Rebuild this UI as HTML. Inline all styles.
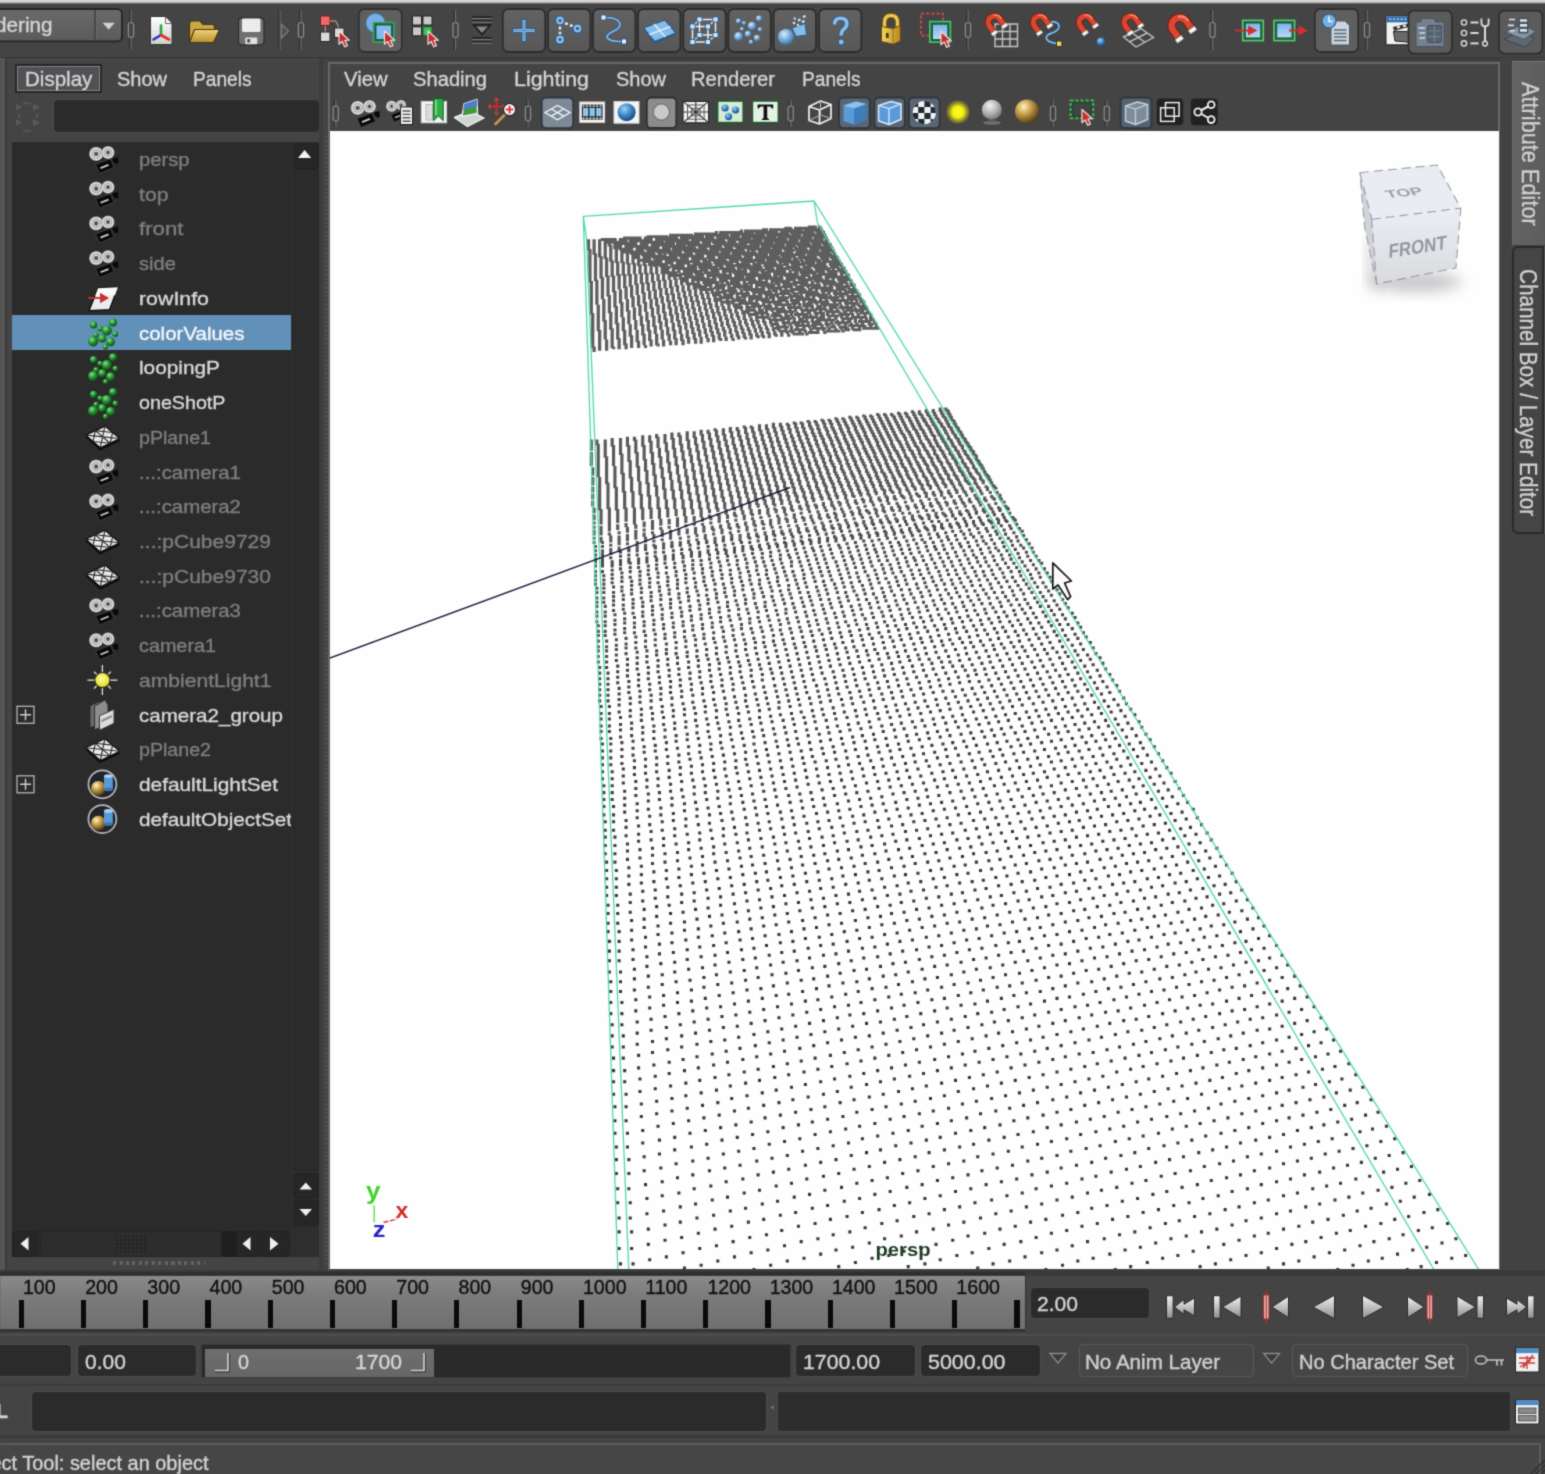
<!DOCTYPE html>
<html><head><meta charset="utf-8"><title>Maya</title><style>
html,body{margin:0;padding:0;}
html{background:#444;overflow:hidden;}
body{width:1545px;height:1474px;overflow:hidden;background:#444;position:relative;
font-family:"Liberation Sans",sans-serif;}
#root{position:absolute;left:-6px;top:-6px;width:1557px;height:1486px;background:#444;filter:url(#pgblur);overflow:hidden;}
#pg{position:absolute;left:6px;top:6px;width:1545px;height:1474px;}
#pg div,#pg svg,#pg span.t{position:absolute;box-sizing:border-box;}
span.t{white-space:pre;line-height:1;transform-origin:0 0;display:block;-webkit-text-stroke:.38px currentColor;}
svg{overflow:visible;}
</style></head><body><div id="root"><div id="pg">
<svg width="0" height="0" style="left:0;top:0"><defs><filter id="pgblur" x="0" y="0" width="100%" height="100%" color-interpolation-filters="sRGB"><feConvolveMatrix order="3" kernelMatrix="1 4 1 4 16 4 1 4 1" edgeMode="duplicate" preserveAlpha="true"/></filter></defs></svg>
<div style="left:-6px;top:-6px;width:1557px;height:9.6px;background:linear-gradient(#dadada,#dadada 62%,#c8c8c8 82%,#444 100%);"></div>
<div style="left:0px;top:57px;width:1545px;height:2.5px;background:#3a3a3a;"></div>
<div style="left:0px;top:58px;width:5px;height:1212px;background:#565656;"></div>
<div style="left:5px;top:58px;width:2px;height:1212px;background:#3a3a3a;"></div>
<div style="left:7px;top:59px;width:316px;height:1211px;background:#444;border-top:1px solid #4e4e4e;"></div>
<div style="left:14.5px;top:63.5px;width:87px;height:29px;background:#4f5154;border:2px solid #272727;box-shadow:inset 0 0 0 1px #868686;"></div>
<span class="t" style="left:24.6px;top:69.69px;font-size:19.5px;color:#d2d2d2;transform:scaleX(1.0541);">Display</span>
<span class="t" style="left:117px;top:69.69px;font-size:19.5px;color:#d2d2d2;transform:scaleX(1.0250);">Show</span>
<span class="t" style="left:192.5px;top:69.69px;font-size:19.5px;color:#d2d2d2;transform:scaleX(0.9811);">Panels</span>
<div style="left:53.5px;top:100px;width:265px;height:31.5px;background:#2b2b2b;border-radius:4px;box-shadow:0 0 0 1px #4c4c4c;"></div>
<div style="left:12px;top:141.5px;width:306.5px;height:1115px;background:#2b2b2b;"></div>
<div style="left:12px;top:315.3px;width:278.5px;height:35.2px;background:#6190b9;"></div>
<span class="t" style="left:139.4px;top:150.86px;font-size:18.6px;color:#7d7d7d;transform:scaleX(1.0853);">persp</span>
<span class="t" style="left:139.4px;top:185.60px;font-size:18.6px;color:#7d7d7d;transform:scaleX(1.1409);">top</span>
<span class="t" style="left:139.4px;top:220.34px;font-size:18.6px;color:#7d7d7d;transform:scaleX(1.1956);">front</span>
<span class="t" style="left:139.4px;top:255.08px;font-size:18.6px;color:#7d7d7d;transform:scaleX(1.0843);">side</span>
<span class="t" style="left:139.4px;top:289.82px;font-size:18.6px;color:#d6d6d6;transform:scaleX(1.1476);">rowInfo</span>
<span class="t" style="left:139.4px;top:324.56px;font-size:18.6px;color:#f4f6f8;transform:scaleX(1.1011);">colorValues</span>
<span class="t" style="left:139.4px;top:359.30px;font-size:18.6px;color:#d6d6d6;transform:scaleX(1.1188);">loopingP</span>
<span class="t" style="left:139.4px;top:394.04px;font-size:18.6px;color:#d6d6d6;transform:scaleX(1.0587);">oneShotP</span>
<span class="t" style="left:139.4px;top:428.78px;font-size:18.6px;color:#7d7d7d;transform:scaleX(1.0547);">pPlane1</span>
<span class="t" style="left:139.4px;top:463.52px;font-size:18.6px;color:#7d7d7d;transform:scaleX(1.0963);">...:camera1</span>
<span class="t" style="left:139.4px;top:498.26px;font-size:18.6px;color:#7d7d7d;transform:scaleX(1.0963);">...:camera2</span>
<span class="t" style="left:139.4px;top:533.00px;font-size:18.6px;color:#7d7d7d;transform:scaleX(1.1296);">...:pCube9729</span>
<span class="t" style="left:139.4px;top:567.74px;font-size:18.6px;color:#7d7d7d;transform:scaleX(1.1296);">...:pCube9730</span>
<span class="t" style="left:139.4px;top:602.48px;font-size:18.6px;color:#7d7d7d;transform:scaleX(1.0963);">...:camera3</span>
<span class="t" style="left:139.4px;top:637.22px;font-size:18.6px;color:#7d7d7d;transform:scaleX(1.0640);">camera1</span>
<span class="t" style="left:139.4px;top:671.96px;font-size:18.6px;color:#7d7d7d;transform:scaleX(1.1339);">ambientLight1</span>
<span class="t" style="left:139.4px;top:706.70px;font-size:18.6px;color:#d6d6d6;transform:scaleX(1.1053);">camera2_group</span>
<span class="t" style="left:139.4px;top:741.44px;font-size:18.6px;color:#7d7d7d;transform:scaleX(1.0547);">pPlane2</span>
<span class="t" style="left:139.4px;top:776.18px;font-size:18.6px;color:#d6d6d6;transform:scaleX(1.1201);">defaultLightSet</span>
<span class="t" style="left:139.4px;top:810.92px;font-size:18.6px;color:#d6d6d6;transform:scaleX(1.1125);">defaultObjectSet</span>
<div style="left:290.5px;top:141.5px;width:28px;height:1115px;background:#2e2e2e;"></div>
<div style="left:293px;top:143px;width:25.5px;height:25.5px;background:#262626;border:1px solid #222;border-radius:3px;"></div>
<div style="left:293px;top:169px;width:25.5px;height:1002px;background:#2b2b2b;border:1px solid #252525;border-radius:3px;"></div>
<div style="left:293px;top:1173px;width:25.5px;height:26px;background:#262626;border:1px solid #222;border-radius:3px;"></div>
<div style="left:293px;top:1200px;width:25.5px;height:26px;background:#262626;border:1px solid #222;border-radius:3px;"></div>
<svg style="left:293px;top:143px;" width="26" height="1090" viewBox="0 0 26 1090"><path d="M5 15 L11.6 7 L18.2 15Z" fill="#f4f4f4"/><path d="M6.5 1046.5 L12.8 1039.5 L19 1046.5Z" fill="#f0f0f0"/><path d="M6.5 1066 L12.8 1073 L19 1066Z" fill="#f0f0f0"/></svg>
<div style="left:12px;top:1231px;width:278.5px;height:25.5px;background:#2a2a2a;"></div>
<div style="left:12px;top:1231px;width:26px;height:25.5px;background:#262626;border:1px solid #222;border-radius:3px;"></div>
<div style="left:40px;top:1231px;width:182px;height:25.5px;background:#2d2d2d;border:1px solid #252525;border-radius:3px;"></div>
<div style="left:222px;top:1231px;width:14px;height:25.5px;background:#1f1f1f;"></div>
<div style="left:236px;top:1231px;width:26px;height:25.5px;background:#262626;border:1px solid #222;border-radius:3px;"></div>
<div style="left:263px;top:1231px;width:26px;height:25.5px;background:#262626;border:1px solid #222;border-radius:3px;"></div>
<svg style="left:12px;top:1231px;" width="280" height="26" viewBox="0 0 280 26"><path d="M16.5 6 L8.5 12.7 L16.5 19.5Z" fill="#f0f0f0"/><path d="M238.5 6 L230.5 12.7 L238.5 19.5Z" fill="#f0f0f0"/><path d="M258 6 L266.5 12.7 L258 19.5Z" fill="#f0f0f0"/><rect x="104" y="5" width="30" height="16" fill="url(#hgrip)"/><defs><pattern id="hgrip" width="4" height="4" patternUnits="userSpaceOnUse"><rect width="2" height="2" fill="#222"/></pattern></defs></svg>
<div style="left:113px;top:1260.5px;width:92px;height:4px;background:repeating-linear-gradient(90deg,#6a6a6a 0 3px,transparent 3px 6.5px);opacity:.8;"></div>
<div style="left:318.5px;top:59px;width:10px;height:1211px;background:#3d3d3d;"></div>
<div style="left:323px;top:59px;width:5.5px;height:1211px;background:#434343;"></div>
<div style="left:325px;top:136px;width:2px;height:1128px;background:repeating-linear-gradient(180deg,#585858 0 2px,transparent 2px 4.3px);opacity:.75;"></div>
<div style="left:328px;top:62px;width:1172px;height:1208px;background:#444;border:2px solid #686868;border-bottom:none;"></div>
<span class="t" style="left:343.5px;top:69.69px;font-size:19.5px;color:#d2d2d2;transform:scaleX(1.0378);">View</span>
<span class="t" style="left:412.5px;top:69.69px;font-size:19.5px;color:#d2d2d2;transform:scaleX(1.0340);">Shading</span>
<span class="t" style="left:514px;top:69.69px;font-size:19.5px;color:#d2d2d2;transform:scaleX(1.0979);">Lighting</span>
<span class="t" style="left:615.5px;top:69.69px;font-size:19.5px;color:#d2d2d2;transform:scaleX(1.0250);">Show</span>
<span class="t" style="left:691px;top:69.69px;font-size:19.5px;color:#d2d2d2;transform:scaleX(1.0332);">Renderer</span>
<span class="t" style="left:802px;top:69.69px;font-size:19.5px;color:#d2d2d2;transform:scaleX(0.9811);">Panels</span>
<div style="left:329.5px;top:131px;width:1169.2px;height:1137.5px;background:#fefefe;overflow:hidden;"></div>
<div style="left:1500px;top:58px;width:45px;height:1214px;background:#424242;"></div>
<div style="left:1511.5px;top:61px;width:40px;height:184px;background:linear-gradient(90deg,#636363,#5b5b5b);border-top:1px solid #777;border-left:1px solid #6a6a6a;"></div>
<div style="left:1543px;top:246px;width:3px;height:288px;background:#555;"></div>
<div style="left:1512px;top:245.5px;width:31.5px;height:288px;background:#454545;border:2px solid #2a2a2a;border-radius:6px 0 0 6px;"></div>
<span class="t" style="left:1541.2px;top:82.3px;font-size:23px;color:#d0d0d0;transform-origin:0 0;transform:rotate(90deg) scaleX(.945);">Attribute Editor</span>
<span class="t" style="left:1539.3px;top:268.5px;font-size:23px;color:#d0d0d0;transform-origin:0 0;transform:rotate(90deg) scaleX(.899);">Channel Box / Layer Editor</span>
<div style="left:0px;top:1270px;width:1545px;height:6px;background:#3a3a3a;"></div>
<div style="left:0px;top:1272px;width:1025px;height:3px;background:#2f2f2f;"></div>
<div style="left:0px;top:1275.5px;width:1024.5px;height:53px;background:linear-gradient(#8a8a8a,#7c7c7c 35%,#6f6f6f);"></div>
<div style="left:0px;top:1328.5px;width:1025px;height:3px;background:#353535;"></div>
<div style="left:1024.5px;top:1275.5px;width:1.5px;height:53px;background:#333;"></div>
<div style="left:18.7px;top:1300px;width:5.2px;height:28px;background:#0a0a0a;"></div>
<span class="t" style="left:22.9px;top:1278.01px;font-size:19.6px;color:#111;transform:scaleX(1.0000);">100</span>
<div style="left:80.93px;top:1300px;width:5.2px;height:28px;background:#0a0a0a;"></div>
<span class="t" style="left:85.13px;top:1278.01px;font-size:19.6px;color:#111;transform:scaleX(1.0000);">200</span>
<div style="left:143.16px;top:1300px;width:5.2px;height:28px;background:#0a0a0a;"></div>
<span class="t" style="left:147.36px;top:1278.01px;font-size:19.6px;color:#111;transform:scaleX(1.0000);">300</span>
<div style="left:205.39px;top:1300px;width:5.2px;height:28px;background:#0a0a0a;"></div>
<span class="t" style="left:209.59px;top:1278.01px;font-size:19.6px;color:#111;transform:scaleX(1.0000);">400</span>
<div style="left:267.62px;top:1300px;width:5.2px;height:28px;background:#0a0a0a;"></div>
<span class="t" style="left:271.82px;top:1278.01px;font-size:19.6px;color:#111;transform:scaleX(1.0000);">500</span>
<div style="left:329.85px;top:1300px;width:5.2px;height:28px;background:#0a0a0a;"></div>
<span class="t" style="left:334.05px;top:1278.01px;font-size:19.6px;color:#111;transform:scaleX(1.0000);">600</span>
<div style="left:392.08px;top:1300px;width:5.2px;height:28px;background:#0a0a0a;"></div>
<span class="t" style="left:396.28px;top:1278.01px;font-size:19.6px;color:#111;transform:scaleX(1.0000);">700</span>
<div style="left:454.31px;top:1300px;width:5.2px;height:28px;background:#0a0a0a;"></div>
<span class="t" style="left:458.51px;top:1278.01px;font-size:19.6px;color:#111;transform:scaleX(1.0000);">800</span>
<div style="left:516.54px;top:1300px;width:5.2px;height:28px;background:#0a0a0a;"></div>
<span class="t" style="left:520.74px;top:1278.01px;font-size:19.6px;color:#111;transform:scaleX(1.0000);">900</span>
<div style="left:578.77px;top:1300px;width:5.2px;height:28px;background:#0a0a0a;"></div>
<span class="t" style="left:582.97px;top:1278.01px;font-size:19.6px;color:#111;transform:scaleX(1.0000);">1000</span>
<div style="left:641px;top:1300px;width:5.2px;height:28px;background:#0a0a0a;"></div>
<span class="t" style="left:645.2px;top:1278.01px;font-size:19.6px;color:#111;transform:scaleX(1.0000);">1100</span>
<div style="left:703.23px;top:1300px;width:5.2px;height:28px;background:#0a0a0a;"></div>
<span class="t" style="left:707.43px;top:1278.01px;font-size:19.6px;color:#111;transform:scaleX(1.0000);">1200</span>
<div style="left:765.46px;top:1300px;width:5.2px;height:28px;background:#0a0a0a;"></div>
<span class="t" style="left:769.66px;top:1278.01px;font-size:19.6px;color:#111;transform:scaleX(1.0000);">1300</span>
<div style="left:827.69px;top:1300px;width:5.2px;height:28px;background:#0a0a0a;"></div>
<span class="t" style="left:831.89px;top:1278.01px;font-size:19.6px;color:#111;transform:scaleX(1.0000);">1400</span>
<div style="left:889.92px;top:1300px;width:5.2px;height:28px;background:#0a0a0a;"></div>
<span class="t" style="left:894.12px;top:1278.01px;font-size:19.6px;color:#111;transform:scaleX(1.0000);">1500</span>
<div style="left:952.15px;top:1300px;width:5.2px;height:28px;background:#0a0a0a;"></div>
<span class="t" style="left:956.35px;top:1278.01px;font-size:19.6px;color:#111;transform:scaleX(1.0000);">1600</span>
<div style="left:1014.38px;top:1300px;width:5.2px;height:28px;background:#0a0a0a;"></div>
<div style="left:1031px;top:1287.5px;width:118px;height:30.5px;background:#2b2b2b;border-radius:4px;box-shadow:0 0 0 1px #4a4a4a;"></div>
<span class="t" style="left:1037px;top:1295.49px;font-size:19.5px;color:#d2d2d2;transform:scaleX(1.0803);">2.00</span>
<div style="left:0px;top:1334.3px;width:1545px;height:1.6px;background:#4d4d4d;"></div>
<div style="left:-6px;top:1344.5px;width:77px;height:31.5px;background:#2b2b2b;border-radius:4px;box-shadow:0 0 0 1px #4d4d4d;"></div>
<div style="left:78px;top:1344.5px;width:118px;height:31.5px;background:#2b2b2b;border-radius:4px;box-shadow:0 0 0 1px #4d4d4d;"></div>
<span class="t" style="left:84.5px;top:1352.69px;font-size:19.5px;color:#d2d2d2;transform:scaleX(1.0750);">0.00</span>
<div style="left:201px;top:1343.5px;width:590px;height:34px;background:#2a2a2a;border:1px solid #3a3a3a;border-radius:2px;"></div>
<div style="left:204.5px;top:1348.5px;width:229.5px;height:28px;background:linear-gradient(#6e6e6e,#666);"></div>
<span class="t" style="left:238px;top:1352.69px;font-size:19.5px;color:#d4d4d4;transform:scaleX(1.0143);">0</span>
<span class="t" style="left:354.5px;top:1352.69px;font-size:19.5px;color:#d4d4d4;transform:scaleX(1.0834);">1700</span>
<svg style="left:204px;top:1348px;" width="232" height="30" viewBox="0 0 232 30"><path d="M11 22.5 H24 V5" fill="none" stroke="#d0d0d0" stroke-width="1.6"/><path d="M11 24 H25.5 V5" fill="none" stroke="#3a3a3a" stroke-width="1"/><path d="M207 22.5 H220 V5" fill="none" stroke="#d0d0d0" stroke-width="1.6"/><path d="M207 24 H221.5 V5" fill="none" stroke="#3a3a3a" stroke-width="1"/></svg>
<div style="left:796px;top:1344.5px;width:119px;height:31.5px;background:#2b2b2b;border-radius:4px;box-shadow:0 0 0 1px #4d4d4d;"></div>
<span class="t" style="left:803px;top:1352.69px;font-size:19.5px;color:#d2d2d2;transform:scaleX(1.0924);">1700.00</span>
<div style="left:921px;top:1344.5px;width:119px;height:31.5px;background:#2b2b2b;border-radius:4px;box-shadow:0 0 0 1px #4d4d4d;"></div>
<span class="t" style="left:927.5px;top:1352.69px;font-size:19.5px;color:#d2d2d2;transform:scaleX(1.0995);">5000.00</span>
<div style="left:1078.5px;top:1344px;width:175.5px;height:32.5px;background:#464646;border:1px solid #595959;border-radius:4px;"></div>
<span class="t" style="left:1085px;top:1352.69px;font-size:19.5px;color:#cfcfcf;transform:scaleX(1.0555);">No Anim Layer</span>
<div style="left:1292px;top:1344px;width:176px;height:32.5px;background:#464646;border:1px solid #595959;border-radius:4px;"></div>
<span class="t" style="left:1298.5px;top:1352.69px;font-size:19.5px;color:#cfcfcf;transform:scaleX(1.0289);">No Character Set</span>
<div style="left:0px;top:1383.5px;width:1545px;height:2px;background:#3c3c3c;"></div>
<span class="t" style="left:-4px;top:1402.49px;font-size:19.5px;color:#d2d2d2;font-weight:bold;transform:scaleX(1.0074);">L</span>
<div style="left:31.5px;top:1391.7px;width:734px;height:39.6px;background:#2b2b2b;border-radius:4px;box-shadow:0 0 0 1px #4d4d4d;"></div>
<div style="left:778px;top:1391.7px;width:732px;height:39.6px;background:#2d2d2d;border-radius:2px;box-shadow:0 0 0 1px #4a4a4a;"></div>
<svg style="left:768px;top:1404px;" width="8" height="8" viewBox="0 0 8 8"><path d="M5.5 1 L2.5 3.5 L5.5 5.5Z" fill="#777"/></svg>
<div style="left:0px;top:1435px;width:1545px;height:3px;background:#3a3a3a;"></div>
<div style="left:0px;top:1442.5px;width:1541px;height:32px;background:#464646;border-top:2px solid #5c5c5c;border-right:2px solid #5c5c5c;"></div>
<span class="t" style="left:-14.5px;top:1453.89px;font-size:19.5px;color:#d2d2d2;transform:scaleX(1.0229);">lect Tool: select an object</span>
<svg style="left:0px;top:0px;" width="1545" height="58" viewBox="0 0 1545 58"><defs>
<linearGradient id="gBtn" x1="0" y1="0" x2="0" y2="1"><stop offset="0" stop-color="#626262"/><stop offset="1" stop-color="#575757"/></linearGradient>
<linearGradient id="gDrop" x1="0" y1="0" x2="0" y2="1"><stop offset="0" stop-color="#6a6a6a"/><stop offset="1" stop-color="#5a5a5a"/></linearGradient>
<linearGradient id="gPage" x1="0" y1="0" x2="0" y2="1"><stop offset="0" stop-color="#ffffff"/><stop offset="1" stop-color="#d0d0d0"/></linearGradient>
<linearGradient id="gFold" x1="0" y1="0" x2="0" y2="1"><stop offset="0" stop-color="#efd476"/><stop offset="1" stop-color="#b98f32"/></linearGradient>
<linearGradient id="gLock" x1="0" y1="0" x2="1" y2="0"><stop offset="0" stop-color="#f5d560"/><stop offset="1" stop-color="#b8861c"/></linearGradient>
<linearGradient id="gBlueSq" x1="0" y1="0" x2="0" y2="1"><stop offset="0" stop-color="#7db4ea"/><stop offset="1" stop-color="#b7d8f6"/></linearGradient>
<linearGradient id="gPlay" x1="0" y1="0" x2="0" y2="1"><stop offset="0" stop-color="#f2f2f2"/><stop offset="1" stop-color="#8e8e8e"/></linearGradient>
<radialGradient id="gBlueSph" cx=".38" cy=".32" r=".75"><stop offset="0" stop-color="#d8ecfb"/><stop offset=".45" stop-color="#7fb3e0"/><stop offset="1" stop-color="#2f6399"/></radialGradient>
<radialGradient id="gBlueSph2" cx=".38" cy=".32" r=".75"><stop offset="0" stop-color="#9fd0f5"/><stop offset=".5" stop-color="#3c86c8"/><stop offset="1" stop-color="#123e70"/></radialGradient>
<radialGradient id="gGreenSph" cx=".38" cy=".32" r=".75"><stop offset="0" stop-color="#8ee390"/><stop offset=".42" stop-color="#2a9c38"/><stop offset="1" stop-color="#08400f"/></radialGradient>
<radialGradient id="gGraySph" cx=".4" cy=".3" r=".75"><stop offset="0" stop-color="#f2f2f2"/><stop offset=".6" stop-color="#a9a9a9"/><stop offset="1" stop-color="#6c6c6c"/></radialGradient>
<radialGradient id="gGoldSph" cx=".36" cy=".3" r=".78"><stop offset="0" stop-color="#fff3c8"/><stop offset=".35" stop-color="#d2aa55"/><stop offset=".8" stop-color="#6e531c"/><stop offset="1" stop-color="#3d2e10"/></radialGradient>
<radialGradient id="gGlow" cx=".5" cy=".5" r=".5"><stop offset="0" stop-color="#ffff30"/><stop offset=".45" stop-color="#f4ee10"/><stop offset="1" stop-color="#d8d000" stop-opacity="0"/></radialGradient>
<radialGradient id="gSun" cx=".45" cy=".4" r=".6"><stop offset="0" stop-color="#ffffa8"/><stop offset="1" stop-color="#e8d820"/></radialGradient>
<radialGradient id="gReel" cx=".5" cy=".5" r=".5"><stop offset="0" stop-color="#444"/><stop offset=".28" stop-color="#6a6a6a"/><stop offset=".36" stop-color="#e4e4e4"/><stop offset=".58" stop-color="#a4a4a4"/><stop offset=".78" stop-color="#ececec"/><stop offset="1" stop-color="#7c7c7c"/></radialGradient>
<g id="cur"><path d="M0 0 L0 13.2 L3.3 10.4 L5.6 15.8 L8.4 14.6 L6 9.4 L10.2 9.2Z" fill="#c42c2c" stroke="#f0dede" stroke-width="1.2" stroke-linejoin="round"/></g>
<g id="mag"><g transform="rotate(55)"><path d="M7 -9.3 L0 -9.3 A9.3 9.3 0 0 0 0 9.3 L7 9.3 L7 3.3 L0 3.3 A3.3 3.3 0 0 1 0 -3.3 L7 -3.3Z" fill="#d8472f" stroke="#7a1a10" stroke-width=".9"/><path d="M1 -7.6 A7.6 7.6 0 0 0 -6.5 -3" fill="none" stroke="#f08a70" stroke-width="1.6"/><path d="M7 -9.3 H10.4 V-3.3 H7Z M7 3.3 H10.4 V9.3 H7Z" fill="#f6f6f6" stroke="#8a8a8a" stroke-width=".5"/></g></g>
<g id="cam"><circle cx="8.2" cy="8.4" r="7.2" fill="url(#gReel)"/><circle cx="20" cy="7" r="6.6" fill="url(#gReel)"/>
<path d="M7.5 19 L22.5 13.4 L26 22 L11.5 28 Z" fill="#080808" stroke="#4a4a4a" stroke-width=".8" stroke-linejoin="round"/><path d="M24 13.2 L30 11.6 L30.2 18.2 L26 17.4Z" fill="#080808"/><path d="M12.5 22.6 L20.5 19.4" stroke="#d0d0d0" stroke-width="1.7"/></g>
<g id="part"><circle cx="5" cy="6" r="3.6" fill="url(#gGreenSph)"/><circle cx="24.5" cy="3.6" r="4" fill="url(#gGreenSph)"/><circle cx="11.5" cy="9.8" r="2.6" fill="url(#gGreenSph)"/>
<circle cx="18.2" cy="11.5" r="5" fill="url(#gGreenSph)"/><circle cx="26.8" cy="15" r="2.8" fill="url(#gGreenSph)"/><circle cx="7.5" cy="16" r="2.7" fill="url(#gGreenSph)"/>
<circle cx="4.6" cy="22.5" r="5" fill="url(#gGreenSph)"/><circle cx="13.6" cy="19.6" r="4" fill="url(#gGreenSph)"/><circle cx="22" cy="23" r="4.4" fill="url(#gGreenSph)"/><circle cx="17" cy="28" r="2.6" fill="url(#gGreenSph)"/></g>
<g id="mesh"><path d="M1 10.2 L18.5 1.4 L32 13.6 L14.2 22.6Z" fill="#e9e9e9" stroke="#111" stroke-width="1.2" stroke-linejoin="round"/>
<path d="M9.8 5.8 L23.2 18.2 M1 10.2 L32 13.6 M18.5 1.4 L14.2 22.6 M9.8 5.8 L25.5 7.6 M7.6 16.4 L23.2 18.2 M9.8 5.8 L7.6 16.4 M25.5 7.6 L23.2 18.2" stroke="#2a2a2a" stroke-width="1.05" fill="none"/>
<path d="M1.8 11.8 L14.2 24.2 L31.6 15.2" stroke="#0a0a0a" stroke-width="1.6" fill="none"/></g>
<g id="set"><circle cx="15" cy="15" r="14" fill="#20242c" stroke="#b9b9b9" stroke-width="1.7"/><circle cx="11" cy="19" r="7.4" fill="url(#gGoldSph)"/>
<path d="M16.6 6.6 h8.8 v13.4 h-8.8z" fill="#5b9ad6"/><ellipse cx="21" cy="6.8" rx="4.4" ry="1.9" fill="#a9d2f4"/><ellipse cx="21" cy="20" rx="4.4" ry="1.9" fill="#3d78b4"/></g>
</defs><rect x="-8" y="9" width="130" height="32.4" rx="5" fill="url(#gDrop)" stroke="#242424" stroke-width="1.8"/><path d="M95 10V40" stroke="#3a3a3a" stroke-width="1.4"/><path d="M96.3 10V40" stroke="#6c6c6c" stroke-width="1"/><path d="M102.6 22.8 H114.8 L108.7 29.8Z" fill="#d2d2d2"/><path d="M131 10V50" stroke="#707070" stroke-width="1.2"/><path d="M129.7 10V50" stroke="#303030" stroke-width="1.2"/><rect x="128.4" y="22.5" width="5.2" height="15" rx="2.4" fill="#444" stroke="#8b8b8b" stroke-width="1.2"/><path d="M150.5 16.5 H165.5 L172 23.5 V44.5 H150.5Z" fill="url(#gPage)" stroke="#333" stroke-width="1"/><path d="M165.5 16.5 V23.5 H172Z" fill="#f8f8f8" stroke="#444" stroke-width=".8"/><path d="M161 35 V25.5" stroke="#22aa33" stroke-width="2.6" stroke-linecap="round"/><path d="M161 35 L153.5 39.5" stroke="#2233cc" stroke-width="2.6" stroke-linecap="round"/><path d="M161 35 L169 39.5" stroke="#dd3322" stroke-width="2.6" stroke-linecap="round"/><path d="M189.5 42 V24 Q189.5 21 192.5 21 H200 L203 24.5 H212.5 Q214.5 24.5 214.5 27 V42Z" fill="#c9a646" stroke="#4a3810" stroke-width="1.2"/><path d="M189.5 42.5 L194.5 29.5 H219.5 L213.5 42.5Z" fill="url(#gFold)" stroke="#4a3810" stroke-width="1.2" stroke-linejoin="round"/><rect x="238.5" y="17.8" width="25.5" height="27" rx="3.5" fill="#6f6f6f" stroke="#2a2a2a" stroke-width="1.2"/><rect x="242" y="18.5" width="18.5" height="13.5" rx="1.5" fill="#ececec"/><rect x="245.3" y="37.5" width="12" height="6.8" rx="1" fill="#e2e2e2"/><rect x="247.2" y="39" width="3" height="3.6" fill="#555"/><path d="M280 10V50" stroke="#6c6c6c" stroke-width="1.2"/><path d="M278.8 10V50" stroke="#303030" stroke-width="1.2"/><path d="M281.5 24.5 L288.5 31 L281.5 38Z" fill="#4f4f4f" stroke="#7c7c7c" stroke-width="1.2"/><path d="M301 10V50" stroke="#707070" stroke-width="1.2"/><path d="M299.7 10V50" stroke="#303030" stroke-width="1.2"/><rect x="298.4" y="22.5" width="5.2" height="15" rx="2.4" fill="#444" stroke="#8b8b8b" stroke-width="1.2"/><rect x="320.5" y="16" width="9.5" height="9.5" fill="#e86a6a" stroke="#7a1c1c" stroke-width="1"/><path d="M325.3 26V32 M330 21 H336 L339 28" stroke="#caa" stroke-width="1" fill="none"/><rect x="320.5" y="32" width="9.5" height="9.5" fill="#d9d9d9" stroke="#2a2a2a" stroke-width="1"/><rect x="334.5" y="28" width="9.5" height="9.5" fill="#d9d9d9" stroke="#2a2a2a" stroke-width="1"/><use href="#cur" x="339" y="31"/><rect x="358.8" y="9" width="43" height="43" rx="5.5" fill="#5f5f5f" stroke="#303030" stroke-width="1.8"/><circle cx="375.5" cy="23" r="9.6" fill="#76b0e6" stroke="#3c78b0" stroke-width=".8"/><rect x="373.5" y="22.5" width="20.5" height="19.5" fill="#1f5e3c" stroke="#35a86a" stroke-width="1.6"/><rect x="376.5" y="25.5" width="14.5" height="13.5" fill="#82baf0"/><use href="#cur" x="384.5" y="31"/><rect x="412.5" y="16" width="9" height="9" fill="#c9c9c9" stroke="#222" stroke-width="1"/><rect x="423" y="16" width="9" height="9" fill="#c9c9c9" stroke="#222" stroke-width="1"/><rect x="412.5" y="26.8" width="9" height="9" fill="#c9c9c9" stroke="#222" stroke-width="1"/><rect x="423" y="26.8" width="9" height="9" fill="#3fc060" stroke="#1c5a2a" stroke-width="1"/><use href="#cur" x="428" y="31"/><path d="M455.5 10V50" stroke="#707070" stroke-width="1.2"/><path d="M454.2 10V50" stroke="#303030" stroke-width="1.2"/><rect x="452.9" y="22.5" width="5.2" height="15" rx="2.4" fill="#444" stroke="#8b8b8b" stroke-width="1.2"/><path d="M472 17 H492 M472 20.8 H492 M472 38 H492 M472 41.8 H492" stroke="#1e1e1e" stroke-width="1.3"/><path d="M472 18.5 H492 M472 22.3 H492 M472 39.5 H492 M472 43.3 H492" stroke="#7c7c7c" stroke-width="1.1"/><path d="M473.5 25 H490.5 L482 34.5Z" fill="#5a5a5a" stroke="#151515" stroke-width="1.3"/><path d="M477 27.2 H487 L482 32.6Z" fill="#8a8a8a"/><rect x="502.8" y="9" width="42.4" height="43" rx="5.5" fill="url(#gBtn)" stroke="#2d2d2d" stroke-width="1.8"/><rect x="548" y="9" width="42.4" height="43" rx="5.5" fill="url(#gBtn)" stroke="#2d2d2d" stroke-width="1.8"/><rect x="593" y="9" width="42.4" height="43" rx="5.5" fill="url(#gBtn)" stroke="#2d2d2d" stroke-width="1.8"/><rect x="638" y="9" width="42.4" height="43" rx="5.5" fill="url(#gBtn)" stroke="#2d2d2d" stroke-width="1.8"/><rect x="683.3" y="9" width="42.4" height="43" rx="5.5" fill="url(#gBtn)" stroke="#2d2d2d" stroke-width="1.8"/><rect x="728.4" y="9" width="42.4" height="43" rx="5.5" fill="url(#gBtn)" stroke="#2d2d2d" stroke-width="1.8"/><rect x="773.6" y="9" width="42.4" height="43" rx="5.5" fill="url(#gBtn)" stroke="#2d2d2d" stroke-width="1.8"/><rect x="819" y="9" width="42.4" height="43" rx="5.5" fill="url(#gBtn)" stroke="#2d2d2d" stroke-width="1.8"/><path d="M524 19 V42 M512.5 30.5 H535.5" stroke="#2c5c8c" stroke-width="5.2"/><path d="M524 20 V41 M513.5 30.5 H534.5" stroke="#8cbce6" stroke-width="3"/><path d="M524 21 V40 M514.5 30.5 H533.5" stroke="#4a84ba" stroke-width=".9"/><path d="M560 21 V39 M560 21 L577 28" stroke="#e8f2fa" stroke-width="2.4" stroke-dasharray="3 2.4"/><circle cx="560" cy="20.5" r="4.6" fill="#8cbce6" stroke="#2c5c8c" stroke-width="1.4"/><circle cx="560" cy="20.5" r="1.6" fill="#2c5c8c"/><circle cx="560" cy="39.5" r="4.6" fill="#8cbce6" stroke="#2c5c8c" stroke-width="1.4"/><circle cx="560" cy="39.5" r="1.6" fill="#2c5c8c"/><circle cx="577.5" cy="28.5" r="4.6" fill="#8cbce6" stroke="#2c5c8c" stroke-width="1.4"/><circle cx="577.5" cy="28.5" r="1.6" fill="#2c5c8c"/><path d="M604 17.5 C622 17 624 27 614 31 C602 36 606 42 623 41.5" fill="none" stroke="#2c5c8c" stroke-width="3.2"/><path d="M604 17.5 C622 17 624 27 614 31 C602 36 606 42 623 41.5" fill="none" stroke="#8cbce6" stroke-width="1.6"/><rect x="601" y="15" width="5" height="5" fill="#e8f4fc" stroke="#2c5c8c" stroke-width="1"/><rect x="621.5" y="39" width="5" height="5" fill="#e8f4fc" stroke="#2c5c8c" stroke-width="1"/><path d="M643.5 28 L665 20 L676 33 L654.5 41.5Z" fill="#86bce8" stroke="#2c5c8c" stroke-width="1.2" stroke-linejoin="round"/><path d="M654 24 L665.5 37.2 M649 34.8 L670.5 26.5" stroke="#d6ebfa" stroke-width="1.6"/><path d="M643.5 28 L654.5 41.5 L676 33 L676 35 L654.5 43.8 L643.5 30Z" fill="#2a5a8c"/><path d="M692.5 26.5 H708 V42 H692.5Z M699.5 19.5 H715.5 V35 H699.5Z M692.5 26.5 L699.5 19.5 M708 26.5 L715.5 19.5 M708 42 L715.5 35 M692.5 42 L699.5 35" fill="none" stroke="#e4f1fb" stroke-width="1.5"/><rect x="689.9" y="23.9" width="5.2" height="5.2" fill="#cfe6f8" stroke="#2c5c8c" stroke-width="1"/><rect x="705.4" y="23.9" width="5.2" height="5.2" fill="#cfe6f8" stroke="#2c5c8c" stroke-width="1"/><rect x="689.9" y="39.4" width="5.2" height="5.2" fill="#cfe6f8" stroke="#2c5c8c" stroke-width="1"/><rect x="705.4" y="39.4" width="5.2" height="5.2" fill="#cfe6f8" stroke="#2c5c8c" stroke-width="1"/><rect x="696.9" y="16.9" width="5.2" height="5.2" fill="#cfe6f8" stroke="#2c5c8c" stroke-width="1"/><rect x="712.9" y="16.9" width="5.2" height="5.2" fill="#cfe6f8" stroke="#2c5c8c" stroke-width="1"/><rect x="712.9" y="32.4" width="5.2" height="5.2" fill="#cfe6f8" stroke="#2c5c8c" stroke-width="1"/><rect x="696.9" y="32.4" width="5.2" height="5.2" fill="#cfe6f8" stroke="#2c5c8c" stroke-width="1"/><circle cx="738.5" cy="21" r="2.6" fill="url(#gBlueSph)"/><circle cx="744" cy="23" r="2" fill="url(#gBlueSph)"/><circle cx="759" cy="18.5" r="3" fill="url(#gBlueSph)"/><circle cx="752" cy="26" r="4.2" fill="url(#gBlueSph)"/><circle cx="760" cy="29.5" r="2.2" fill="url(#gBlueSph)"/><circle cx="742" cy="29" r="2" fill="url(#gBlueSph)"/><circle cx="738.5" cy="36.5" r="4.4" fill="url(#gBlueSph)"/><circle cx="748" cy="34" r="3.2" fill="url(#gBlueSph)"/><circle cx="757" cy="38" r="3.2" fill="url(#gBlueSph)"/><circle cx="751" cy="42" r="2.2" fill="url(#gBlueSph)"/><circle cx="786" cy="37" r="8" fill="url(#gBlueSph)"/><path d="M792 28 L805 23.5 L806.5 35 L796 36.5Z" fill="#86bce8" stroke="#2c5c8c" stroke-width="1"/><path d="M793 23.5 l2 -1 M798 20.5 l2.5 -1 M803 17 l2.5 -1 M797 25.5 l2 -.8 M802 22 l2.5 -1 M794 19 l1.6 -.8" stroke="#d8ecfa" stroke-width="2.4"/><path d="M834.5 24.5 Q834.5 18.2 840.6 18.2 Q846.8 18.2 846.8 23.6 Q846.8 27 843.6 29.4 Q841.2 31.2 841.2 35.6" fill="none" stroke="#2c5c8c" stroke-width="5.8"/><path d="M834.5 24.5 Q834.5 18.2 840.6 18.2 Q846.8 18.2 846.8 23.6 Q846.8 27 843.6 29.4 Q841.2 31.2 841.2 35.6" fill="none" stroke="#8cbce6" stroke-width="3.6"/><circle cx="841.2" cy="42" r="3" fill="#8cbce6" stroke="#2c5c8c" stroke-width="1.1"/><path d="M884.5 28 V22.5 Q884.5 15.5 891 15.5 Q897.5 15.5 897.5 22.5 V28" fill="none" stroke="#8a6410" stroke-width="5"/><path d="M884.5 28 V22.5 Q884.5 15.5 891 15.5 Q897.5 15.5 897.5 22.5 V28" fill="none" stroke="#f0cc55" stroke-width="2.8"/><path d="M881.5 26.5 L893 28.5 L900.5 25.5 V41 L893 44.2 L881.5 41.5Z" fill="url(#gLock)" stroke="#6a4a0c" stroke-width="1"/><path d="M893 28.5 V44" stroke="#8a6410" stroke-width=".8"/><rect x="886" y="33" width="2.6" height="5" fill="#4a3408"/><rect x="921" y="13.6" width="22" height="22" fill="none" stroke="#d84a4a" stroke-width="1.8" stroke-dasharray="3 2.2"/><rect x="929.8" y="21.6" width="20.6" height="20.6" fill="#1f5e3c" stroke="#4cc46c" stroke-width="1.6"/><rect x="933" y="24.8" width="14.2" height="14.2" fill="url(#gBlueSq)"/><use href="#cur" x="941" y="31.5"/><path d="M968 10V50" stroke="#707070" stroke-width="1.2"/><path d="M966.7 10V50" stroke="#303030" stroke-width="1.2"/><rect x="965.4" y="22.5" width="5.2" height="15" rx="2.4" fill="#444" stroke="#8b8b8b" stroke-width="1.2"/><path d="M995 24 H1017.5 V46.5 H995Z M995 31.5 H1017.5 M995 39 H1017.5 M1002.5 24 V46.5 M1010 24 V46.5" fill="none" stroke="#c4c4c4" stroke-width="1.4"/><use href="#mag" x="994.5" y="22.3"/><path d="M1048 22 C1062 20 1062 30 1052 33 C1042 36 1046 43 1058 43.5" fill="none" stroke="#2c5c8c" stroke-width="3"/><path d="M1048 22 C1062 20 1062 30 1052 33 C1042 36 1046 43 1058 43.5" fill="none" stroke="#8cc0ea" stroke-width="1.4"/><rect x="1056.5" y="41" width="5.4" height="5.4" fill="#e6e050" stroke="#333" stroke-width="1"/><use href="#mag" x="1039.6" y="22.3"/><use href="#mag" x="1085.4" y="22.3"/><circle cx="1101" cy="41.8" r="4.3" fill="url(#gBlueSph2)"/><path d="M1123.5 37 L1141 28.5 L1153.5 37.5 L1136 47Z M1132 32.8 L1144.8 42.2 M1129.5 41.8 L1147.2 33" fill="none" stroke="#c4c4c4" stroke-width="1.4"/><use href="#mag" x="1130.5" y="22.3"/><g transform="translate(1179.6,25.6) scale(1.27)"><use href="#mag"/></g><path d="M1212.5 10V50" stroke="#707070" stroke-width="1.2"/><path d="M1211.2 10V50" stroke="#303030" stroke-width="1.2"/><rect x="1209.9" y="22.5" width="5.2" height="15" rx="2.4" fill="#444" stroke="#8b8b8b" stroke-width="1.2"/><rect x="1242.7" y="20.4" width="20.6" height="20.2" fill="#1f5e3c" stroke="#58cc70" stroke-width="1.6"/><rect x="1245.9" y="23.6" width="14.2" height="13.8" fill="url(#gBlueSq)"/><rect x="1274" y="20.4" width="20.6" height="20.2" fill="#1f5e3c" stroke="#58cc70" stroke-width="1.6"/><rect x="1277.2" y="23.6" width="14.2" height="13.8" fill="url(#gBlueSq)"/><path d="M1235 30.5 H1250" stroke="#c83030" stroke-width="2"/><path d="M1248 25.5 L1257.5 30.5 L1248 35.5Z" fill="#d03030"/><path d="M1289 30.5 H1300" stroke="#c83030" stroke-width="2"/><path d="M1298.5 25.5 L1308 30.5 L1298.5 35.5Z" fill="#d03030"/><rect x="1314.8" y="9" width="43.4" height="43" rx="5.5" fill="#5f5f5f" stroke="#303030" stroke-width="1.8"/><path d="M1331 21 H1345 L1349.5 25.5 V45 H1331Z" fill="#c9d4e0" stroke="#4a5866" stroke-width="1"/><path d="M1334 30 H1346.5 M1334 33.5 H1346.5 M1334 37 H1346.5 M1334 40.5 H1346.5" stroke="#5c6874" stroke-width="1.5"/><circle cx="1329" cy="21" r="7" fill="#74aee4" stroke="#2c5c8c" stroke-width="1.2"/><path d="M1329 16.5 V21.5 H1332.5" fill="none" stroke="#f4f8fc" stroke-width="1.5"/><path d="M1367 10V50" stroke="#707070" stroke-width="1.2"/><path d="M1365.7 10V50" stroke="#303030" stroke-width="1.2"/><rect x="1364.4" y="22.5" width="5.2" height="15" rx="2.4" fill="#444" stroke="#8b8b8b" stroke-width="1.2"/><rect x="1386" y="15.8" width="26" height="29" fill="#f2f2f2" stroke="#222" stroke-width="1"/><rect x="1386.5" y="16.3" width="25" height="6" fill="#2e6aa8"/><path d="M1389 19.3 H1411" stroke="#8cc0ee" stroke-width="2" stroke-dasharray="2.4 1.4"/><path d="M1393 27 L1412 22.5 V26 L1394 31Z" fill="#333"/><path d="M1393.5 31.5 H1412 V42.5 L1395 41Z" fill="#6a6a6a" stroke="#222" stroke-width="1"/><path d="M1397 27.6 l3 -.8 M1403 26.2 l3 -.8 M1409 24.8 l3 -.8" stroke="#eee" stroke-width="2.2"/><rect x="1408.5" y="10.6" width="43.4" height="43" rx="5.5" fill="#5b5b5b" stroke="#2f2f2f" stroke-width="1.8"/><path d="M1416 22 H1420.5 L1422 18.5 H1434 L1435.5 22 H1444 V46.5 H1416Z" fill="#75818f" stroke="#4a5560" stroke-width="1"/><path d="M1418.5 28 H1425 M1419.5 33 H1425 M1419.5 38 H1425" stroke="#b9c6d4" stroke-width="1.8"/><rect x="1427.5" y="25.5" width="14" height="17" rx="1.5" fill="#55626f" stroke="#46525e" stroke-width="1"/><path d="M1434.5 26 V42 M1428 31 H1441 M1428 36.6 H1441" stroke="#75818f" stroke-width="1.2"/><circle cx="1464" cy="22.5" r="2.6" fill="none" stroke="#dcdcdc" stroke-width="1.4"/><path d="M1470.5 22.5 H1478.5" stroke="#dcdcdc" stroke-width="2"/><circle cx="1464" cy="33" r="2.6" fill="none" stroke="#dcdcdc" stroke-width="1.4"/><path d="M1470.5 33 H1478.5" stroke="#dcdcdc" stroke-width="2"/><circle cx="1464" cy="43.4" r="2.6" fill="none" stroke="#dcdcdc" stroke-width="1.4"/><path d="M1470.5 43.4 H1478.5" stroke="#dcdcdc" stroke-width="2"/><path d="M1485 27 V41" stroke="#dcdcdc" stroke-width="2"/><circle cx="1485" cy="43.6" r="2.4" fill="none" stroke="#dcdcdc" stroke-width="1.4"/><path d="M1481.4 18.4 V22.4 Q1481.4 26.2 1485 26.2 Q1488.6 26.2 1488.6 22.4 V18.4" fill="none" stroke="#dcdcdc" stroke-width="1.8"/><rect x="1499" y="10.6" width="43.4" height="43" rx="5.5" fill="#5b5b5b" stroke="#2f2f2f" stroke-width="1.8"/><path d="M1503.5 39 L1522 31 L1534.5 38.5 L1525 47 Z" fill="#5c6874" stroke="#3c4650" stroke-width="1"/><path d="M1505 32 L1523 24.5 L1535.5 31.5 L1524 39.5Z" fill="#8494a4" stroke="#46525e" stroke-width="1"/><rect x="1518.5" y="17.5" width="10" height="16" rx="1.2" fill="#46525e"/><path d="M1520 20.5 H1527 M1520 25.4 H1527 M1520 30.4 H1527" stroke="#d8e2ec" stroke-width="2.6"/><path d="M1509 19.5 H1515 M1508 25.4 H1514 M1509.5 30.8 H1514.5" stroke="#d8e2ec" stroke-width="1.6"/></svg>
<span class="t" style="left:-5.5px;top:15.81px;font-size:19.6px;color:#d4d4d4;transform:scaleX(1.0553);">dering</span>
<svg style="left:0px;top:0px;" width="1545" height="135" viewBox="0 0 1545 135"><path d="M335.8 100V127" stroke="#707070" stroke-width="1.2"/><path d="M334.5 100V127" stroke="#303030" stroke-width="1.2"/><rect x="333.2" y="106" width="5.2" height="15" rx="2.4" fill="#444" stroke="#8b8b8b" stroke-width="1.2"/><use href="#cam" x="349.5" y="99.5" transform="translate(0 0)"/><g transform="translate(385,99.5) scale(.8)"><use href="#cam"/></g><rect x="400.5" y="107" width="12" height="17.5" fill="#f0f0f0" stroke="#222" stroke-width="1"/><path d="M402.5 111 H410.5 M402.5 114.4 H410.5 M402.5 117.8 H410.5 M402.5 121.2 H410.5" stroke="#555" stroke-width="1.4"/><rect x="421.3" y="101.4" width="25.3" height="21.4" fill="#f4f4f4" stroke="#cfcfcf" stroke-width="1"/><rect x="426" y="104.5" width="6.5" height="15.5" fill="#dcdcdc" stroke="#b4b4b4" stroke-width="1"/><path d="M433.6 98.6 H443.2 V120.6 L438.4 116 L433.6 120.6Z" fill="#2fae48" stroke="#115a22" stroke-width="1"/><path d="M436 100 V115" stroke="#7fe08f" stroke-width="1.6"/><path d="M454.5 117.5 L470.5 111 L484 118 L467.5 126.5Z" fill="#cfd6cf" stroke="#f4f4f4" stroke-width="1.4" stroke-linejoin="round"/><path d="M462 116.5 L464 104 L477 99.5 L477.5 113.5Z" fill="#3f9a3a" stroke="#e8eef4" stroke-width="1.4" stroke-linejoin="round"/><path d="M464 104 L477 99.5 L477.2 106 L463.2 110Z" fill="#4a7fd0"/><path d="M496.5 99.5 V113.5 M489.5 106.5 H503.5" stroke="#c92c2c" stroke-width="2.6" stroke-dasharray="2.4 .9"/><path d="M496.5 97.6 l-2.8 3 h5.6z M496.5 115.4 l-2.8 -3 h5.6z M487.6 106.5 l3 -2.8 v5.6z M505.4 106.5 l-3 -2.8 v5.6z" fill="#d83a3a"/><path d="M505 114.5 L495.5 124" stroke="#c49a4a" stroke-width="2.6" stroke-linecap="round"/><circle cx="509.6" cy="109.6" r="6.2" fill="#f6f6f6" stroke="#2a2a2a" stroke-width="1.4"/><path d="M509.6 105.8 V113.4 M505.8 109.6 H513.4" stroke="#d83a3a" stroke-width="2"/><path d="M528 100V127" stroke="#707070" stroke-width="1.2"/><path d="M526.7 100V127" stroke="#303030" stroke-width="1.2"/><rect x="525.4" y="106" width="5.2" height="15" rx="2.4" fill="#444" stroke="#8b8b8b" stroke-width="1.2"/><rect x="541.7" y="97.5" width="31.5" height="30.6" rx="4.5" fill="#7d8996" stroke="#2d3640" stroke-width="1.8"/><path d="M545 112.5 L557.5 105.5 L570 112.5 L557.5 119.8Z M551.2 109 L563.8 116.2 M563.8 109 L551.2 116.2" fill="none" stroke="#f2f6fa" stroke-width="1.4"/><rect x="579.8" y="102" width="24.8" height="20.4" fill="#f4f4f4" stroke="#d8d8d8" stroke-width="1"/><rect x="581.8" y="104.6" width="20.8" height="15" fill="#2e2e2e"/><rect x="583" y="108" width="5.2" height="8.2" fill="#8cc6f0"/><rect x="589.6" y="108" width="5.2" height="8.2" fill="#8cc6f0"/><rect x="596.2" y="108" width="5.2" height="8.2" fill="#8cc6f0"/><path d="M582.6 106.2 H602 M582.6 118.2 H602" stroke="#e8e8e8" stroke-width="1.4" stroke-dasharray="1.8 1.6"/><rect x="614" y="101.6" width="25" height="21.6" fill="#f4f4f4" stroke="#d8d8d8" stroke-width="1"/><circle cx="626.6" cy="112.2" r="9" fill="url(#gBlueSph2)"/><rect x="646.8" y="97.5" width="29.5" height="30.4" rx="4.5" fill="#8c8c8c" stroke="#2e2e2e" stroke-width="1.8"/><circle cx="661.4" cy="112" r="8.2" fill="#c9c9c9" stroke="#767676" stroke-width="1.4"/><rect x="683" y="101.4" width="25.6" height="21.4" fill="#f2f2f2" stroke="#2a2a2a" stroke-width="1.2"/><path d="M683 101.4 L708.6 122.8 M708.6 101.4 L683 122.8 M695.8 101.4 V122.8 M683 112 H708.6" stroke="#3a3a3a" stroke-width="1.2"/><rect x="687.5" y="105" width="16.6" height="14.2" fill="none" stroke="#555" stroke-width="1"/><rect x="691.5" y="108.4" width="8.6" height="7.4" fill="none" stroke="#555" stroke-width="1"/><rect x="717.6" y="101" width="25.6" height="21.6" fill="#d4ecd4" stroke="#1f5a2c" stroke-width="1.6"/><circle cx="725" cy="108" r="3.6" fill="url(#gBlueSph2)"/><circle cx="735.5" cy="110" r="3.6" fill="url(#gBlueSph2)"/><circle cx="728.5" cy="116.6" r="3.6" fill="url(#gBlueSph2)"/><rect x="752.4" y="101" width="26" height="21.6" fill="#e4f2e4" stroke="#1f5a2c" stroke-width="1.6"/><path d="M757.6 104.6 H773.2 V108.4 H771.8 Q771.4 106.4 769.4 106.4 H767.2 V117.6 Q767.2 118.8 769 118.9 V120 H761.8 V118.9 Q763.6 118.8 763.6 117.6 V106.4 H761.4 Q759.4 106.4 759 108.4 H757.6Z" fill="#111"/><path d="M790.7 100V127" stroke="#707070" stroke-width="1.2"/><path d="M789.4 100V127" stroke="#303030" stroke-width="1.2"/><rect x="788.1" y="106" width="5.2" height="15" rx="2.4" fill="#444" stroke="#8b8b8b" stroke-width="1.2"/><path d="M809 106.5 L820.5 101 L831 104.5 V118.5 L819.5 124 L809 120.5Z M809 106.5 L819.5 110 L831 104.5 M819.5 110 V124" fill="none" stroke="#f2f2f2" stroke-width="1.7" stroke-linejoin="round"/><path d="M820.5 101 V115 L809 120.5 M820.5 115 L831 118.5" fill="none" stroke="#bdbdbd" stroke-width="1"/><rect x="839" y="97.5" width="31" height="30.6" rx="4.5" fill="#5a6673" stroke="#2d3640" stroke-width="1.8"/><path d="M843.5 105.5 L856 101.5 L866.5 104 V119.5 L854 124.5 L843.5 121Z" fill="#5a9ad8"/><path d="M843.5 105.5 L856 101.5 L866.5 104 L854 108.6Z" fill="#8cc0ee"/><path d="M854 108.6 L866.5 104 V119.5 L854 124.5Z" fill="#3f7cbc"/><rect x="874.4" y="97.5" width="30.4" height="30.6" rx="4.5" fill="#5a6673" stroke="#2d3640" stroke-width="1.8"/><path d="M878.6 105.5 L891 101.5 L901 104 V119.5 L889 124.5 L878.6 121Z" fill="#5a9ad8" stroke="#dcecfa" stroke-width="1.5" stroke-linejoin="round"/><path d="M878.6 105.5 L889 108.6 L901 104 M889 108.6 V124.5" fill="none" stroke="#dcecfa" stroke-width="1.3"/><rect x="909" y="97.5" width="30.6" height="30.6" rx="4.5" fill="#5a6673" stroke="#2d3640" stroke-width="1.8"/><clipPath id="ck"><circle cx="924.3" cy="112.6" r="11.6"/></clipPath><circle cx="924.3" cy="112.6" r="11.6" fill="#f2f2f2"/><g clip-path="url(#ck)" fill="#1e2a36"><rect x="912" y="101" width="6.2" height="6"/><rect x="924.4" y="101" width="6.2" height="6"/><rect x="918.2" y="107" width="6.2" height="6"/><rect x="930.6" y="107" width="6.2" height="6"/><rect x="912" y="113" width="6.2" height="6"/><rect x="924.4" y="113" width="6.2" height="6"/><rect x="918.2" y="119" width="6.2" height="6"/><rect x="930.6" y="119" width="6.2" height="6"/></g><circle cx="958" cy="112" r="12.5" fill="url(#gGlow)"/><ellipse cx="992" cy="122.8" rx="9" ry="2.2" fill="#6c6c6c"/><circle cx="991.8" cy="109.8" r="10" fill="url(#gGraySph)"/><circle cx="1027" cy="111.6" r="12" fill="url(#gGoldSph)"/><path d="M1053 100V127" stroke="#707070" stroke-width="1.2"/><path d="M1051.7 100V127" stroke="#303030" stroke-width="1.2"/><rect x="1050.4" y="106" width="5.2" height="15" rx="2.4" fill="#444" stroke="#8b8b8b" stroke-width="1.2"/><rect x="1070.6" y="100.6" width="22.6" height="17.6" fill="#264a30" stroke="#4cb45c" stroke-width="2" stroke-dasharray="3 2"/><rect x="1073.6" y="103.6" width="16.6" height="11.6" fill="#444"/><use href="#cur" x="1082" y="109.5"/><path d="M1106.8 100V127" stroke="#707070" stroke-width="1.2"/><path d="M1105.5 100V127" stroke="#303030" stroke-width="1.2"/><rect x="1104.2" y="106" width="5.2" height="15" rx="2.4" fill="#444" stroke="#8b8b8b" stroke-width="1.2"/><rect x="1120.5" y="97.5" width="31" height="30.6" rx="4.5" fill="#56626e" stroke="#2d3640" stroke-width="1.8"/><path d="M1125.5 106 L1137.5 102 L1147.5 104.5 V119.5 L1135.5 124.5 L1125.5 121Z" fill="#7d8b9a" stroke="#c4d0dc" stroke-width="1.5" stroke-linejoin="round"/><path d="M1125.5 106 L1135.5 109 L1147.5 104.5 M1135.5 109 V124.5" fill="none" stroke="#c4d0dc" stroke-width="1.3"/><rect x="1156.8" y="98.6" width="26.4" height="26.6" rx="4" fill="#212121"/><rect x="1165.5" y="102.6" width="13.6" height="13.6" fill="none" stroke="#ececec" stroke-width="1.5"/><rect x="1160.6" y="107.8" width="13.6" height="13.6" fill="none" stroke="#ececec" stroke-width="1.5"/><rect x="1190.8" y="98.6" width="27" height="26.6" rx="4" fill="#212121"/><path d="M1198 112 L1211 105 M1198 112 L1211 119.5" stroke="#f2f2f2" stroke-width="2"/><circle cx="1198" cy="112" r="3.6" fill="#212121" stroke="#f2f2f2" stroke-width="1.8"/><circle cx="1211.2" cy="104.8" r="3.4" fill="#212121" stroke="#f2f2f2" stroke-width="1.8"/><circle cx="1211.2" cy="119.6" r="3.4" fill="#212121" stroke="#f2f2f2" stroke-width="1.8"/></svg>
<svg style="left:0px;top:0px;" width="330" height="850" viewBox="0 0 330 850"><g fill="#5a5a5a"><path d="M16 104 l6 3.2 l-6 3.2z M16 119 l6 3.2 l-6 3.2z M33 104 l7 3.4 l-7 3.4z M33 119 l7 3.4 l-7 3.4z"/><rect x="23" y="102.6" width="8" height="1.6"/><rect x="23" y="130" width="8" height="1.6"/><rect x="18.4" y="113.4" width="1.6" height="5"/><rect x="36.5" y="113.4" width="1.6" height="5"/></g><use href="#cam" x="88" y="145.5"/><use href="#cam" x="88" y="180.2"/><use href="#cam" x="88" y="215.0"/><use href="#cam" x="88" y="249.7"/><g transform="translate(88,287.2)"><path d="M10 1 L30 0 L21.5 22.5 L1 23.5Z" fill="#ececec" stroke="#111" stroke-width="1.4" stroke-linejoin="round"/><path d="M10 1 L30 0 L27 8 L7 9Z" fill="#fafafa"/><path d="M0 10.8 H14" stroke="#c83030" stroke-width="1.8"/><path d="M12 5.6 L21 10.8 L12 16Z" fill="#cc3030"/></g><use href="#part" x="88.5" y="318.9"/><use href="#part" x="88.5" y="353.6"/><use href="#part" x="88.5" y="388.4"/><g transform="translate(84.6,424.7) scale(1.1,1.02)"><use href="#mesh"/></g><use href="#cam" x="88" y="458.2"/><use href="#cam" x="88" y="492.9"/><g transform="translate(84.6,528.9) scale(1.1,1.02)"><use href="#mesh"/></g><g transform="translate(84.6,563.7) scale(1.1,1.02)"><use href="#mesh"/></g><use href="#cam" x="88" y="597.1"/><use href="#cam" x="88" y="631.9"/><path d="M110.4 680.1 L117.4 680.1 M108.1 685.8 L110.9 688.6 M102.4 688.1 L102.4 695.1 M96.7 685.8 L93.9 688.6 M94.4 680.1 L87.4 680.1 M96.7 674.4 L93.9 671.6 M102.4 672.1 L102.4 665.1 M108.1 674.4 L110.9 671.6" stroke="#e8e8c8" stroke-width="1.3"/><circle cx="102.4" cy="680.1" r="7" fill="url(#gSun)"/><g transform="translate(89,698.8)"><path d="M1 7 L12 2 V25 L1 29Z" fill="#6a6a6a" stroke="#2a2a2a" stroke-width="1"/><path d="M5.5 7.5 L16 1 L19 6 V26 L5.5 31Z" fill="#8c8c8c" stroke="#2a2a2a" stroke-width="1"/><path d="M10.5 17 L25 10.5 V24.5 L10.5 31.5Z" fill="#dcdcdc" stroke="#3a3a3a" stroke-width="1"/><path d="M12.5 21 L23 16.2 V18.4 L12.5 23.4Z" fill="#8a8a8a"/></g><g transform="translate(84.6,737.4) scale(1.1,1.02)"><use href="#mesh"/></g><use href="#set" x="87.4" y="769.3"/><use href="#set" x="87.4" y="804.1"/><rect x="17" y="706.3" width="17" height="17" fill="none" stroke="#b4b4b4" stroke-width="1.3"/><path d="M20 714.8 H31 M25.5 709.3 V720.3" stroke="#d0d0d0" stroke-width="1.4"/><rect x="17" y="775.8" width="17" height="17" fill="none" stroke="#b4b4b4" stroke-width="1.3"/><path d="M20 784.3 H31 M25.5 778.8 V789.8" stroke="#d0d0d0" stroke-width="1.4"/></svg>
<svg style="left:0px;top:0px;pointer-events:none;" width="1545" height="1474" viewBox="0 0 1545 1474"><rect x="1166.5" y="1295.75" width="6.6" height="22.5" fill="url(#gPlay)" stroke="#2a2a2a" stroke-width="1"/><path d="M1174.5 1307 L1184 1299.5 V1304.2 L1194.5 1298 V1316 L1184 1309.8 V1314.5Z" fill="url(#gPlay)" stroke="#2a2a2a" stroke-width="1"/><rect x="1213.5" y="1295.75" width="6.6" height="22.5" fill="url(#gPlay)" stroke="#2a2a2a" stroke-width="1"/><path d="M1241 1296 L1222.5 1307 L1241 1318Z" fill="url(#gPlay)" stroke="#2a2a2a" stroke-width="1"/><rect x="1263.6" y="1295" width="5.4" height="24" fill="#e0b4b4" stroke="#a82c2c" stroke-width="1"/><path d="M1266.3 1290.5 V1323.5" stroke="#b83434" stroke-width="1.1"/><path d="M1288.5 1296.25 L1272 1307 L1288.5 1317.75Z" fill="url(#gPlay)" stroke="#2a2a2a" stroke-width="1"/><path d="M1334.5 1295.25 L1313 1307 L1334.5 1318.75Z" fill="url(#gPlay)" stroke="#2a2a2a" stroke-width="1"/><path d="M1362.5 1295.25 L1384 1307 L1362.5 1318.75Z" fill="url(#gPlay)" stroke="#2a2a2a" stroke-width="1"/><path d="M1407.5 1296.25 L1424 1307 L1407.5 1317.75Z" fill="url(#gPlay)" stroke="#2a2a2a" stroke-width="1"/><rect x="1427" y="1295" width="5.4" height="24" fill="#e0b4b4" stroke="#a82c2c" stroke-width="1"/><path d="M1429.7 1290.5 V1323.5" stroke="#b83434" stroke-width="1.1"/><path d="M1457 1296 L1475.5 1307 L1457 1318Z" fill="url(#gPlay)" stroke="#2a2a2a" stroke-width="1"/><rect x="1477" y="1295.75" width="6.6" height="22.5" fill="url(#gPlay)" stroke="#2a2a2a" stroke-width="1"/><path d="M1526.5 1307 L1517 1299.5 V1304.2 L1506.5 1298 V1316 L1517 1309.8 V1314.5Z" fill="url(#gPlay)" stroke="#2a2a2a" stroke-width="1"/><rect x="1527.5" y="1295.75" width="6.6" height="22.5" fill="url(#gPlay)" stroke="#2a2a2a" stroke-width="1"/><path d="M1050 1353.5 H1066 L1058 1363Z" fill="#3a3a3a" stroke="#8a8a8a" stroke-width="1.3"/><path d="M1263.6 1353.5 H1279.6 L1271.6 1363Z" fill="#3a3a3a" stroke="#8a8a8a" stroke-width="1.3"/><ellipse cx="1481" cy="1360" rx="5.6" ry="4" fill="none" stroke="#c4c4c4" stroke-width="1.5"/><path d="M1486.5 1360 H1504 M1497 1360 V1365.5 M1501.5 1360 V1365.5" stroke="#c4c4c4" stroke-width="1.7" fill="none"/><rect x="1515.5" y="1348" width="23.5" height="24" fill="#f0f0f0" stroke="#222" stroke-width="1"/><rect x="1516" y="1348.5" width="22.5" height="4.6" fill="#4a8ccc"/><path d="M1519 1358 H1535 M1519 1363 H1535 M1523 1368 L1533 1355 M1527 1356 V1369 M1520 1367 L1531 1360" stroke="#cc3a3a" stroke-width="1.4"/><rect x="1515.5" y="1400" width="23.5" height="24" fill="#f0f0f0" stroke="#222" stroke-width="1"/><rect x="1516" y="1400.5" width="22.5" height="4.6" fill="#4a8ccc"/><rect x="1518.5" y="1408" width="17.5" height="5.4" fill="#8a8a8a" stroke="#444" stroke-width=".8"/><rect x="1518.5" y="1415.6" width="17.5" height="5.4" fill="#8a8a8a" stroke="#444" stroke-width=".8"/><path d="M1531 1474 L1545 1460 M1536 1474 L1545 1465 M1541 1474 L1545 1470" stroke="#2e2e2e" stroke-width="1.4"/></svg>
<div style="left:330px;top:131px;width:1168.7px;height:1137.5px;overflow:hidden;"><svg style="left:-330px;top:-131px;font-family:'Liberation Sans',sans-serif;" width="1545" height="1474" viewBox="0 0 1545 1474"><defs><filter id="shadow" x="-50%" y="-50%" width="200%" height="200%"><feGaussianBlur stdDeviation="7"/></filter><linearGradient id="cubeF" x1="0" y1="0" x2="0" y2="1"><stop offset="0" stop-color="#eceef3"/><stop offset="1" stop-color="#d9dade"/></linearGradient></defs><g transform="translate(330,131) scale(1.39)"><path d="M343.82 69h6.36m0.64 0h2.36M326.82 70h5.36m1.64 0h10.36m0.64 0h2.36m0.64 0h2.36m1.64 0h2.36M310.82 71h4.36m0.64 0h13.36m1.64 0h2.36m0.64 0h2.36m1.64 0h2.36m0.64 0h13.36M294.82 72h2.36m0.64 0h13.36m1.64 0h2.36m0.64 0h2.36m1.64 0h2.36m1.64 0h16.36m1.64 0h2.36m1.64 0h2.36m0.64 0h2.36m1.64 0h2.36M276.82 73h2.36m0.64 0h17.36m1.64 0h2.36m0.64 0h2.36m1.64 0h16.36m1.64 0h2.36m1.64 0h2.36m0.64 0h2.36m1.64 0h2.36m1.64 0h9.36m1.64 0h6.36M261.82 74h17.36m1.64 0h2.36m0.64 0h2.36m1.64 0h2.36m1.64 0h13.36m0.64 0h3.36m0.64 0h2.36m1.64 0h2.36m0.64 0h2.36m1.64 0h9.36m1.64 0h7.36m0.64 0h2.36m0.64 0h2.36m1.64 0h2.36m0.64 0h6.36M243.82 75h17.36m1.64 0h2.36m0.64 0h2.36m1.64 0h2.36m1.64 0h13.36m0.64 0h6.36m1.64 0h2.36m0.64 0h2.36m1.64 0h10.36m0.64 0h10.36m0.64 0h2.36m1.64 0h2.36m0.64 0h2.36m1.64 0h2.36m1.64 0h13.36m1.64 0h2.36M227.82 76h15.36m1.64 0h2.36m0.64 0h2.36m1.64 0h2.36m0.64 0h2.36m1.64 0h10.36m0.64 0h6.36m1.64 0h2.36m0.64 0h2.36m1.64 0h2.36m1.64 0h6.36m0.64 0h9.36m1.64 0h2.36m1.64 0h2.36m1.64 0h2.36m0.64 0h2.36m1.64 0h17.36m0.64 0h2.36m1.64 0h2.36m1.64 0h2.36m1.64 0h5.36M210.82 77h13.36m1.64 0h2.36m1.64 0h2.36m1.64 0h2.36m0.64 0h2.36m1.64 0h9.36m1.64 0h10.36m0.64 0h2.36m1.64 0h2.36m1.64 0h5.36m1.64 0h13.36m1.64 0h2.36m1.64 0h2.36m0.64 0h2.36m1.64 0h17.36m1.64 0h2.36m0.64 0h2.36m1.64 0h2.36m0.64 0h2.36m0.64 0h11.36m0.64 0h6.36m1.64 0h2.36M194.82 78h11.36m1.64 0h5.36m1.64 0h2.36m1.64 0h2.36m0.64 0h2.36m1.64 0h6.36m1.64 0h9.36m1.64 0h2.36m1.64 0h2.36m0.64 0h2.36m1.64 0h2.36m1.64 0h13.36m1.64 0h2.36m0.64 0h2.36m1.64 0h2.36m1.64 0h17.36m1.64 0h2.36m0.64 0h2.36m1.64 0h2.36m0.64 0h2.36m1.64 0h10.36m0.64 0h6.36m1.64 0h2.36m0.64 0h2.36m1.64 0h2.36m1.64 0h6.36m0.64 0h2.36M184.82 79h2.36m1.64 0h2.36m1.64 0h2.36m1.64 0h2.36m0.64 0h2.36m1.64 0h2.36m1.64 0h6.36m0.64 0h11.36m0.64 0h2.36m0.64 0h2.36m1.64 0h2.36m1.64 0h2.36m0.64 0h17.36m1.64 0h2.36m1.64 0h2.36m0.64 0h2.36m1.64 0h13.36m1.64 0h2.36m1.64 0h2.36m1.64 0h2.36m0.64 0h2.36m1.64 0h10.36m0.64 0h10.36m0.64 0h2.36m1.64 0h2.36m1.64 0h2.36m1.64 0h2.36m0.64 0h11.36m0.64 0h2.36m0.64 0h2.36m1.64 0h2.36M184.82 80h2.36m1.64 0h2.36m1.64 0h2.36m1.64 0h13.36m1.64 0h2.36m0.64 0h2.36m1.64 0h2.36m1.64 0h17.36m1.64 0h2.36m0.64 0h2.36m1.64 0h2.36m1.64 0h2.36m1.64 0h9.36m1.64 0h6.36m0.64 0h2.36m1.64 0h2.36m1.64 0h2.36m0.64 0h6.36m1.64 0h10.36m0.64 0h2.36m1.64 0h2.36m1.64 0h2.36m0.64 0h2.36m1.64 0h17.36m1.64 0h2.36m0.64 0h2.36m1.64 0h13.36M184.82 81h2.36m1.64 0h2.36m1.64 0h2.36m1.64 0h2.36m0.64 0h2.36m1.64 0h2.36m1.64 0h13.36m1.64 0h2.36m1.64 0h2.36m1.64 0h2.36m0.64 0h2.36m1.64 0h10.36m0.64 0h10.36m1.64 0h2.36m0.64 0h2.36m1.64 0h6.36m1.64 0h13.36m1.64 0h2.36m0.64 0h2.36m1.64 0h2.36m1.64 0h17.36m1.64 0h2.36m0.64 0h2.36m1.64 0h2.36m1.64 0h13.36m1.64 0h2.36m1.64 0h2.36m0.64 0h2.36m1.64 0h2.36M184.82 82h2.36m1.64 0h2.36m1.64 0h2.36m1.64 0h2.36m0.64 0h2.36m1.64 0h6.36m1.64 0h2.36m1.64 0h2.36m0.64 0h2.36m1.64 0h6.36m1.64 0h9.36m1.64 0h2.36m1.64 0h2.36m1.64 0h2.36m0.64 0h2.36m1.64 0h13.36m1.64 0h2.36m1.64 0h2.36m1.64 0h2.36m0.64 0h2.36m0.64 0h14.36m1.64 0h2.36m1.64 0h2.36m1.64 0h2.36m0.64 0h2.36m2.64 0h9.36m0.64 0h7.36m0.64 0h2.36m1.64 0h2.36m1.64 0h2.36m0.64 0h6.36m1.64 0h6.36M184.82 83h2.36m1.64 0h2.36m1.64 0h2.36m1.64 0h2.36m1.64 0h2.36m0.64 0h2.36m1.64 0h2.36m1.64 0h13.36m1.64 0h2.36m1.64 0h2.36m1.64 0h2.36m1.64 0h17.36m0.64 0h2.36m1.64 0h2.36m1.64 0h2.36m1.64 0h13.36m1.64 0h2.36m1.64 0h2.36m0.64 0h2.36m1.64 0h2.36m1.64 0h10.36m0.64 0h10.36m1.64 0h2.36m0.64 0h2.36m1.64 0h2.36m1.64 0h2.36m1.64 0h13.36m1.64 0h2.36m0.64 0h2.36m1.64 0h2.36M184.82 84h2.36m1.64 0h2.36m1.64 0h2.36m1.64 0h2.36m1.64 0h2.36m0.64 0h6.36m1.64 0h2.36m1.64 0h2.36m1.64 0h2.36m1.64 0h13.36m1.64 0h2.36m1.64 0h2.36m0.64 0h2.36m1.64 0h2.36m1.64 0h9.36m1.64 0h6.36m1.64 0h2.36m1.64 0h2.36m0.64 0h2.36m1.64 0h6.36m1.64 0h9.36m1.64 0h2.36m1.64 0h2.36m1.64 0h2.36m0.64 0h2.36m1.64 0h15.36m0.64 0h2.36m0.64 0h2.36m1.64 0h2.36m1.64 0h2.36m1.64 0h13.36M184.82 85h2.36m1.64 0h2.36m1.64 0h2.36m1.64 0h2.36m1.64 0h2.36m1.64 0h2.36m0.64 0h10.36m1.64 0h6.36m0.64 0h2.36m1.64 0h2.36m1.64 0h2.36m1.64 0h6.36m0.64 0h10.36m1.64 0h2.36m1.64 0h2.36m0.64 0h2.36m1.64 0h2.36m1.64 0h13.36m1.64 0h2.36m1.64 0h2.36m1.64 0h2.36m1.64 0h17.36m1.64 0h2.36m1.64 0h2.36m0.64 0h2.36m1.64 0h2.36m1.64 0h9.36m1.64 0h6.36m1.64 0h2.36m1.64 0h2.36m0.64 0h2.36M185.82 86h2.36m0.64 0h2.36m1.64 0h2.36m1.64 0h2.36m1.64 0h2.36m1.64 0h2.36m1.64 0h2.36m0.64 0h2.36m1.64 0h2.36m1.64 0h6.36m1.64 0h13.36m1.64 0h2.36m1.64 0h2.36m0.64 0h2.36m1.64 0h18.36m1.64 0h2.36m0.64 0h2.36m1.64 0h2.36m1.64 0h13.36m1.64 0h2.36m1.64 0h2.36m1.64 0h2.36m0.64 0h2.36m1.64 0h10.36m1.64 0h7.36m0.64 0h2.36m0.64 0h2.36m1.64 0h2.36m1.64 0h2.36m1.64 0h2.36m0.64 0h10.36M185.82 87h2.36m0.64 0h2.36m1.64 0h2.36m1.64 0h2.36m1.64 0h2.36m1.64 0h2.36m1.64 0h13.36m1.64 0h2.36m1.64 0h2.36m1.64 0h2.36m0.64 0h2.36m1.64 0h14.36m1.64 0h2.36m1.64 0h2.36m0.64 0h2.36m1.64 0h2.36m1.64 0h10.36m0.64 0h6.36m1.64 0h2.36m1.64 0h2.36m1.64 0h2.36m0.64 0h2.36m0.64 0h3.36m1.64 0h10.36m1.64 0h2.36m0.64 0h2.36m1.64 0h2.36m1.64 0h2.36m1.64 0h17.36m1.64 0h2.36m1.64 0h2.36m0.64 0h2.36M185.82 88h2.36m0.64 0h2.36m1.64 0h2.36m1.64 0h2.36m1.64 0h2.36m1.64 0h2.36m1.64 0h2.36m1.64 0h2.36m0.64 0h2.36m1.64 0h14.36m1.64 0h3.36m0.64 0h2.36m0.64 0h2.36m1.64 0h2.36m1.64 0h2.36m1.64 0h6.36m1.64 0h9.36m1.64 0h2.36m1.64 0h2.36m1.64 0h2.36m1.64 0h2.36m0.64 0h14.36m1.64 0h2.36m1.64 0h2.36m0.64 0h2.36m1.64 0h17.36m2.64 0h2.36m0.64 0h2.36m1.64 0h2.36m1.64 0h2.36m1.64 0h9.36m1.64 0h2.36M185.82 89h2.36m1.64 0h2.36m0.64 0h2.36m1.64 0h2.36m1.64 0h2.36m1.64 0h2.36m1.64 0h2.36m1.64 0h2.36m1.64 0h5.36m1.64 0h2.36m1.64 0h2.36m1.64 0h2.36m1.64 0h2.36m1.64 0h2.36m1.64 0h13.36m1.64 0h2.36m1.64 0h2.36m1.64 0h2.36m1.64 0h17.36m1.64 0h2.36m1.64 0h2.36m0.64 0h2.36m1.64 0h14.36m0.64 0h2.36m2.64 0h2.36m0.64 0h2.36m1.64 0h2.36m1.64 0h10.36m0.64 0h10.36m1.64 0h2.36m1.64 0h2.36m0.64 0h2.36M185.82 90h2.36m1.64 0h2.36m0.64 0h2.36m1.64 0h2.36m1.64 0h2.36m1.64 0h2.36m1.64 0h2.36m1.64 0h2.36m1.64 0h2.36m1.64 0h2.36m1.64 0h17.36m1.64 0h2.36m1.64 0h2.36m0.64 0h2.36m1.64 0h14.36m1.64 0h2.36m1.64 0h2.36m1.64 0h2.36m0.64 0h2.36m3.64 0h8.36m1.64 0h6.36m1.64 0h2.36m0.64 0h2.36m1.64 0h2.36m1.64 0h6.36m1.64 0h9.36m2.64 0h2.36m0.64 0h2.36m1.64 0h2.36m1.64 0h2.36m1.64 0h13.36M185.82 91h2.36m1.64 0h2.36m1.64 0h2.36m0.64 0h2.36m1.64 0h2.36m1.64 0h2.36m1.64 0h2.36m1.64 0h2.36m1.64 0h6.36m1.64 0h2.36m1.64 0h2.36m0.64 0h2.36m1.64 0h2.36m1.64 0h10.36m1.64 0h6.36m1.64 0h2.36m0.64 0h2.36m1.64 0h2.36m1.64 0h6.36m1.64 0h9.36m2.64 0h2.36m0.64 0h2.36m1.64 0h2.36m1.64 0h2.36m1.64 0h13.36m2.64 0h2.36m0.64 0h2.36m1.64 0h2.36m1.64 0h2.36m1.64 0h13.36m2.64 0h2.36m0.64 0h2.36m1.64 0h2.36m1.64 0h2.36M185.82 92h2.36m1.64 0h2.36m1.64 0h2.36m1.64 0h2.36m0.64 0h2.36m1.64 0h2.36m1.64 0h2.36m1.64 0h2.36m1.64 0h2.36m1.64 0h2.36m1.64 0h6.36m1.64 0h9.36m1.64 0h2.36m1.64 0h2.36m1.64 0h2.36m1.64 0h2.36m1.64 0h11.36m3.64 0h2.36m1.64 0h2.36m1.64 0h2.36m1.64 0h17.36m1.64 0h2.36m1.64 0h2.36m1.64 0h2.36m1.64 0h14.36m0.64 0h4.36m0.64 0h2.36m0.64 0h2.36m1.64 0h2.36m1.64 0h2.36m1.64 0h6.36m1.64 0h5.36M185.82 93h2.36m1.64 0h2.36m1.64 0h2.36m1.64 0h2.36m0.64 0h2.36m1.64 0h2.36m1.64 0h2.36m1.64 0h2.36m1.64 0h2.36m1.64 0h6.36m1.64 0h2.36m1.64 0h2.36m1.64 0h2.36m1.64 0h17.36m1.64 0h2.36m1.64 0h2.36m1.64 0h2.36m1.64 0h13.36m1.64 0h2.36m1.64 0h2.36m1.64 0h2.36m1.64 0h2.36m1.64 0h10.36m0.64 0h6.36m1.64 0h2.36m1.64 0h2.36m1.64 0h2.36m1.64 0h2.36m1.64 0h2.36m1.64 0h11.36m0.64 0h2.36m0.64 0h2.36m1.64 0h2.36m1.64 0h2.36M185.82 94h2.36m1.64 0h2.36m1.64 0h2.36m1.64 0h2.36m1.64 0h2.36m0.64 0h2.36m1.64 0h2.36m1.64 0h2.36m1.64 0h2.36m1.64 0h2.36m1.64 0h14.36m1.64 0h2.36m1.64 0h2.36m1.64 0h2.36m0.64 0h2.36m3.64 0h8.36m1.64 0h6.36m1.64 0h2.36m1.64 0h2.36m1.64 0h2.36m1.64 0h6.36m1.64 0h9.36m1.64 0h2.36m1.64 0h2.36m1.64 0h2.36m1.64 0h2.36m1.64 0h15.36m0.64 0h2.36m0.64 0h2.36m1.64 0h2.36m1.64 0h2.36m3.64 0h11.36M185.82 95h2.36m1.64 0h2.36m1.64 0h2.36m1.64 0h2.36m1.64 0h2.36m1.64 0h2.36m1.64 0h2.36m0.64 0h2.36m1.64 0h2.36m1.64 0h2.36m5.64 0h2.36m1.64 0h2.36m1.64 0h2.36m3.64 0h4.36m1.64 0h10.36m1.64 0h2.36m1.64 0h2.36m0.64 0h2.36m1.64 0h2.36m1.64 0h14.36m1.64 0h2.36m1.64 0h2.36m1.64 0h2.36m1.64 0h2.36m1.64 0h13.36m1.64 0h2.36m1.64 0h2.36m1.64 0h2.36m1.64 0h2.36m3.64 0h8.36m0.64 0h6.36m2.64 0h2.36m0.64 0h2.36m1.64 0h2.36M185.82 96h2.36m1.64 0h2.36m1.64 0h2.36m1.64 0h2.36m1.64 0h2.36m1.64 0h2.36m5.64 0h2.36m1.64 0h2.36m0.64 0h2.36m1.64 0h2.36m1.64 0h14.36m1.64 0h2.36m1.64 0h2.36m1.64 0h2.36m1.64 0h2.36m1.64 0h14.36m1.64 0h2.36m1.64 0h2.36m0.64 0h2.36m1.64 0h2.36m1.64 0h10.36m1.64 0h6.36m1.64 0h2.36m1.64 0h2.36m1.64 0h2.36m3.64 0h4.36m1.64 0h9.36m1.64 0h2.36m1.64 0h2.36m1.64 0h2.36m1.64 0h2.36m1.64 0h10.36M185.82 97h2.36m1.64 0h2.36m5.64 0h2.36m1.64 0h2.36m1.64 0h2.36m1.64 0h2.36m1.64 0h2.36m1.64 0h2.36m1.64 0h2.36m1.64 0h2.36m1.64 0h2.36m0.64 0h2.36m1.64 0h2.36m1.64 0h2.36m1.64 0h10.36m1.64 0h6.36m1.64 0h2.36m1.64 0h2.36m1.64 0h2.36m1.64 0h6.36m1.64 0h8.36m3.64 0h2.36m1.64 0h2.36m0.64 0h2.36m5.64 0h14.36m1.64 0h2.36m1.64 0h2.36m1.64 0h2.36m1.64 0h2.36m1.64 0h13.36m2.64 0h2.36m0.64 0h2.36m1.64 0h2.36M185.82 98h2.36m1.64 0h2.36m1.64 0h2.36m1.64 0h2.36m1.64 0h2.36m1.64 0h2.36m1.64 0h2.36m1.64 0h2.36m1.64 0h2.36m1.64 0h2.36m1.64 0h2.36m1.64 0h2.36m1.64 0h2.36m1.64 0h7.36m0.64 0h2.36m1.64 0h2.36m0.64 0h2.36m1.64 0h2.36m2.64 0h2.36m0.64 0h12.36m3.64 0h2.36m1.64 0h2.36m1.64 0h2.36m1.64 0h18.36m1.64 0h2.36m1.64 0h2.36m1.64 0h2.36m0.64 0h2.36m2.64 0h9.36m1.64 0h6.36m1.64 0h2.36m1.64 0h2.36m1.64 0h2.36m1.64 0h6.36m1.64 0h2.36M185.82 99h2.36m1.64 0h2.36m1.64 0h2.36m1.64 0h2.36m1.64 0h2.36m1.64 0h2.36m1.64 0h2.36m1.64 0h2.36m1.64 0h2.36m1.64 0h2.36m1.64 0h2.36m1.64 0h2.36m1.64 0h2.36m1.64 0h2.36m1.64 0h2.36m3.64 0h14.36m3.64 0h2.36m1.64 0h2.36m0.64 0h2.36m1.64 0h2.36m0.64 0h11.36m1.64 0h2.36m1.64 0h2.36m1.64 0h2.36m1.64 0h2.36m1.64 0h2.36m1.64 0h6.36m1.64 0h10.36m1.64 0h2.36m1.64 0h2.36m1.64 0h2.36m5.64 0h11.36m4.64 0h2.36m1.64 0h2.36M185.82 100h2.36m1.64 0h2.36m1.64 0h2.36m1.64 0h2.36m1.64 0h2.36m1.64 0h2.36m1.64 0h2.36m5.64 0h2.36m1.64 0h2.36m1.64 0h2.36m5.64 0h2.36m1.64 0h6.36m1.64 0h2.36m1.64 0h2.36m1.64 0h2.36m1.64 0h2.36m1.64 0h2.36m1.64 0h6.36m1.64 0h6.36m1.64 0h2.36m1.64 0h2.36m1.64 0h2.36m1.64 0h2.36m1.64 0h2.36m1.64 0h11.36m4.64 0h2.36m0.64 0h2.36m1.64 0h2.36m4.64 0h15.36m1.64 0h2.36m1.64 0h2.36m1.64 0h2.36m1.64 0h2.36m1.64 0h6.36M185.82 101h2.36m1.64 0h2.36m1.64 0h2.36m5.64 0h2.36m1.64 0h2.36m1.64 0h2.36m1.64 0h2.36m1.64 0h2.36m1.64 0h2.36m1.64 0h2.36m1.64 0h2.36m1.64 0h2.36m1.64 0h2.36m1.64 0h2.36m1.64 0h2.36m1.64 0h2.36m1.64 0h14.36m1.64 0h2.36m1.64 0h2.36m1.64 0h2.36m3.64 0h14.36m3.64 0h2.36m1.64 0h2.36m1.64 0h2.36m1.64 0h14.36m1.64 0h2.36m1.64 0h2.36m1.64 0h2.36m1.64 0h2.36m1.64 0h2.36m1.64 0h6.36m1.64 0h7.36m0.64 0h2.36m1.64 0h2.36M185.82 102h2.36m1.64 0h2.36m1.64 0h2.36m1.64 0h2.36m1.64 0h2.36m1.64 0h2.36m1.64 0h2.36m1.64 0h2.36m1.64 0h2.36m1.64 0h2.36m1.64 0h2.36m1.64 0h2.36m1.64 0h2.36m1.64 0h12.36m3.64 0h2.36m1.64 0h2.36m1.64 0h2.36m4.64 0h11.36m1.64 0h2.36m2.64 0h2.36m0.64 0h2.36m1.64 0h2.36m1.64 0h2.36m2.64 0h5.36m1.64 0h6.36m2.64 0h2.36m0.64 0h2.36m1.64 0h2.36m1.64 0h2.36m2.64 0h2.36m0.64 0h12.36m3.64 0h2.36m1.64 0h2.36m1.64 0h2.36m3.64 0h4.36M185.82 103h2.36m1.64 0h2.36m1.64 0h2.36m1.64 0h2.36m5.64 0h2.36m1.64 0h2.36m1.64 0h2.36m6.64 0h2.36m1.64 0h2.36m1.64 0h2.36m5.64 0h2.36m1.64 0h2.36m1.64 0h2.36m1.64 0h10.36m1.64 0h6.36m1.64 0h2.36m1.64 0h2.36m1.64 0h2.36m1.64 0h2.36m1.64 0h2.36m1.64 0h14.36m1.64 0h2.36m1.64 0h2.36m1.64 0h2.36m3.64 0h14.36m3.64 0h2.36m1.64 0h2.36m1.64 0h2.36m1.64 0h14.36m1.64 0h2.36m1.64 0h2.36M189.82 104h2.36m1.64 0h2.36m1.64 0h2.36m1.64 0h2.36m2.64 0h2.36m1.64 0h2.36m1.64 0h2.36m1.64 0h2.36m1.64 0h2.36m1.64 0h2.36m1.64 0h2.36m1.64 0h2.36m1.64 0h2.36m1.64 0h10.36m1.64 0h2.36m1.64 0h2.36m1.64 0h2.36m1.64 0h2.36m3.64 0h14.36m3.64 0h2.36m1.64 0h2.36m1.64 0h2.36m3.64 0h12.36m1.64 0h2.36m1.64 0h2.36m1.64 0h2.36m1.64 0h2.36m1.64 0h2.36m2.64 0h5.36m1.64 0h6.36m2.64 0h2.36m0.64 0h2.36m1.64 0h2.36m1.64 0h2.36m2.64 0h2.36M185.82 105h2.36m1.64 0h2.36m1.64 0h2.36m2.64 0h2.36m1.64 0h2.36m1.64 0h2.36m1.64 0h2.36m1.64 0h2.36m1.64 0h2.36m1.64 0h2.36m1.64 0h2.36m1.64 0h2.36m1.64 0h2.36m5.64 0h2.36m1.64 0h2.36m1.64 0h2.36m3.64 0h12.36m1.64 0h2.36m1.64 0h2.36m1.64 0h2.36m1.64 0h2.36m1.64 0h2.36m2.64 0h6.36m0.64 0h6.36m2.64 0h2.36m1.64 0h2.36m1.64 0h2.36m1.64 0h2.36m1.64 0h2.36m1.64 0h12.36m3.64 0h2.36m1.64 0h2.36m1.64 0h2.36m3.64 0h14.36M185.82 106h2.36m6.64 0h2.36m1.64 0h2.36m1.64 0h2.36m5.64 0h2.36m1.64 0h2.36m1.64 0h2.36m5.64 0h2.36m1.64 0h2.36m1.64 0h2.36m1.64 0h2.36m1.64 0h2.36m1.64 0h2.36m1.64 0h6.36m2.64 0h2.36m1.64 0h2.36m1.64 0h2.36m0.64 0h2.36m2.64 0h2.36m1.64 0h12.36m3.64 0h2.36m1.64 0h2.36m1.64 0h2.36m3.64 0h14.36m3.64 0h2.36m1.64 0h2.36m1.64 0h2.36m1.64 0h2.36m2.64 0h9.36m1.64 0h2.36m2.64 0h2.36m1.64 0h2.36m0.64 0h2.36m1.64 0h2.36M185.82 107h2.36m1.64 0h2.36m2.64 0h2.36m1.64 0h2.36m1.64 0h2.36m1.64 0h2.36m1.64 0h2.36m1.64 0h2.36m1.64 0h2.36m1.64 0h2.36m1.64 0h2.36m1.64 0h2.36m1.64 0h2.36m1.64 0h2.36m6.64 0h2.36m1.64 0h2.36m1.64 0h2.36m3.64 0h14.36m3.64 0h2.36m1.64 0h2.36m1.64 0h2.36m1.64 0h14.36m1.64 0h2.36m2.64 0h2.36m1.64 0h2.36m0.64 0h2.36m1.64 0h2.36m2.64 0h6.36m1.64 0h10.36m1.64 0h2.36m1.64 0h2.36m1.64 0h2.36m5.64 0h10.36M185.82 108h2.36m2.64 0h2.36m5.64 0h2.36m1.64 0h2.36m1.64 0h2.36m5.64 0h2.36m1.64 0h2.36m1.64 0h2.36m5.64 0h2.36m2.64 0h2.36m1.64 0h2.36m1.64 0h2.36m1.64 0h2.36m1.64 0h6.36m1.64 0h2.36m1.64 0h2.36m1.64 0h2.36m1.64 0h2.36m1.64 0h2.36m1.64 0h6.36m1.64 0h6.36m2.64 0h2.36m1.64 0h2.36m1.64 0h2.36m1.64 0h2.36m5.64 0h12.36m3.64 0h2.36m1.64 0h2.36m1.64 0h2.36m4.64 0h15.36m2.64 0h2.36m1.64 0h2.36m1.64 0h2.36M186.82 109h2.36m1.64 0h2.36m1.64 0h2.36m1.64 0h2.36m1.64 0h2.36m1.64 0h2.36m1.64 0h2.36m1.64 0h2.36m1.64 0h2.36m1.64 0h2.36m1.64 0h2.36m2.64 0h2.36m1.64 0h2.36m1.64 0h2.36m1.64 0h2.36m5.64 0h2.36m1.64 0h2.36m1.64 0h2.36m5.64 0h12.36m4.64 0h2.36m1.64 0h2.36m1.64 0h2.36m5.64 0h14.36m1.64 0h2.36m1.64 0h2.36m1.64 0h2.36m1.64 0h2.36m2.64 0h10.36m1.64 0h2.36m1.64 0h2.36m1.64 0h2.36m1.64 0h2.36m1.64 0h2.36m3.64 0h4.36m1.64 0h2.36M186.82 110h2.36m1.64 0h2.36m1.64 0h2.36m5.64 0h2.36m1.64 0h2.36m1.64 0h2.36m5.64 0h2.36m2.64 0h2.36m1.64 0h2.36m5.64 0h2.36m1.64 0h2.36m1.64 0h2.36m1.64 0h2.36m1.64 0h2.36m1.64 0h10.36m2.64 0h2.36m1.64 0h2.36m1.64 0h2.36m1.64 0h2.36m1.64 0h10.36m1.64 0h4.36m4.64 0h2.36m1.64 0h2.36m1.64 0h2.36m3.64 0h4.36m1.64 0h8.36m3.64 0h2.36m1.64 0h2.36m1.64 0h2.36m6.64 0h13.36m2.64 0h2.36m1.64 0h2.36M186.82 111h2.36m1.64 0h2.36m1.64 0h2.36m1.64 0h2.36m1.64 0h2.36m1.64 0h2.36m1.64 0h2.36m1.64 0h2.36m2.64 0h2.36m1.64 0h2.36m1.64 0h2.36m1.64 0h2.36m1.64 0h2.36m1.64 0h2.36m1.64 0h2.36m1.64 0h2.36m6.64 0h2.36m1.64 0h2.36m1.64 0h2.36m3.64 0h4.36m1.64 0h8.36m4.64 0h2.36m1.64 0h2.36m1.64 0h2.36m1.64 0h2.36m1.64 0h14.36m1.64 0h2.36m1.64 0h2.36m1.64 0h2.36m1.64 0h2.36m2.64 0h14.36m5.64 0h2.36m1.64 0h2.36m1.64 0h2.36m4.64 0h4.36M190.82 112h2.36m1.64 0h2.36m1.64 0h2.36m5.64 0h2.36m1.64 0h2.36m2.64 0h2.36m5.64 0h2.36m1.64 0h2.36m1.64 0h2.36m5.64 0h2.36m1.64 0h2.36m2.64 0h2.36m1.64 0h2.36m1.64 0h2.36m1.64 0h10.36m1.64 0h2.36m1.64 0h2.36m2.64 0h2.36m1.64 0h2.36m3.64 0h12.36m5.64 0h2.36m1.64 0h2.36m1.64 0h2.36m4.64 0h8.36m1.64 0h4.36m3.64 0h2.36m1.64 0h2.36m1.64 0h2.36m1.64 0h2.36m2.64 0h2.36m1.64 0h10.36m1.64 0h2.36M186.82 113h2.36m1.64 0h2.36m1.64 0h2.36m1.64 0h2.36m1.64 0h2.36m1.64 0h2.36m2.64 0h2.36m1.64 0h2.36m1.64 0h2.36m1.64 0h2.36m1.64 0h2.36m1.64 0h2.36m1.64 0h2.36m6.64 0h2.36m1.64 0h2.36m1.64 0h2.36m5.64 0h2.36m1.64 0h2.36m1.64 0h2.36m4.64 0h8.36m1.64 0h6.36m1.64 0h2.36m1.64 0h2.36m1.64 0h2.36m1.64 0h2.36m2.64 0h2.36m1.64 0h10.36m1.64 0h2.36m1.64 0h2.36m1.64 0h2.36m1.64 0h2.36m4.64 0h14.36m3.64 0h2.36m1.64 0h2.36m1.64 0h2.36M186.82 114h2.36m5.64 0h2.36m1.64 0h2.36m1.64 0h2.36m6.64 0h2.36m1.64 0h2.36m1.64 0h2.36m5.64 0h2.36m1.64 0h2.36m2.64 0h2.36m1.64 0h2.36m1.64 0h2.36m1.64 0h2.36m1.64 0h2.36m1.64 0h2.36m2.64 0h2.36m1.64 0h10.36m5.64 0h2.36m1.64 0h2.36m1.64 0h2.36m4.64 0h14.36m3.64 0h2.36m1.64 0h2.36m1.64 0h2.36m6.64 0h10.36m1.64 0h2.36m2.64 0h2.36m1.64 0h2.36m0.64 0h2.36m1.64 0h2.36m2.64 0h6.36m1.64 0h6.36M186.82 115h2.36m1.64 0h2.36m1.64 0h2.36m1.64 0h2.36m1.64 0h2.36m2.64 0h2.36m5.64 0h2.36m1.64 0h2.36m1.64 0h2.36m6.64 0h2.36m1.64 0h2.36m1.64 0h2.36m5.64 0h2.36m1.64 0h2.36m2.64 0h2.36m5.64 0h2.36m1.64 0h2.36m1.64 0h2.36m1.64 0h2.36m2.64 0h10.36m1.64 0h2.36m1.64 0h2.36m1.64 0h2.36m1.64 0h2.36m1.64 0h2.36m4.64 0h4.36m1.64 0h8.36m4.64 0h2.36m1.64 0h2.36m1.64 0h2.36m5.64 0h12.36m4.64 0h2.36m1.64 0h2.36m1.64 0h2.36M186.82 116h2.36m1.64 0h2.36m5.64 0h2.36m2.64 0h2.36m1.64 0h2.36m1.64 0h2.36m1.64 0h2.36m1.64 0h2.36m1.64 0h2.36m2.64 0h2.36m1.64 0h2.36m1.64 0h2.36m1.64 0h2.36m1.64 0h2.36m6.64 0h2.36m1.64 0h2.36m1.64 0h2.36m5.64 0h2.36m1.64 0h2.36m0.64 0h6.36m3.64 0h2.36m1.64 0h2.36m1.64 0h2.36m6.64 0h14.36m1.64 0h2.36m1.64 0h2.36m1.64 0h2.36m1.64 0h2.36m2.64 0h14.36m6.64 0h2.36m1.64 0h2.36m1.64 0h2.36m3.64 0h8.36M186.82 117h2.36m1.64 0h2.36m1.64 0h2.36m6.64 0h2.36m1.64 0h2.36m1.64 0h2.36m5.64 0h2.36m2.64 0h2.36m1.64 0h2.36m5.64 0h2.36m1.64 0h2.36m1.64 0h2.36m2.64 0h2.36m1.64 0h2.36m1.64 0h2.36m1.64 0h2.36m1.64 0h2.36m2.64 0h2.36m1.64 0h2.36m1.64 0h2.36m1.64 0h2.36m3.64 0h2.36m0.64 0h10.36m5.64 0h2.36m1.64 0h2.36m1.64 0h2.36m4.64 0h8.36m1.64 0h4.36m4.64 0h2.36m1.64 0h2.36m1.64 0h2.36m1.64 0h2.36m1.64 0h2.36m1.64 0h10.36m2.64 0h2.36m1.64 0h2.36M186.82 118h2.36m1.64 0h2.36m1.64 0h2.36m1.64 0h2.36m2.64 0h2.36m1.64 0h2.36m1.64 0h2.36m1.64 0h2.36m6.64 0h2.36m1.64 0h2.36m1.64 0h2.36m6.64 0h2.36m1.64 0h2.36m1.64 0h2.36m5.64 0h2.36m1.64 0h2.36m2.64 0h2.36m5.64 0h6.36m1.64 0h6.36m2.64 0h2.36m1.64 0h2.36m1.64 0h2.36m1.64 0h2.36m2.64 0h2.36m1.64 0h10.36m6.64 0h2.36m1.64 0h2.36m1.64 0h2.36m3.64 0h14.36m4.64 0h2.36m1.64 0h2.36m1.64 0h2.36m6.64 0h2.36M190.82 119h2.36m1.64 0h2.36m2.64 0h2.36m5.64 0h2.36m1.64 0h2.36m1.64 0h2.36m2.64 0h2.36m1.64 0h2.36m1.64 0h2.36m1.64 0h2.36m1.64 0h2.36m6.64 0h2.36m1.64 0h2.36m1.64 0h2.36m6.64 0h2.36m1.64 0h2.36m1.64 0h2.36m6.64 0h2.36m1.64 0h2.36m1.64 0h2.36m5.64 0h4.36m0.64 0h8.36m3.64 0h2.36m1.64 0h2.36m1.64 0h2.36m1.64 0h2.36m2.64 0h10.36m1.64 0h2.36m2.64 0h2.36m1.64 0h2.36m1.64 0h2.36m1.64 0h2.36m4.64 0h4.36m1.64 0h8.36M186.82 120h2.36m5.64 0h2.36m2.64 0h2.36m1.64 0h2.36m5.64 0h2.36m2.64 0h2.36m1.64 0h2.36m5.64 0h2.36m1.64 0h2.36m2.64 0h2.36m1.64 0h2.36m1.64 0h2.36m1.64 0h2.36m2.64 0h2.36m1.64 0h2.36m1.64 0h2.36m1.64 0h2.36m1.64 0h2.36m2.64 0h2.36m3.64 0h8.36m1.64 0h4.36m4.64 0h2.36m1.64 0h2.36m1.64 0h2.36m4.64 0h4.36m1.64 0h8.36m4.64 0h2.36m1.64 0h2.36m1.64 0h2.36m6.64 0h14.36m1.64 0h2.36m1.64 0h2.36m1.64 0h2.36m1.64 0h2.36M186.82 121h2.36m1.64 0h2.36m6.64 0h2.36m1.64 0h2.36m1.64 0h2.36m6.64 0h2.36m1.64 0h2.36m1.64 0h2.36m6.64 0h2.36m1.64 0h2.36m1.64 0h2.36m6.64 0h2.36m1.64 0h2.36m1.64 0h2.36m6.64 0h2.36m1.64 0h2.36m1.64 0h6.36m2.64 0h2.36m1.64 0h2.36m1.64 0h2.36m1.64 0h2.36m3.64 0h2.36m0.64 0h10.36m5.64 0h2.36m2.64 0h2.36m1.64 0h2.36m3.64 0h12.36m6.64 0h2.36m1.64 0h2.36m1.64 0h2.36m6.64 0h6.36m1.64 0h2.36M186.82 122h2.36m1.64 0h2.36m2.64 0h2.36m1.64 0h2.36m1.64 0h2.36m1.64 0h2.36m2.64 0h2.36m5.64 0h2.36m1.64 0h2.36m2.64 0h2.36m5.64 0h2.36m1.64 0h2.36m1.64 0h2.36m6.64 0h2.36m1.64 0h2.36m1.64 0h2.36m6.64 0h2.36m1.64 0h2.36m1.64 0h2.36m6.64 0h10.36m1.64 0h2.36m2.64 0h2.36m1.64 0h2.36m1.64 0h2.36m1.64 0h2.36m2.64 0h6.36m1.64 0h6.36m6.64 0h2.36m1.64 0h2.36m1.64 0h2.36m6.64 0h12.36m4.64 0h2.36m1.64 0h2.36M186.82 123h2.36m1.64 0h2.36m2.64 0h2.36m5.64 0h2.36m1.64 0h2.36m2.64 0h2.36m1.64 0h2.36m1.64 0h2.36m1.64 0h2.36m2.64 0h2.36m1.64 0h2.36m1.64 0h2.36m2.64 0h2.36m1.64 0h2.36m1.64 0h2.36m6.64 0h2.36m1.64 0h2.36m1.64 0h2.36m6.64 0h2.36m1.64 0h8.36m4.64 0h2.36m1.64 0h2.36m1.64 0h2.36m6.64 0h12.36m4.64 0h2.36m1.64 0h2.36m1.64 0h2.36m1.64 0h2.36m2.64 0h14.36m6.64 0h2.36m1.64 0h2.36m1.64 0h2.36m4.64 0h4.36M190.82 124h2.36m2.64 0h2.36m1.64 0h2.36m6.64 0h2.36m1.64 0h2.36m1.64 0h2.36m6.64 0h2.36m1.64 0h2.36m1.64 0h2.36m6.64 0h2.36m1.64 0h2.36m1.64 0h2.36m1.64 0h2.36m2.64 0h2.36m1.64 0h2.36m1.64 0h2.36m1.64 0h2.36m6.64 0h2.36m1.64 0h2.36m1.64 0h2.36m4.64 0h12.36m6.64 0h2.36m1.64 0h2.36m1.64 0h2.36m6.64 0h6.36m1.64 0h2.36m0.64 0h2.36m3.64 0h2.36m1.64 0h2.36m1.64 0h2.36m2.64 0h2.36m1.64 0h2.36m1.64 0h10.36M186.82 125h2.36m6.64 0h2.36m1.64 0h2.36m1.64 0h2.36m6.64 0h2.36m1.64 0h2.36m1.64 0h2.36m6.64 0h2.36m1.64 0h2.36m2.64 0h2.36m5.64 0h2.36m1.64 0h2.36m2.64 0h2.36m5.64 0h2.36m2.64 0h2.36m1.64 0h2.36m1.64 0h2.36m1.64 0h2.36m2.64 0h2.36m1.64 0h6.36m6.64 0h2.36m1.64 0h2.36m1.64 0h2.36m6.64 0h12.36m4.64 0h2.36m1.64 0h2.36m1.64 0h2.36m6.64 0h12.36m4.64 0h2.36m1.64 0h2.36m1.64 0h2.36m1.64 0h2.36M186.82 126h2.36m2.64 0h2.36m5.64 0h2.36m1.64 0h2.36m2.64 0h2.36m5.64 0h2.36m2.64 0h2.36m1.64 0h2.36m6.64 0h2.36m1.64 0h2.36m1.64 0h2.36m6.64 0h2.36m1.64 0h2.36m1.64 0h2.36m6.64 0h2.36m1.64 0h2.36m1.64 0h2.36m6.64 0h2.36m1.64 0h2.36m1.64 0h2.36m2.64 0h2.36m1.64 0h8.36m0.64 0h6.36m6.64 0h2.36m1.64 0h2.36m1.64 0h2.36m4.64 0h8.36m1.64 0h4.36m4.64 0h2.36m1.64 0h2.36m1.64 0h2.36m6.64 0h2.36m1.64 0h6.36M186.82 127h2.36m2.64 0h2.36m1.64 0h2.36m1.64 0h2.36m2.64 0h2.36m1.64 0h2.36m1.64 0h2.36m6.64 0h2.36m1.64 0h2.36m1.64 0h2.36m6.64 0h2.36m1.64 0h2.36m2.64 0h2.36m5.64 0h2.36m1.64 0h2.36m2.64 0h2.36m5.64 0h2.36m2.64 0h2.36m1.64 0h2.36m6.64 0h6.36m1.64 0h4.36m4.64 0h2.36m1.64 0h2.36m1.64 0h2.36m1.64 0h2.36m6.64 0h10.36m6.64 0h2.36m1.64 0h2.36m2.64 0h2.36m3.64 0h4.36m0.64 0h10.36m4.64 0h2.36m1.64 0h2.36M186.82 128h2.36m2.64 0h2.36m1.64 0h2.36m6.64 0h2.36m1.64 0h2.36m1.64 0h2.36m2.64 0h2.36m1.64 0h2.36m1.64 0h2.36m2.64 0h2.36m1.64 0h2.36m6.64 0h2.36m1.64 0h2.36m1.64 0h2.36m6.64 0h2.36m1.64 0h2.36m1.64 0h2.36m6.64 0h2.36m1.64 0h2.36m1.64 0h2.36m6.64 0h2.36m1.64 0h2.36m2.64 0h2.36m6.64 0h14.36m2.64 0h2.36m1.64 0h2.36m1.64 0h2.36m1.64 0h2.36m4.64 0h8.36m1.64 0h2.36m6.64 0h2.36m1.64 0h2.36m2.64 0h2.36m3.64 0h4.36M191.82 129h2.36m1.64 0h2.36m1.64 0h2.36m6.64 0h2.36m1.64 0h2.36m2.64 0h2.36m5.64 0h2.36m2.64 0h2.36m1.64 0h2.36m1.64 0h2.36m6.64 0h2.36m1.64 0h2.36m2.64 0h2.36m5.64 0h2.36m2.64 0h2.36m1.64 0h2.36m6.64 0h2.36m1.64 0h2.36m1.64 0h2.36m6.64 0h6.36m1.64 0h4.36m4.64 0h2.36m1.64 0h2.36m2.64 0h2.36m5.64 0h2.36m2.64 0h10.36m6.64 0h2.36m1.64 0h2.36m1.64 0h2.36m4.64 0h12.36M186.82 130h2.36m6.64 0h2.36m1.64 0h2.36m2.64 0h2.36m6.64 0h2.36m1.64 0h2.36m1.64 0h2.36m6.64 0h2.36m1.64 0h2.36m1.64 0h2.36m2.64 0h2.36m6.64 0h2.36m1.64 0h2.36m1.64 0h2.36m6.64 0h2.36m1.64 0h2.36m1.64 0h2.36m6.64 0h2.36m1.64 0h2.36m2.64 0h4.36m4.64 0h2.36m1.64 0h2.36m1.64 0h2.36m6.64 0h12.36m4.64 0h2.36m1.64 0h2.36m2.64 0h2.36m1.64 0h2.36m2.64 0h10.36m1.64 0h2.36m6.64 0h2.36m1.64 0h2.36m1.64 0h2.36M186.82 131h2.36m2.64 0h2.36m6.64 0h2.36m1.64 0h2.36m1.64 0h2.36m6.64 0h2.36m1.64 0h2.36m2.64 0h2.36m5.64 0h2.36m2.64 0h2.36m1.64 0h2.36m1.64 0h2.36m2.64 0h2.36m1.64 0h2.36m1.64 0h2.36m2.64 0h2.36m6.64 0h2.36m1.64 0h2.36m1.64 0h2.36m6.64 0h2.36m1.64 0h2.36m1.64 0h2.36m4.64 0h8.36m2.64 0h4.36m4.64 0h2.36m1.64 0h2.36m1.64 0h2.36m6.64 0h2.36m1.64 0h8.36m4.64 0h2.36m2.64 0h2.36m1.64 0h2.36m1.64 0h2.36m4.64 0h8.36M187.82 132h2.36m1.64 0h2.36m1.64 0h2.36m6.64 0h2.36m1.64 0h2.36m2.64 0h2.36m5.64 0h2.36m2.64 0h2.36m1.64 0h2.36m6.64 0h2.36m1.64 0h2.36m2.64 0h2.36m5.64 0h2.36m2.64 0h2.36m1.64 0h2.36m1.64 0h2.36m6.64 0h2.36m1.64 0h2.36m2.64 0h2.36m6.64 0h2.36m1.64 0h6.36m6.64 0h2.36m1.64 0h2.36m1.64 0h2.36m6.64 0h2.36m0.64 0h10.36m4.64 0h2.36m1.64 0h2.36m1.64 0h2.36m6.64 0h8.36m0.64 0h2.36m1.64 0h2.36m6.64 0h2.36M191.82 133h2.36m1.64 0h2.36m2.64 0h2.36m5.64 0h2.36m2.64 0h2.36m1.64 0h2.36m6.64 0h2.36m1.64 0h2.36m2.64 0h2.36m6.64 0h2.36m1.64 0h2.36m1.64 0h2.36m6.64 0h2.36m1.64 0h2.36m2.64 0h2.36m1.64 0h2.36m6.64 0h2.36m1.64 0h2.36m1.64 0h2.36m6.64 0h2.36m2.64 0h2.36m1.64 0h2.36m4.64 0h8.36m1.64 0h4.36m4.64 0h2.36m1.64 0h2.36m2.64 0h2.36m6.64 0h2.36m1.64 0h8.36m4.64 0h2.36m1.64 0h2.36m1.64 0h2.36m2.64 0h2.36M187.82 134h2.36m5.64 0h2.36m2.64 0h2.36m1.64 0h2.36m6.64 0h2.36m1.64 0h2.36m2.64 0h2.36m6.64 0h2.36m1.64 0h2.36m1.64 0h2.36m6.64 0h2.36m1.64 0h2.36m2.64 0h2.36m6.64 0h2.36m1.64 0h2.36m1.64 0h2.36m2.64 0h2.36m5.64 0h2.36m2.64 0h2.36m1.64 0h2.36m6.64 0h10.36m7.64 0h2.36m1.64 0h2.36m1.64 0h2.36m6.64 0h10.36m0.64 0h2.36m3.64 0h2.36m2.64 0h2.36m1.64 0h2.36m6.64 0h10.36m1.64 0h2.36M187.82 135h2.36m1.64 0h2.36m6.64 0h2.36m1.64 0h2.36m2.64 0h2.36m5.64 0h2.36m2.64 0h2.36m1.64 0h2.36m6.64 0h2.36m1.64 0h2.36m2.64 0h2.36m6.64 0h2.36m1.64 0h2.36m1.64 0h2.36m6.64 0h2.36m2.64 0h2.36m1.64 0h2.36m1.64 0h2.36m6.64 0h2.36m1.64 0h2.36m2.64 0h2.36m6.64 0h2.36m1.64 0h2.36m1.64 0h2.36m4.64 0h6.36m0.64 0h2.36m1.64 0h4.36m4.64 0h2.36m1.64 0h2.36m1.64 0h2.36m6.64 0h2.36m2.64 0h8.36m8.64 0h2.36m1.64 0h2.36M187.82 136h2.36m1.64 0h2.36m1.64 0h2.36m6.64 0h2.36m2.64 0h2.36m1.64 0h2.36m6.64 0h2.36m1.64 0h2.36m2.64 0h2.36m6.64 0h2.36m1.64 0h2.36m1.64 0h2.36m6.64 0h2.36m2.64 0h2.36m1.64 0h2.36m10.64 0h2.36m2.64 0h2.36m1.64 0h2.36m6.64 0h2.36m1.64 0h2.36m1.64 0h2.36m7.64 0h10.36m6.64 0h2.36m1.64 0h2.36m2.64 0h2.36m6.64 0h12.36m4.64 0h2.36m1.64 0h2.36m2.64 0h2.36m1.64 0h2.36m4.64 0h4.36M191.82 137h2.36m2.64 0h2.36m1.64 0h2.36m6.64 0h2.36m1.64 0h2.36m2.64 0h2.36m6.64 0h2.36m1.64 0h2.36m1.64 0h2.36m6.64 0h2.36m2.64 0h2.36m1.64 0h2.36m6.64 0h2.36m1.64 0h2.36m2.64 0h2.36m1.64 0h2.36m6.64 0h2.36m1.64 0h2.36m2.64 0h2.36m6.64 0h2.36m1.64 0h2.36m1.64 0h2.36m6.64 0h2.36m2.64 0h2.36m1.64 0h2.36m6.64 0h6.36m1.64 0h2.36m0.64 0h2.36m4.64 0h2.36m1.64 0h2.36m1.64 0h2.36m6.64 0h2.36m1.64 0h2.36m0.64 0h8.36M187.82 138h2.36m6.64 0h2.36m1.64 0h2.36m1.64 0h2.36m6.64 0h2.36m2.64 0h2.36m1.64 0h2.36m6.64 0h2.36m2.64 0h2.36m1.64 0h2.36m6.64 0h2.36m1.64 0h2.36m2.64 0h2.36m10.64 0h2.36m1.64 0h2.36m2.64 0h2.36m6.64 0h2.36m1.64 0h2.36m1.64 0h2.36m6.64 0h2.36m2.64 0h2.36m1.64 0h2.36m6.64 0h6.36m0.64 0h6.36m4.64 0h2.36m1.64 0h2.36m1.64 0h2.36m6.64 0h2.36m0.64 0h10.36m8.64 0h2.36m2.64 0h2.36m1.64 0h2.36M187.82 139h2.36m1.64 0h2.36m6.64 0h2.36m2.64 0h2.36m1.64 0h2.36m6.64 0h2.36m1.64 0h2.36m2.64 0h2.36m6.64 0h2.36m1.64 0h2.36m2.64 0h2.36m6.64 0h2.36m1.64 0h2.36m1.64 0h2.36m2.64 0h2.36m6.64 0h2.36m1.64 0h2.36m1.64 0h2.36m6.64 0h2.36m2.64 0h2.36m1.64 0h2.36m6.64 0h2.36m2.64 0h6.36m6.64 0h2.36m1.64 0h2.36m2.64 0h2.36m6.64 0h6.36m1.64 0h4.36m4.64 0h2.36m2.64 0h2.36m1.64 0h2.36m1.64 0h2.36m6.64 0h4.36m0.64 0h2.36M187.82 140h2.36m1.64 0h2.36m2.64 0h2.36m6.64 0h2.36m1.64 0h2.36m2.64 0h2.36m6.64 0h2.36m1.64 0h2.36m1.64 0h2.36m6.64 0h2.36m2.64 0h2.36m1.64 0h2.36m11.64 0h2.36m1.64 0h2.36m1.64 0h2.36m6.64 0h2.36m2.64 0h2.36m1.64 0h2.36m6.64 0h2.36m2.64 0h2.36m1.64 0h2.36m6.64 0h2.36m1.64 0h2.36m2.64 0h2.36m6.64 0h10.36m0.64 0h2.36m4.64 0h2.36m1.64 0h2.36m1.64 0h2.36m9.64 0h12.36m6.64 0h2.36M191.82 141h2.36m2.64 0h2.36m1.64 0h2.36m6.64 0h2.36m2.64 0h2.36m1.64 0h2.36m6.64 0h2.36m2.64 0h2.36m1.64 0h2.36m11.64 0h2.36m1.64 0h2.36m1.64 0h2.36m6.64 0h2.36m2.64 0h2.36m1.64 0h2.36m6.64 0h2.36m2.64 0h2.36m1.64 0h2.36m6.64 0h2.36m1.64 0h2.36m2.64 0h2.36m6.64 0h8.36m0.64 0h2.36m6.64 0h2.36m1.64 0h2.36m1.64 0h2.36m9.64 0h4.36m1.64 0h6.36m7.64 0h2.36m1.64 0h2.36m1.64 0h2.36M187.82 142h2.36m6.64 0h2.36m1.64 0h2.36m2.64 0h2.36m6.64 0h2.36m1.64 0h2.36m2.64 0h2.36m10.64 0h2.36m2.64 0h2.36m1.64 0h2.36m6.64 0h2.36m2.64 0h2.36m1.64 0h2.36m6.64 0h2.36m1.64 0h2.36m2.64 0h2.36m6.64 0h2.36m1.64 0h2.36m2.64 0h2.36m6.64 0h2.36m1.64 0h2.36m2.64 0h4.36m4.64 0h2.36m1.64 0h2.36m1.64 0h2.36m9.64 0h10.36m0.64 0h2.36m6.64 0h2.36m1.64 0h2.36m1.64 0h2.36m5.64 0h12.36M187.82 143h2.36m1.64 0h2.36m7.64 0h2.36m1.64 0h2.36m1.64 0h2.36m11.64 0h2.36m1.64 0h2.36m2.64 0h2.36m6.64 0h2.36m1.64 0h2.36m2.64 0h2.36m6.64 0h2.36m1.64 0h2.36m2.64 0h2.36m6.64 0h2.36m1.64 0h2.36m2.64 0h2.36m6.64 0h2.36m1.64 0h2.36m2.64 0h2.36m6.64 0h2.36m1.64 0h2.36m1.64 0h2.36m9.64 0h8.36m2.64 0h2.36m6.64 0h2.36m1.64 0h2.36m2.64 0h2.36m4.64 0h4.36m1.64 0h6.36M187.82 144h2.36m2.64 0h2.36m1.64 0h2.36m11.64 0h2.36m1.64 0h2.36m2.64 0h2.36m6.64 0h2.36m1.64 0h2.36m2.64 0h2.36m6.64 0h2.36m1.64 0h2.36m2.64 0h2.36m6.64 0h2.36m1.64 0h2.36m1.64 0h2.36m7.64 0h2.36m1.64 0h2.36m1.64 0h2.36m7.64 0h2.36m1.64 0h2.36m1.64 0h2.36m11.64 0h6.36m0.64 0h4.36m6.64 0h2.36m1.64 0h2.36m2.64 0h2.36m4.64 0h10.36m0.64 0h2.36M196.82 145h2.36m2.64 0h2.36m1.64 0h2.36m6.64 0h2.36m2.64 0h2.36m1.64 0h2.36m6.64 0h2.36m2.64 0h2.36m1.64 0h2.36m6.64 0h2.36m2.64 0h2.36m1.64 0h2.36m6.64 0h2.36m2.64 0h2.36m1.64 0h2.36m6.64 0h2.36m2.64 0h2.36m1.64 0h2.36m11.64 0h2.36m1.64 0h2.36m2.64 0h2.36m6.64 0h2.36m1.64 0h2.36m2.64 0h2.36m4.64 0h8.36m2.64 0h2.36M187.82 146h2.36m2.64 0h2.36m6.64 0h2.36m1.64 0h2.36m2.64 0h2.36m6.64 0h2.36m1.64 0h2.36m2.64 0h2.36m6.64 0h2.36m1.64 0h2.36m2.64 0h2.36m6.64 0h2.36m2.64 0h2.36m1.64 0h2.36m11.64 0h2.36m1.64 0h2.36m11.64 0h2.36m1.64 0h2.36m2.64 0h2.36m6.64 0h2.36m1.64 0h2.36m2.64 0h2.36m6.64 0h8.36m0.64 0h2.36M187.82 147h2.36m2.64 0h2.36m1.64 0h2.36m6.64 0h2.36m2.64 0h2.36m1.64 0h2.36m7.64 0h2.36m1.64 0h2.36m2.64 0h2.36m6.64 0h2.36m1.64 0h2.36m2.64 0h2.36m10.64 0h2.36m2.64 0h2.36m1.64 0h2.36m6.64 0h2.36m2.64 0h2.36m1.64 0h2.36m7.64 0h2.36m1.64 0h2.36m1.64 0h2.36m7.64 0h2.36m1.64 0h2.36m2.64 0h2.36M192.82 148h2.36m1.64 0h2.36m2.64 0h2.36m6.64 0h2.36m2.64 0h2.36m1.64 0h2.36m11.64 0h2.36m1.64 0h2.36m11.64 0h2.36m1.64 0h2.36m2.64 0h2.36m6.64 0h2.36m2.64 0h2.36m1.64 0h2.36m6.64 0h2.36m2.64 0h2.36m1.64 0h2.36m7.64 0h2.36m1.64 0h2.36m1.64 0h2.36M187.82 149h2.36m6.64 0h2.36m2.64 0h2.36m1.64 0h2.36m11.64 0h2.36m2.64 0h2.36m1.64 0h2.36m6.64 0h2.36m2.64 0h2.36m1.64 0h2.36m7.64 0h2.36m1.64 0h2.36m2.64 0h2.36m6.64 0h2.36m1.64 0h2.36m2.64 0h2.36m6.64 0h2.36m2.64 0h2.36m1.64 0h2.36M187.82 150h2.36m2.64 0h2.36m11.64 0h2.36m1.64 0h2.36m2.64 0h2.36m6.64 0h2.36m1.64 0h2.36m2.64 0h2.36m6.64 0h2.36m2.64 0h2.36m1.64 0h2.36m7.64 0h2.36m1.64 0h2.36m2.64 0h2.36m6.64 0h2.36m1.64 0h2.36m2.64 0h2.36M192.82 151h2.36m2.64 0h2.36m1.64 0h2.36m6.64 0h2.36m2.64 0h2.36m1.64 0h2.36m7.64 0h2.36m1.64 0h2.36m2.64 0h2.36m6.64 0h2.36m2.64 0h2.36m1.64 0h2.36m11.64 0h2.36m1.64 0h2.36M187.82 152h2.36m7.64 0h2.36m1.64 0h2.36m2.64 0h2.36m6.64 0h2.36m2.64 0h2.36m1.64 0h2.36m11.64 0h2.36m2.64 0h2.36m10.64 0h2.36m2.64 0h2.36m1.64 0h2.36M187.82 153h2.36m2.64 0h2.36m11.64 0h2.36m1.64 0h2.36m11.64 0h2.36m2.64 0h2.36m1.64 0h2.36m7.64 0h2.36m1.64 0h2.36m2.64 0h2.36M192.82 154h2.36m2.64 0h2.36m1.64 0h2.36m7.64 0h2.36m1.64 0h2.36m2.64 0h2.36m6.64 0h2.36m2.64 0h2.36m1.64 0h2.36M187.82 155h2.36m7.64 0h2.36m1.64 0h2.36m2.64 0h2.36m6.64 0h2.36m2.64 0h2.36m2.64 0h2.36M188.82 156h2.36m1.64 0h2.36m7.64 0h2.36m1.64 0h2.36m2.64 0h2.36M192.82 157h2.36m2.64 0h2.36M188.82 158h2.36" fill="none" stroke="#5e5e5e" stroke-width="2.1"/><path d="M437.87 200h2.26m1.74 0h2.26M427.87 201h2.26m2.74 0h2.26m2.74 0h2.26m2.74 0h2.26M417.87 202h2.26m2.74 0h2.26m2.74 0h2.26m2.74 0h2.26m3.74 0h2.26m2.74 0h2.26M407.87 203h2.26m2.74 0h2.26m3.74 0h2.26m1.74 0h2.26m3.74 0h2.26m2.74 0h2.26m2.74 0h2.26m2.74 0h2.26M392.87 204h2.26m2.74 0h2.26m2.74 0h2.26m3.74 0h2.26m2.74 0h2.26m2.74 0h2.26m2.74 0h2.26m2.74 0h2.26m2.74 0h2.26m3.74 0h2.26m2.74 0h2.26M382.87 205h2.26m2.74 0h2.26m3.74 0h2.26m2.74 0h2.26m2.74 0h2.26m2.74 0h2.26m2.74 0h2.26m3.74 0h2.26m2.74 0h2.26m2.74 0h2.26m2.74 0h2.26m2.74 0h2.26m2.74 0h2.26M372.87 206h2.26m2.74 0h2.26m3.74 0h2.26m2.74 0h2.26m2.74 0h2.26m2.74 0h2.26m3.74 0h2.26m2.74 0h2.26m2.74 0h2.26m2.74 0h2.26m2.74 0h2.26m3.74 0h2.26m1.74 0h2.26m3.74 0h2.26m2.74 0h2.26M362.87 207h2.26m2.74 0h2.26m3.74 0h2.26m2.74 0h2.26m2.74 0h2.26m2.74 0h2.26m3.74 0h2.26m2.74 0h2.26m2.74 0h2.26m2.74 0h2.26m3.74 0h2.26m2.74 0h2.26m2.74 0h2.26m2.74 0h2.26m2.74 0h2.26m3.74 0h2.26m1.74 0h2.26M352.87 208h2.26m2.74 0h2.26m3.74 0h2.26m2.74 0h2.26m2.74 0h2.26m2.74 0h2.26m3.74 0h2.26m2.74 0h2.26m2.74 0h2.26m2.74 0h2.26m3.74 0h2.26m2.74 0h2.26m2.74 0h2.26m2.74 0h2.26m2.74 0h3.26m2.74 0h2.26m2.74 0h2.26m2.74 0h2.26m2.74 0h2.26M342.87 209h2.26m2.74 0h2.26m3.74 0h2.26m2.74 0h2.26m2.74 0h2.26m2.74 0h2.26m3.74 0h2.26m2.74 0h2.26m2.74 0h2.26m2.74 0h2.26m3.74 0h2.26m2.74 0h2.26m2.74 0h2.26m2.74 0h2.26m3.74 0h2.26m2.74 0h2.26m2.74 0h2.26m2.74 0h2.26m2.74 0h2.26m3.74 0h2.26m2.74 0h2.26M332.87 210h2.26m2.74 0h2.26m3.74 0h2.26m2.74 0h2.26m2.74 0h2.26m2.74 0h2.26m3.74 0h2.26m2.74 0h2.26m2.74 0h2.26m2.74 0h2.26m3.74 0h2.26m2.74 0h2.26m2.74 0h2.26m2.74 0h2.26m3.74 0h2.26m2.74 0h2.26m2.74 0h2.26m2.74 0h2.26m3.74 0h2.26m2.74 0h2.26m2.74 0h2.26m2.74 0h2.26m2.74 0h2.26M317.87 211h2.26m2.74 0h2.26m2.74 0h2.26m3.74 0h2.26m2.74 0h2.26m2.74 0h2.26m2.74 0h2.26m3.74 0h2.26m2.74 0h2.26m2.74 0h2.26m2.74 0h2.26m3.74 0h2.26m2.74 0h2.26m2.74 0h2.26m2.74 0h2.26m3.74 0h2.26m2.74 0h2.26m2.74 0h2.26m2.74 0h2.26m3.74 0h2.26m2.74 0h2.26m2.74 0h2.26m2.74 0h2.26m3.74 0h2.26m2.74 0h2.26m2.74 0h2.26M307.87 212h2.26m2.74 0h2.26m2.74 0h2.26m2.74 0h2.26m3.74 0h2.26m2.74 0h2.26m2.74 0h2.26m2.74 0h2.26m3.74 0h2.26m2.74 0h2.26m2.74 0h2.26m3.74 0h2.26m2.74 0h2.26m2.74 0h2.26m2.74 0h2.26m3.74 0h2.26m2.74 0h2.26m2.74 0h2.26m2.74 0h2.26m3.74 0h2.26m2.74 0h2.26m2.74 0h2.26m2.74 0h2.26m3.74 0h2.26m2.74 0h2.26m2.74 0h2.26m2.74 0h2.26m2.74 0h2.26M296.87 213h2.26m2.74 0h2.26m3.74 0h2.26m2.74 0h2.26m2.74 0h2.26m3.74 0h2.26m2.74 0h2.26m2.74 0h2.26m2.74 0h2.26m3.74 0h2.26m2.74 0h2.26m2.74 0h2.26m2.74 0h2.26m3.74 0h2.26m2.74 0h2.26m3.74 0h2.26m2.74 0h2.26m2.74 0h2.26m2.74 0h2.26m3.74 0h2.26m2.74 0h2.26m2.74 0h2.26m2.74 0h2.26m3.74 0h2.26m2.74 0h2.26m3.74 0h2.26m2.74 0h2.26m2.74 0h2.26m2.74 0h2.26m2.74 0h2.26M286.87 214h2.26m2.74 0h2.26m3.74 0h2.26m2.74 0h2.26m2.74 0h2.26m2.74 0h2.26m3.74 0h2.26m2.74 0h2.26m2.74 0h2.26m3.74 0h2.26m2.74 0h2.26m2.74 0h2.26m2.74 0h2.26m3.74 0h2.26m2.74 0h2.26m2.74 0h2.26m3.74 0h2.26m2.74 0h2.26m2.74 0h2.26m3.74 0h2.26m2.74 0h2.26m2.74 0h2.26m2.74 0h2.26m3.74 0h2.26m2.74 0h2.26m2.74 0h2.26m2.74 0h2.26m3.74 0h2.26m2.74 0h2.26m3.74 0h2.26m2.74 0h2.26m2.74 0h2.26M275.87 215h2.26m3.74 0h2.26m2.74 0h2.26m2.74 0h2.26m3.74 0h2.26m2.74 0h2.26m2.74 0h2.26m3.74 0h2.26m2.74 0h2.26m2.74 0h2.26m3.74 0h2.26m2.74 0h2.26m2.74 0h2.26m3.74 0h2.26m2.74 0h2.26m2.74 0h2.26m2.74 0h2.26m3.74 0h2.26m2.74 0h2.26m2.74 0h2.26m3.74 0h2.26m2.74 0h2.26m2.74 0h2.26m3.74 0h2.26m2.74 0h2.26m2.74 0h2.26m2.74 0h2.26m3.74 0h2.26m2.74 0h2.26m3.74 0h2.26m2.74 0h2.26m2.74 0h2.26m2.74 0h2.26m2.74 0h2.26M265.87 216h2.26m2.74 0h2.26m3.74 0h2.26m2.74 0h2.26m2.74 0h2.26m3.74 0h2.26m2.74 0h2.26m2.74 0h2.26m3.74 0h2.26m2.74 0h2.26m2.74 0h2.26m3.74 0h2.26m2.74 0h2.26m2.74 0h2.26m2.74 0h2.26m3.74 0h2.26m2.74 0h2.26m3.74 0h2.26m2.74 0h2.26m2.74 0h2.26m2.74 0h2.26m3.74 0h2.26m2.74 0h2.26m3.74 0h2.26m2.74 0h2.26m2.74 0h2.26m2.74 0h2.26m3.74 0h2.26m2.74 0h2.26m3.74 0h2.26m2.74 0h2.26m2.74 0h2.26m2.74 0h2.26m3.74 0h2.26m2.74 0h2.26m2.74 0h2.26M255.87 217h2.26m2.74 0h2.26m2.74 0h2.26m2.74 0h2.26m3.74 0h2.26m2.74 0h2.26m3.74 0h2.26m2.74 0h2.26m2.74 0h2.26m3.74 0h2.26m2.74 0h2.26m2.74 0h2.26m3.74 0h2.26m2.74 0h2.26m2.74 0h2.26m3.74 0h2.26m2.74 0h2.26m2.74 0h2.26m2.74 0h2.26m3.74 0h2.26m2.74 0h2.26m3.74 0h2.26m2.74 0h2.26m2.74 0h2.26m3.74 0h2.26m2.74 0h2.26m2.74 0h2.26m3.74 0h2.26m2.74 0h2.26m2.74 0h2.26m3.74 0h2.26m2.74 0h2.26m2.74 0h2.26m3.74 0h2.26m2.74 0h2.26m2.74 0h2.26m2.74 0h2.26m3.74 0h2.26M244.87 218h2.26m2.74 0h2.26m3.74 0h2.26m2.74 0h2.26m2.74 0h2.26m3.74 0h2.26m2.74 0h2.26m2.74 0h2.26m3.74 0h2.26m2.74 0h2.26m3.74 0h2.26m2.74 0h2.26m2.74 0h2.26m3.74 0h2.26m2.74 0h2.26m2.74 0h2.26m8.74 0h2.26m2.74 0h2.26m3.74 0h2.26m2.74 0h2.26m2.74 0h2.26m3.74 0h2.26m2.74 0h2.26m2.74 0h2.26m3.74 0h2.26m2.74 0h2.26m3.74 0h2.26m2.74 0h2.26m2.74 0h2.26m2.74 0h2.26m3.74 0h2.26m2.74 0h2.26m3.74 0h2.26m2.74 0h2.26m2.74 0h2.26m2.74 0h2.26m3.74 0h2.26m2.74 0h2.26m2.74 0h2.26M233.87 219h2.26m3.74 0h2.26m2.74 0h2.26m2.74 0h2.26m3.74 0h2.26m2.74 0h2.26m3.74 0h2.26m2.74 0h2.26m2.74 0h2.26m3.74 0h2.26m2.74 0h2.26m2.74 0h2.26m3.74 0h2.26m2.74 0h2.26m3.74 0h2.26m2.74 0h2.26m2.74 0h2.26m3.74 0h2.26m2.74 0h2.26m2.74 0h2.26m3.74 0h2.26m2.74 0h2.26m2.74 0h2.26m3.74 0h2.26m2.74 0h2.26m3.74 0h2.26m2.74 0h2.26m2.74 0h2.26m2.74 0h2.26m3.74 0h2.26m2.74 0h2.26m3.74 0h2.26m2.74 0h2.26m3.74 0h2.26m2.74 0h2.26m2.74 0h2.26m2.74 0h2.26m3.74 0h2.26m2.74 0h2.26m8.74 0h2.26m2.74 0h2.26M223.87 220h2.26m2.74 0h2.26m2.74 0h2.26m3.74 0h2.26m2.74 0h2.26m3.74 0h2.26m2.74 0h2.26m2.74 0h2.26m3.74 0h2.26m2.74 0h2.26m3.74 0h2.26m2.74 0h2.26m2.74 0h2.26m3.74 0h2.26m2.74 0h2.26m2.74 0h2.26m3.74 0h2.26m2.74 0h2.26m8.74 0h2.26m2.74 0h2.26m3.74 0h2.26m2.74 0h2.26m3.74 0h2.26m2.74 0h2.26m2.74 0h2.26m2.74 0h2.26m3.74 0h2.26m2.74 0h2.26m3.74 0h2.26m2.74 0h2.26m3.74 0h2.26m2.74 0h2.26m2.74 0h2.26m2.74 0h2.26m3.74 0h2.26m2.74 0h2.26m3.74 0h2.26m2.74 0h2.26m3.74 0h2.26m2.74 0h2.26m2.74 0h2.26m2.74 0h2.26m2.74 0h2.26M212.87 221h2.26m2.74 0h2.26m3.74 0h2.26m2.74 0h2.26m3.74 0h2.26m2.74 0h2.26m2.74 0h2.26m3.74 0h2.26m2.74 0h2.26m3.74 0h2.26m2.74 0h2.26m2.74 0h2.26m3.74 0h2.26m2.74 0h2.26m3.74 0h2.26m2.74 0h2.26m2.74 0h2.26m3.74 0h2.26m8.74 0h2.26m2.74 0h2.26m2.74 0h2.26m3.74 0h2.26m2.74 0h2.26m2.74 0h2.26m3.74 0h2.26m2.74 0h2.26m3.74 0h2.26m2.74 0h2.26m2.74 0h2.26m3.74 0h2.26m2.74 0h2.26m2.74 0h2.26m3.74 0h2.26m2.74 0h2.26m3.74 0h2.26m2.74 0h2.26m3.74 0h2.26m2.74 0h2.26m2.74 0h2.26m2.74 0h2.26m8.74 0h2.26m2.74 0h2.26m3.74 0h2.26m2.74 0h2.26M201.87 222h2.26m3.74 0h2.26m2.74 0h2.26m2.74 0h2.26m3.74 0h2.26m2.74 0h2.26m3.74 0h2.26m2.74 0h2.26m3.74 0h2.26m2.74 0h2.26m2.74 0h2.26m3.74 0h2.26m2.74 0h2.26m3.74 0h2.26m2.74 0h2.26m2.74 0h2.26m3.74 0h2.26m2.74 0h2.26m3.74 0h2.26m2.74 0h2.26m2.74 0h2.26m3.74 0h2.26m2.74 0h2.26m3.74 0h2.26m2.74 0h2.26m2.74 0h2.26m3.74 0h2.26m2.74 0h2.26m3.74 0h2.26m2.74 0h2.26m2.74 0h2.26m3.74 0h2.26m2.74 0h2.26m3.74 0h2.26m2.74 0h2.26m3.74 0h2.26m2.74 0h2.26m2.74 0h2.26m2.74 0h2.26m3.74 0h2.26m2.74 0h2.26m8.74 0h2.26m2.74 0h2.26m3.74 0h2.26m2.74 0h2.26m3.74 0h2.26m2.74 0h2.26M186.87 223h2.26m1.74 0h2.26m3.74 0h2.26m2.74 0h2.26m3.74 0h2.26m2.74 0h2.26m3.74 0h2.26m2.74 0h2.26m2.74 0h2.26m3.74 0h2.26m2.74 0h2.26m3.74 0h2.26m2.74 0h2.26m3.74 0h2.26m2.74 0h2.26m2.74 0h2.26m3.74 0h2.26m2.74 0h2.26m3.74 0h2.26m2.74 0h2.26m3.74 0h2.26m7.74 0h2.26m3.74 0h2.26m2.74 0h2.26m2.74 0h2.26m3.74 0h2.26m2.74 0h2.26m3.74 0h2.26m2.74 0h2.26m3.74 0h2.26m2.74 0h2.26m3.74 0h2.26m2.74 0h2.26m2.74 0h2.26m3.74 0h2.26m2.74 0h2.26m2.74 0h2.26m3.74 0h2.26m2.74 0h2.26m3.74 0h2.26m2.74 0h2.26m8.74 0h2.26m2.74 0h2.26m3.74 0h2.26m2.74 0h2.26m2.74 0h2.26m3.74 0h2.26m2.74 0h2.26m2.74 0h2.26M190.87 224h2.26m3.74 0h2.26m2.74 0h2.26m3.74 0h2.26m2.74 0h2.26m3.74 0h2.26m2.74 0h2.26m3.74 0h2.26m2.74 0h2.26m2.74 0h2.26m3.74 0h2.26m2.74 0h2.26m3.74 0h2.26m2.74 0h2.26m3.74 0h2.26m2.74 0h2.26m3.74 0h2.26m2.74 0h2.26m8.74 0h2.26m2.74 0h2.26m3.74 0h2.26m2.74 0h2.26m3.74 0h2.26m2.74 0h2.26m2.74 0h2.26m3.74 0h2.26m2.74 0h2.26m2.74 0h2.26m3.74 0h2.26m2.74 0h2.26m3.74 0h2.26m2.74 0h2.26m3.74 0h2.26m2.74 0h2.26m3.74 0h2.26m2.74 0h2.26m3.74 0h2.26m2.74 0h2.26m8.74 0h2.26m2.74 0h2.26m2.74 0h2.26m2.74 0h2.26m3.74 0h2.26m2.74 0h2.26m3.74 0h2.26m2.74 0h2.26m3.74 0h2.26m2.74 0h2.26M186.87 225h2.26m1.74 0h2.26m3.74 0h2.26m2.74 0h2.26m3.74 0h2.26m2.74 0h2.26m3.74 0h2.26m2.74 0h2.26m3.74 0h2.26m2.74 0h2.26m3.74 0h2.26m2.74 0h2.26m2.74 0h2.26m3.74 0h2.26m2.74 0h2.26m3.74 0h2.26m2.74 0h2.26m8.74 0h2.26m2.74 0h2.26m3.74 0h2.26m2.74 0h2.26m3.74 0h2.26m2.74 0h2.26m3.74 0h2.26m2.74 0h2.26m3.74 0h2.26m2.74 0h2.26m3.74 0h2.26m2.74 0h2.26m2.74 0h2.26m3.74 0h2.26m2.74 0h2.26m3.74 0h2.26m2.74 0h2.26m2.74 0h2.26m3.74 0h2.26m2.74 0h2.26m8.74 0h2.26m2.74 0h2.26m3.74 0h2.26m2.74 0h2.26m3.74 0h2.26m2.74 0h2.26m3.74 0h2.26m2.74 0h2.26m3.74 0h2.26m2.74 0h2.26m2.74 0h2.26m3.74 0h2.26M191.87 226h2.26m2.74 0h2.26m2.74 0h2.26m3.74 0h2.26m2.74 0h2.26m3.74 0h2.26m2.74 0h2.26m3.74 0h2.26m2.74 0h2.26m3.74 0h2.26m2.74 0h2.26m3.74 0h2.26m8.74 0h2.26m7.74 0h2.26m3.74 0h2.26m2.74 0h2.26m3.74 0h2.26m2.74 0h2.26m3.74 0h2.26m2.74 0h2.26m3.74 0h2.26m2.74 0h2.26m2.74 0h2.26m3.74 0h2.26m2.74 0h2.26m3.74 0h2.26m2.74 0h2.26m3.74 0h2.26m2.74 0h2.26m3.74 0h2.26m2.74 0h2.26m3.74 0h2.26m2.74 0h2.26m8.74 0h2.26m2.74 0h2.26m3.74 0h2.26m2.74 0h2.26m3.74 0h2.26m2.74 0h2.26m2.74 0h2.26m3.74 0h2.26m2.74 0h2.26m2.74 0h2.26m3.74 0h2.26m2.74 0h2.26m3.74 0h2.26m2.74 0h2.26M186.87 227h2.26m2.74 0h2.26m2.74 0h2.26m3.74 0h2.26m2.74 0h2.26m3.74 0h2.26m2.74 0h2.26m3.74 0h2.26m2.74 0h2.26m2.74 0h2.26m3.74 0h2.26m8.74 0h2.26m2.74 0h2.26m3.74 0h2.26m2.74 0h2.26m3.74 0h2.26m2.74 0h2.26m3.74 0h2.26m2.74 0h2.26m3.74 0h2.26m2.74 0h2.26m3.74 0h2.26m2.74 0h2.26m2.74 0h2.26m3.74 0h2.26m2.74 0h2.26m3.74 0h2.26m2.74 0h2.26m3.74 0h2.26m2.74 0h2.26m3.74 0h2.26m2.74 0h2.26m2.74 0h2.26m8.74 0h2.26m3.74 0h2.26m2.74 0h2.26m3.74 0h2.26m2.74 0h2.26m2.74 0h2.26m3.74 0h2.26m2.74 0h2.26m3.74 0h2.26m2.74 0h2.26m3.74 0h2.26m2.74 0h2.26m3.74 0h2.26m2.74 0h2.26m3.74 0h2.26m2.74 0h2.26M191.87 228h2.26m2.74 0h2.26m3.74 0h2.26m2.74 0h2.26m3.74 0h2.26m2.74 0h2.26m3.74 0h2.26m2.74 0h2.26m8.74 0h2.26m2.74 0h2.26m3.74 0h2.26m2.74 0h2.26m3.74 0h2.26m2.74 0h2.26m3.74 0h2.26m2.74 0h2.26m3.74 0h2.26m2.74 0h2.26m3.74 0h2.26m2.74 0h2.26m3.74 0h2.26m2.74 0h2.26m3.74 0h2.26m2.74 0h2.26m3.74 0h2.26m2.74 0h2.26m3.74 0h2.26m2.74 0h2.26m8.74 0h2.26m8.74 0h2.26m2.74 0h2.26m3.74 0h2.26m2.74 0h2.26m3.74 0h2.26m2.74 0h2.26m3.74 0h2.26m2.74 0h2.26m3.74 0h2.26m2.74 0h2.26m3.74 0h2.26m2.74 0h2.26m3.74 0h2.26m2.74 0h2.26m2.74 0h2.26m3.74 0h2.26m2.74 0h2.26m3.74 0h2.26M186.87 229h2.26m2.74 0h2.26m2.74 0h2.26m3.74 0h2.26m2.74 0h2.26m8.74 0h2.26m8.74 0h2.26m3.74 0h2.26m2.74 0h2.26m3.74 0h2.26m2.74 0h2.26m3.74 0h2.26m2.74 0h2.26m3.74 0h2.26m2.74 0h2.26m3.74 0h2.26m2.74 0h2.26m3.74 0h2.26m2.74 0h2.26m3.74 0h2.26m2.74 0h2.26m3.74 0h2.26m2.74 0h2.26m2.74 0h2.26m3.74 0h2.26m2.74 0h2.26m8.74 0h2.26m3.74 0h2.26m2.74 0h2.26m3.74 0h2.26m2.74 0h2.26m3.74 0h2.26m2.74 0h2.26m3.74 0h2.26m2.74 0h2.26m3.74 0h2.26m2.74 0h2.26m2.74 0h2.26m3.74 0h2.26m2.74 0h2.26m3.74 0h2.26m2.74 0h2.26m3.74 0h2.26m2.74 0h2.26m3.74 0h2.26m2.74 0h2.26m8.74 0h2.26M196.87 230h2.26m8.74 0h2.26m3.74 0h2.26m2.74 0h2.26m3.74 0h2.26m2.74 0h2.26m3.74 0h2.26m2.74 0h2.26m3.74 0h2.26m2.74 0h2.26m3.74 0h2.26m2.74 0h2.26m3.74 0h2.26m2.74 0h2.26m3.74 0h2.26m2.74 0h2.26m3.74 0h2.26m2.74 0h2.26m3.74 0h2.26m2.74 0h2.26m3.74 0h2.26m8.74 0h2.26m8.74 0h2.26m2.74 0h2.26m3.74 0h2.26m2.74 0h2.26m3.74 0h2.26m2.74 0h2.26m3.74 0h2.26m2.74 0h2.26m3.74 0h2.26m2.74 0h2.26m3.74 0h2.26m2.74 0h2.26m3.74 0h2.26m2.74 0h2.26m3.74 0h2.26m2.74 0h2.26m3.74 0h2.26m2.74 0h2.26m3.74 0h2.26m2.74 0h2.26m8.74 0h2.26m2.74 0h2.26m3.74 0h2.26M191.87 231h2.26m2.74 0h2.26m3.74 0h2.26m2.74 0h2.26m3.74 0h2.26m2.74 0h2.26m3.74 0h2.26m2.74 0h2.26m3.74 0h2.26m3.74 0h2.26m2.74 0h2.26m3.74 0h2.26m2.74 0h2.26m3.74 0h2.26m2.74 0h2.26m3.74 0h2.26m2.74 0h2.26m3.74 0h2.26m2.74 0h2.26m3.74 0h2.26m2.74 0h2.26m8.74 0h2.26m2.74 0h2.26m3.74 0h2.26m3.74 0h2.26m2.74 0h2.26m3.74 0h2.26m2.74 0h2.26m3.74 0h2.26m2.74 0h2.26m3.74 0h2.26m2.74 0h2.26m3.74 0h2.26m2.74 0h2.26m3.74 0h2.26m2.74 0h2.26m3.74 0h2.26m2.74 0h2.26m3.74 0h2.26m2.74 0h2.26m3.74 0h2.26m8.74 0h2.26m8.74 0h2.26m2.74 0h2.26m3.74 0h2.26m2.74 0h2.26m3.74 0h2.26M186.87 232h2.26m2.74 0h2.26m2.74 0h2.26m3.74 0h2.26m2.74 0h2.26m3.74 0h2.26m3.74 0h2.26m2.74 0h2.26m3.74 0h2.26m2.74 0h2.26m3.74 0h2.26m2.74 0h2.26m3.74 0h2.26m2.74 0h2.26m3.74 0h2.26m2.74 0h2.26m3.74 0h2.26m2.74 0h2.26m8.74 0h2.26m8.74 0h2.26m3.74 0h2.26m2.74 0h2.26m3.74 0h2.26m3.74 0h2.26m2.74 0h2.26m3.74 0h2.26m2.74 0h2.26m3.74 0h2.26m2.74 0h2.26m3.74 0h2.26m2.74 0h2.26m3.74 0h2.26m2.74 0h2.26m3.74 0h2.26m2.74 0h2.26m3.74 0h2.26m2.74 0h2.26m3.74 0h2.26m2.74 0h2.26m8.74 0h2.26m2.74 0h2.26m3.74 0h2.26m2.74 0h2.26m3.74 0h2.26m2.74 0h2.26m3.74 0h2.26m2.74 0h2.26m3.74 0h2.26M191.87 233h2.26m2.74 0h2.26m3.74 0h2.26m3.74 0h2.26m2.74 0h2.26m3.74 0h2.26m2.74 0h2.26m3.74 0h2.26m2.74 0h2.26m3.74 0h2.26m2.74 0h2.26m3.74 0h2.26m2.74 0h2.26m8.74 0h2.26m9.74 0h2.26m2.74 0h2.26m3.74 0h2.26m2.74 0h2.26m3.74 0h2.26m2.74 0h2.26m3.74 0h2.26m2.74 0h2.26m3.74 0h2.26m2.74 0h2.26m3.74 0h2.26m2.74 0h2.26m3.74 0h2.26m2.74 0h2.26m3.74 0h2.26m2.74 0h2.26m3.74 0h2.26m2.74 0h2.26m3.74 0h2.26m3.74 0h2.26m8.74 0h2.26m8.74 0h2.26m2.74 0h2.26m3.74 0h2.26m2.74 0h2.26m3.74 0h2.26m2.74 0h2.26m3.74 0h2.26m2.74 0h2.26m3.74 0h2.26m2.74 0h2.26m3.74 0h2.26M186.87 234h2.26m2.74 0h2.26m2.74 0h2.26m3.74 0h2.26m3.74 0h2.26m2.74 0h2.26m3.74 0h2.26m2.74 0h2.26m3.74 0h2.26m2.74 0h2.26m8.74 0h2.26m9.74 0h2.26m2.74 0h2.26m3.74 0h2.26m2.74 0h2.26m3.74 0h2.26m2.74 0h2.26m3.74 0h2.26m2.74 0h2.26m3.74 0h2.26m2.74 0h2.26m3.74 0h2.26m3.74 0h2.26m2.74 0h2.26m3.74 0h2.26m2.74 0h2.26m3.74 0h2.26m2.74 0h2.26m3.74 0h2.26m3.74 0h2.26m2.74 0h2.26m8.74 0h2.26m8.74 0h2.26m2.74 0h2.26m3.74 0h2.26m2.74 0h2.26m3.74 0h2.26m2.74 0h2.26m3.74 0h2.26m2.74 0h2.26m3.74 0h2.26m3.74 0h2.26m2.74 0h2.26m3.74 0h2.26m2.74 0h2.26m3.74 0h2.26m3.74 0h2.26M191.87 235h2.26m3.74 0h2.26m2.74 0h2.26m3.74 0h2.26m2.74 0h2.26m8.74 0h2.26m9.74 0h2.26m2.74 0h2.26m3.74 0h2.26m2.74 0h2.26m3.74 0h2.26m2.74 0h2.26m3.74 0h2.26m2.74 0h2.26m3.74 0h2.26m2.74 0h2.26m3.74 0h2.26m3.74 0h2.26m2.74 0h2.26m3.74 0h2.26m2.74 0h2.26m3.74 0h2.26m3.74 0h2.26m2.74 0h2.26m3.74 0h2.26m2.74 0h2.26m8.74 0h2.26m8.74 0h2.26m3.74 0h2.26m2.74 0h2.26m3.74 0h2.26m3.74 0h2.26m2.74 0h2.26m3.74 0h2.26m2.74 0h2.26m3.74 0h2.26m2.74 0h2.26m3.74 0h2.26m2.74 0h2.26m3.74 0h2.26m2.74 0h2.26m3.74 0h2.26m2.74 0h2.26m3.74 0h2.26m2.74 0h2.26M186.87 236h2.26m2.74 0h2.26m8.74 0h2.26m8.74 0h2.26m3.74 0h2.26m2.74 0h2.26m3.74 0h2.26m3.74 0h2.26m2.74 0h2.26m3.74 0h2.26m2.74 0h2.26m3.74 0h2.26m2.74 0h2.26m3.74 0h2.26m3.74 0h2.26m2.74 0h2.26m3.74 0h2.26m2.74 0h2.26m3.74 0h2.26m3.74 0h2.26m2.74 0h2.26m3.74 0h2.26m2.74 0h2.26m8.74 0h2.26m8.74 0h2.26m3.74 0h2.26m3.74 0h2.26m2.74 0h2.26m3.74 0h2.26m2.74 0h2.26m3.74 0h2.26m2.74 0h2.26m3.74 0h2.26m2.74 0h2.26m3.74 0h2.26m2.74 0h2.26m3.74 0h2.26m3.74 0h2.26m2.74 0h2.26m3.74 0h2.26m3.74 0h2.26m2.74 0h2.26m8.74 0h2.26m8.74 0h2.26m2.74 0h2.26M191.87 237h2.26m3.74 0h2.26m2.74 0h2.26m3.74 0h2.26m2.74 0h2.26m3.74 0h2.26m3.74 0h2.26m2.74 0h2.26m3.74 0h2.26m2.74 0h2.26m3.74 0h2.26m3.74 0h2.26m2.74 0h2.26m3.74 0h2.26m2.74 0h2.26m3.74 0h2.26m3.74 0h2.26m2.74 0h2.26m3.74 0h2.26m2.74 0h2.26m8.74 0h2.26m9.74 0h2.26m2.74 0h2.26m3.74 0h2.26m2.74 0h2.26m3.74 0h2.26m2.74 0h2.26m3.74 0h2.26m2.74 0h2.26m3.74 0h2.26m3.74 0h2.26m2.74 0h2.26m3.74 0h2.26m3.74 0h2.26m2.74 0h2.26m3.74 0h2.26m2.74 0h2.26m3.74 0h2.26m2.74 0h2.26m8.74 0h2.26m8.74 0h2.26m3.74 0h2.26m3.74 0h2.26m2.74 0h2.26m3.74 0h2.26m2.74 0h2.26M186.87 238h2.26m2.74 0h2.26m3.74 0h2.26m2.74 0h2.26m3.74 0h2.26m3.74 0h2.26m2.74 0h2.26m3.74 0h2.26m2.74 0h2.26m3.74 0h2.26m2.74 0h2.26m3.74 0h2.26m3.74 0h2.26m2.74 0h2.26m3.74 0h2.26m8.74 0h2.26m8.74 0h2.26m8.74 0h2.26m3.74 0h2.26m3.74 0h2.26m2.74 0h2.26m3.74 0h2.26m2.74 0h2.26m3.74 0h2.26m2.74 0h2.26m3.74 0h2.26m3.74 0h2.26m2.74 0h2.26m3.74 0h2.26m3.74 0h2.26m2.74 0h2.26m3.74 0h2.26m2.74 0h2.26m3.74 0h2.26m2.74 0h2.26m9.74 0h2.26m8.74 0h2.26m2.74 0h2.26m3.74 0h2.26m2.74 0h2.26m3.74 0h2.26m2.74 0h2.26m3.74 0h2.26m2.74 0h2.26m3.74 0h2.26m3.74 0h2.26M191.87 239h2.26m3.74 0h2.26m2.74 0h2.26m3.74 0h2.26m3.74 0h2.26m2.74 0h2.26m3.74 0h2.26m2.74 0h2.26m3.74 0h2.26m3.74 0h2.26m8.74 0h2.26m8.74 0h2.26m3.74 0h2.26m2.74 0h2.26m3.74 0h2.26m3.74 0h2.26m2.74 0h2.26m3.74 0h2.26m2.74 0h2.26m3.74 0h2.26m2.74 0h2.26m3.74 0h2.26m3.74 0h2.26m2.74 0h2.26m3.74 0h2.26m3.74 0h2.26m2.74 0h2.26m3.74 0h2.26m2.74 0h2.26m3.74 0h2.26m2.74 0h2.26m9.74 0h2.26m8.74 0h2.26m2.74 0h2.26m3.74 0h2.26m2.74 0h2.26m3.74 0h2.26m3.74 0h2.26m2.74 0h2.26m3.74 0h2.26m3.74 0h2.26m2.74 0h2.26m3.74 0h2.26m2.74 0h2.26m3.74 0h2.26m2.74 0h2.26M186.87 240h2.26m2.74 0h2.26m3.74 0h2.26m2.74 0h2.26m3.74 0h2.26m8.74 0h2.26m9.74 0h2.26m8.74 0h2.26m2.74 0h2.26m3.74 0h2.26m3.74 0h2.26m2.74 0h2.26m3.74 0h2.26m3.74 0h2.26m2.74 0h2.26m3.74 0h2.26m2.74 0h2.26m3.74 0h2.26m3.74 0h2.26m2.74 0h2.26m3.74 0h2.26m3.74 0h2.26m2.74 0h2.26m3.74 0h2.26m2.74 0h2.26m8.74 0h2.26m9.74 0h2.26m8.74 0h2.26m2.74 0h2.26m3.74 0h2.26m3.74 0h2.26m2.74 0h2.26m3.74 0h2.26m3.74 0h2.26m2.74 0h2.26m3.74 0h2.26m2.74 0h2.26m3.74 0h2.26m2.74 0h2.26m3.74 0h2.26m3.74 0h2.26m2.74 0h2.26m3.74 0h2.26m8.74 0h2.26M197.87 241h2.26m8.74 0h2.26m3.74 0h2.26m2.74 0h2.26m3.74 0h2.26m3.74 0h2.26m2.74 0h2.26m3.74 0h2.26m3.74 0h2.26m2.74 0h2.26m3.74 0h2.26m3.74 0h2.26m2.74 0h2.26m3.74 0h2.26m2.74 0h2.26m3.74 0h2.26m3.74 0h2.26m2.74 0h2.26m3.74 0h2.26m3.74 0h2.26m2.74 0h2.26m8.74 0h2.26m9.74 0h2.26m2.74 0h2.26m3.74 0h2.26m2.74 0h2.26m3.74 0h2.26m3.74 0h2.26m2.74 0h2.26m3.74 0h2.26m3.74 0h2.26m2.74 0h2.26m3.74 0h2.26m2.74 0h2.26m3.74 0h2.26m2.74 0h2.26m3.74 0h2.26m3.74 0h2.26m3.74 0h2.26m2.74 0h2.26m8.74 0h2.26m8.74 0h2.26m3.74 0h2.26m3.74 0h2.26M191.87 242h2.26m3.74 0h2.26m3.74 0h2.26m2.74 0h2.26m3.74 0h2.26m3.74 0h2.26m2.74 0h2.26m3.74 0h2.26m2.74 0h2.26m3.74 0h2.26m3.74 0h2.26m2.74 0h2.26m3.74 0h2.26m3.74 0h2.26m2.74 0h2.26m3.74 0h2.26m3.74 0h2.26m8.74 0h2.26m8.74 0h2.26m8.74 0h2.26m3.74 0h2.26m3.74 0h2.26m2.74 0h2.26m3.74 0h2.26m2.74 0h2.26m3.74 0h2.26m3.74 0h2.26m3.74 0h2.26m2.74 0h2.26m3.74 0h2.26m2.74 0h2.26m3.74 0h2.26m3.74 0h2.26m2.74 0h2.26m3.74 0h2.26m3.74 0h2.26m2.74 0h2.26m8.74 0h2.26m9.74 0h2.26m2.74 0h2.26m3.74 0h2.26m2.74 0h2.26m3.74 0h2.26m2.74 0h2.26m3.74 0h2.26M187.87 243h2.26m1.74 0h2.26m3.74 0h2.26m3.74 0h2.26m2.74 0h2.26m3.74 0h2.26m3.74 0h2.26m2.74 0h2.26m3.74 0h2.26m3.74 0h2.26m2.74 0h2.26m3.74 0h2.26m8.74 0h2.26m9.74 0h2.26m8.74 0h2.26m2.74 0h2.26m3.74 0h2.26m3.74 0h2.26m3.74 0h2.26m2.74 0h2.26m3.74 0h2.26m2.74 0h2.26m3.74 0h2.26m3.74 0h2.26m2.74 0h2.26m3.74 0h2.26m3.74 0h2.26m2.74 0h2.26m3.74 0h2.26m2.74 0h2.26m3.74 0h2.26m3.74 0h2.26m8.74 0h2.26m8.74 0h2.26m9.74 0h2.26m2.74 0h2.26m3.74 0h2.26m2.74 0h2.26m3.74 0h2.26m3.74 0h2.26m2.74 0h2.26m3.74 0h2.26m3.74 0h2.26m2.74 0h2.26m3.74 0h2.26M191.87 244h2.26m3.74 0h2.26m3.74 0h2.26m2.74 0h2.26m3.74 0h2.26m3.74 0h2.26m2.74 0h2.26m9.74 0h2.26m8.74 0h2.26m3.74 0h2.26m2.74 0h2.26m3.74 0h2.26m3.74 0h2.26m2.74 0h2.26m3.74 0h2.26m3.74 0h2.26m2.74 0h2.26m3.74 0h2.26m3.74 0h2.26m2.74 0h2.26m3.74 0h2.26m3.74 0h2.26m2.74 0h2.26m3.74 0h2.26m3.74 0h2.26m2.74 0h2.26m9.74 0h2.26m8.74 0h2.26m8.74 0h2.26m3.74 0h2.26m3.74 0h2.26m2.74 0h2.26m3.74 0h2.26m2.74 0h2.26m3.74 0h2.26m3.74 0h2.26m2.74 0h2.26m3.74 0h2.26m3.74 0h2.26m2.74 0h2.26m3.74 0h2.26m2.74 0h2.26m3.74 0h2.26m3.74 0h2.26M187.87 245h2.26m1.74 0h2.26m9.74 0h2.26m8.74 0h2.26m9.74 0h2.26m2.74 0h2.26m3.74 0h2.26m2.74 0h2.26m3.74 0h2.26m3.74 0h2.26m3.74 0h2.26m2.74 0h2.26m3.74 0h2.26m3.74 0h2.26m2.74 0h2.26m3.74 0h2.26m3.74 0h2.26m2.74 0h2.26m3.74 0h2.26m3.74 0h2.26m8.74 0h2.26m8.74 0h2.26m9.74 0h2.26m2.74 0h2.26m3.74 0h2.26m2.74 0h2.26m3.74 0h2.26m3.74 0h2.26m3.74 0h2.26m2.74 0h2.26m3.74 0h2.26m2.74 0h2.26m3.74 0h2.26m3.74 0h2.26m3.74 0h2.26m2.74 0h2.26m3.74 0h2.26m2.74 0h2.26m3.74 0h2.26m3.74 0h2.26m8.74 0h2.26m8.74 0h2.26m3.74 0h2.26M191.87 246h2.26m3.74 0h2.26m3.74 0h2.26m2.74 0h2.26m3.74 0h2.26m3.74 0h2.26m3.74 0h2.26m2.74 0h2.26m3.74 0h2.26m3.74 0h2.26m2.74 0h2.26m3.74 0h2.26m3.74 0h2.26m2.74 0h2.26m3.74 0h2.26m3.74 0h2.26m8.74 0h2.26m9.74 0h2.26m8.74 0h2.26m3.74 0h2.26m2.74 0h2.26m3.74 0h2.26m3.74 0h2.26m2.74 0h2.26m3.74 0h2.26m3.74 0h2.26m2.74 0h2.26m3.74 0h2.26m3.74 0h2.26m2.74 0h2.26m3.74 0h2.26m3.74 0h2.26m3.74 0h2.26m2.74 0h2.26m3.74 0h2.26m2.74 0h2.26m9.74 0h2.26m8.74 0h2.26m8.74 0h2.26m3.74 0h2.26m3.74 0h2.26m2.74 0h2.26m3.74 0h2.26m2.74 0h2.26M187.87 247h2.26m1.74 0h2.26m3.74 0h2.26m3.74 0h2.26m3.74 0h2.26m2.74 0h2.26m3.74 0h2.26m3.74 0h2.26m2.74 0h2.26m3.74 0h2.26m3.74 0h2.26m8.74 0h2.26m9.74 0h2.26m8.74 0h2.26m3.74 0h2.26m2.74 0h2.26m3.74 0h2.26m3.74 0h2.26m2.74 0h2.26m3.74 0h2.26m3.74 0h2.26m3.74 0h2.26m2.74 0h2.26m3.74 0h2.26m3.74 0h2.26m3.74 0h2.26m2.74 0h2.26m3.74 0h2.26m2.74 0h2.26m3.74 0h2.26m3.74 0h2.26m8.74 0h2.26m9.74 0h2.26m8.74 0h2.26m2.74 0h2.26m3.74 0h2.26m3.74 0h2.26m3.74 0h2.26m2.74 0h2.26m3.74 0h2.26m2.74 0h2.26m3.74 0h2.26m3.74 0h2.26m3.74 0h2.26m2.74 0h2.26M191.87 248h2.26m3.74 0h2.26m3.74 0h2.26m3.74 0h2.26m8.74 0h2.26m9.74 0h2.26m8.74 0h2.26m3.74 0h2.26m2.74 0h2.26m3.74 0h2.26m3.74 0h2.26m2.74 0h2.26m3.74 0h2.26m3.74 0h2.26m3.74 0h2.26m2.74 0h2.26m3.74 0h2.26m3.74 0h2.26m3.74 0h2.26m2.74 0h2.26m3.74 0h2.26m3.74 0h2.26m3.74 0h2.26m2.74 0h2.26m8.74 0h2.26m9.74 0h2.26m8.74 0h2.26m3.74 0h2.26m3.74 0h2.26m2.74 0h2.26m3.74 0h2.26m3.74 0h2.26m2.74 0h2.26m3.74 0h2.26m3.74 0h2.26m2.74 0h2.26m3.74 0h2.26m3.74 0h2.26m3.74 0h2.26m2.74 0h2.26m3.74 0h2.26m2.74 0h2.26m9.74 0h2.26M197.87 249h2.26m9.74 0h2.26m2.74 0h2.26m3.74 0h2.26m3.74 0h2.26m3.74 0h2.26m2.74 0h2.26m3.74 0h2.26m3.74 0h2.26m3.74 0h2.26m2.74 0h2.26m3.74 0h2.26m3.74 0h2.26m3.74 0h2.26m2.74 0h2.26m3.74 0h2.26m3.74 0h2.26m3.74 0h2.26m2.74 0h2.26m9.74 0h2.26m8.74 0h2.26m8.74 0h2.26m3.74 0h2.26m3.74 0h2.26m2.74 0h2.26m3.74 0h2.26m3.74 0h2.26m3.74 0h2.26m2.74 0h2.26m3.74 0h2.26m3.74 0h2.26m3.74 0h2.26m2.74 0h2.26m3.74 0h2.26m2.74 0h2.26m3.74 0h2.26m3.74 0h2.26m8.74 0h2.26m9.74 0h2.26m8.74 0h2.26m3.74 0h2.26m3.74 0h2.26M187.87 250h2.26m2.74 0h2.26m2.74 0h2.26m3.74 0h2.26m3.74 0h2.26m3.74 0h2.26m2.74 0h2.26m3.74 0h2.26m3.74 0h2.26m3.74 0h2.26m2.74 0h2.26m3.74 0h2.26m3.74 0h2.26m2.74 0h2.26m9.74 0h2.26m8.74 0h2.26m9.74 0h2.26m8.74 0h2.26m3.74 0h2.26m3.74 0h2.26m2.74 0h2.26m3.74 0h2.26m3.74 0h2.26m3.74 0h2.26m2.74 0h2.26m3.74 0h2.26m3.74 0h2.26m3.74 0h2.26m2.74 0h2.26m3.74 0h2.26m3.74 0h2.26m3.74 0h2.26m2.74 0h2.26m9.74 0h2.26m8.74 0h2.26m9.74 0h2.26m2.74 0h2.26m3.74 0h2.26m2.74 0h2.26m3.74 0h2.26m3.74 0h2.26m3.74 0h2.26m2.74 0h2.26m3.74 0h2.26M192.87 251h2.26m2.74 0h2.26m3.74 0h2.26m3.74 0h2.26m3.74 0h2.26m2.74 0h2.26m3.74 0h2.26m9.74 0h2.26m8.74 0h2.26m9.74 0h2.26m2.74 0h2.26m3.74 0h2.26m3.74 0h2.26m3.74 0h2.26m2.74 0h2.26m3.74 0h2.26m3.74 0h2.26m3.74 0h2.26m2.74 0h2.26m3.74 0h2.26m3.74 0h2.26m3.74 0h2.26m2.74 0h2.26m3.74 0h2.26m3.74 0h2.26m3.74 0h2.26m2.74 0h2.26m9.74 0h2.26m8.74 0h2.26m9.74 0h2.26m2.74 0h2.26m3.74 0h2.26m3.74 0h2.26m3.74 0h2.26m2.74 0h2.26m3.74 0h2.26m3.74 0h2.26m3.74 0h2.26m2.74 0h2.26m3.74 0h2.26m2.74 0h2.26m4.74 0h2.26m2.74 0h2.26m3.74 0h2.26M187.87 252h2.26m2.74 0h2.26m8.74 0h2.26m9.74 0h2.26m8.74 0h2.26m3.74 0h2.26m3.74 0h2.26m3.74 0h2.26m2.74 0h2.26m3.74 0h2.26m3.74 0h2.26m3.74 0h2.26m2.74 0h2.26m3.74 0h2.26m3.74 0h2.26m3.74 0h2.26m3.74 0h2.26m2.74 0h2.26m3.74 0h2.26m3.74 0h2.26m8.74 0h2.26m9.74 0h2.26m8.74 0h2.26m9.74 0h2.26m2.74 0h2.26m3.74 0h2.26m3.74 0h2.26m3.74 0h2.26m2.74 0h2.26m3.74 0h2.26m3.74 0h2.26m3.74 0h2.26m2.74 0h2.26m3.74 0h2.26m3.74 0h2.26m3.74 0h2.26m2.74 0h2.26m9.74 0h2.26m8.74 0h2.26m9.74 0h2.26M192.87 253h2.26m2.74 0h2.26m3.74 0h2.26m3.74 0h2.26m3.74 0h2.26m3.74 0h2.26m2.74 0h2.26m3.74 0h2.26m3.74 0h2.26m3.74 0h2.26m3.74 0h2.26m2.74 0h2.26m3.74 0h2.26m3.74 0h2.26m3.74 0h2.26m2.74 0h2.26m9.74 0h2.26m8.74 0h2.26m9.74 0h2.26m3.74 0h2.26m3.74 0h2.26m2.74 0h2.26m3.74 0h2.26m3.74 0h2.26m3.74 0h2.26m2.74 0h2.26m3.74 0h2.26m3.74 0h2.26m3.74 0h2.26m2.74 0h2.26m3.74 0h2.26m3.74 0h2.26m3.74 0h2.26m2.74 0h2.26m9.74 0h2.26m8.74 0h2.26m9.74 0h2.26m2.74 0h2.26m3.74 0h2.26m3.74 0h2.26m3.74 0h2.26m2.74 0h2.26m3.74 0h2.26m3.74 0h2.26M187.87 254h2.26m2.74 0h2.26m3.74 0h2.26m2.74 0h2.26m3.74 0h2.26m3.74 0h2.26m3.74 0h2.26m3.74 0h2.26m2.74 0h2.26m9.74 0h2.26m8.74 0h2.26m9.74 0h2.26m9.74 0h2.26m2.74 0h2.26m3.74 0h2.26m3.74 0h2.26m3.74 0h2.26m2.74 0h2.26m3.74 0h2.26m3.74 0h2.26m3.74 0h2.26m3.74 0h2.26m2.74 0h2.26m3.74 0h2.26m3.74 0h2.26m3.74 0h2.26m3.74 0h2.26m2.74 0h2.26m9.74 0h2.26m8.74 0h2.26m9.74 0h2.26m2.74 0h2.26m3.74 0h2.26m3.74 0h2.26m3.74 0h2.26m2.74 0h2.26m3.74 0h2.26m3.74 0h2.26m3.74 0h2.26m2.74 0h2.26m4.74 0h2.26m2.74 0h2.26M198.87 255h2.26m8.74 0h2.26m9.74 0h2.26m8.74 0h2.26m3.74 0h2.26m3.74 0h2.26m3.74 0h2.26m3.74 0h2.26m2.74 0h2.26m3.74 0h2.26m3.74 0h2.26m3.74 0h2.26m3.74 0h2.26m2.74 0h2.26m3.74 0h2.26m3.74 0h2.26m3.74 0h2.26m3.74 0h2.26m2.74 0h2.26m9.74 0h2.26m8.74 0h2.26m9.74 0h2.26m9.74 0h2.26m2.74 0h2.26m3.74 0h2.26m3.74 0h2.26m3.74 0h2.26m2.74 0h2.26m3.74 0h2.26m3.74 0h2.26m3.74 0h2.26m2.74 0h2.26m4.74 0h2.26m2.74 0h2.26m3.74 0h2.26m3.74 0h2.26m8.74 0h2.26m20.74 0h2.26M192.87 256h2.26m3.74 0h2.26m2.74 0h2.26m3.74 0h2.26m3.74 0h2.26m3.74 0h2.26m3.74 0h2.26m3.74 0h2.26m2.74 0h2.26m3.74 0h2.26m3.74 0h2.26m3.74 0h2.26m3.74 0h2.26m3.74 0h2.26m2.74 0h2.26m9.74 0h2.26m8.74 0h2.26m9.74 0h2.26m9.74 0h2.26m2.74 0h2.26m3.74 0h2.26m3.74 0h2.26m3.74 0h2.26m2.74 0h2.26m4.74 0h2.26m2.74 0h2.26m3.74 0h2.26m3.74 0h2.26m3.74 0h2.26m2.74 0h2.26m3.74 0h2.26m3.74 0h2.26m3.74 0h2.26m2.74 0h2.26m9.74 0h2.26m9.74 0h2.26m8.74 0h2.26m3.74 0h2.26m14.74 0h2.26m3.74 0h2.26m3.74 0h2.26M187.87 257h2.26m2.74 0h2.26m3.74 0h2.26m3.74 0h2.26m2.74 0h2.26m3.74 0h2.26m3.74 0h2.26m3.74 0h2.26m8.74 0h2.26m9.74 0h2.26m9.74 0h2.26m8.74 0h2.26m3.74 0h2.26m3.74 0h2.26m3.74 0h2.26m3.74 0h2.26m2.74 0h2.26m3.74 0h2.26m3.74 0h2.26m3.74 0h2.26m3.74 0h2.26m3.74 0h2.26m2.74 0h2.26m3.74 0h2.26m3.74 0h2.26m3.74 0h2.26m3.74 0h2.26m8.74 0h2.26m9.74 0h2.26m8.74 0h2.26m9.74 0h2.26m3.74 0h2.26m3.74 0h2.26m2.74 0h2.26m3.74 0h2.26m3.74 0h2.26m14.74 0h2.26m3.74 0h2.26m3.74 0h2.26m3.74 0h2.26m3.74 0h2.26M192.87 258h2.26m9.74 0h2.26m8.74 0h2.26m9.74 0h2.26m3.74 0h2.26m3.74 0h2.26m2.74 0h2.26m3.74 0h2.26m3.74 0h2.26m3.74 0h2.26m3.74 0h2.26m3.74 0h2.26m2.74 0h2.26m3.74 0h2.26m3.74 0h2.26m3.74 0h2.26m3.74 0h2.26m3.74 0h2.26m2.74 0h2.26m9.74 0h2.26m9.74 0h2.26m8.74 0h2.26m9.74 0h2.26m3.74 0h2.26m3.74 0h2.26m2.74 0h2.26m3.74 0h2.26m3.74 0h2.26m3.74 0h2.26m2.74 0h2.26m4.74 0h2.26m2.74 0h2.26m3.74 0h2.26m3.74 0h2.26m20.74 0h2.26m9.74 0h2.26m8.74 0h2.26M187.87 259h2.26m2.74 0h2.26m3.74 0h2.26m3.74 0h2.26m2.74 0h2.26m3.74 0h2.26m3.74 0h2.26m3.74 0h2.26m3.74 0h2.26m3.74 0h2.26m3.74 0h2.26m3.74 0h2.26m2.74 0h2.26m3.74 0h2.26m3.74 0h2.26m9.74 0h2.26m8.74 0h2.26m9.74 0h2.26m9.74 0h2.26m2.74 0h2.26m3.74 0h2.26m3.74 0h2.26m3.74 0h2.26m3.74 0h2.26m3.74 0h2.26m2.74 0h2.26m3.74 0h2.26m3.74 0h2.26m3.74 0h2.26m3.74 0h2.26m3.74 0h2.26m2.74 0h2.26m4.74 0h2.26m2.74 0h2.26m9.74 0h2.26m20.74 0h2.26m3.74 0h2.26m3.74 0h2.26m2.74 0h2.26m3.74 0h2.26m3.74 0h2.26M192.87 260h2.26m3.74 0h2.26m3.74 0h2.26m3.74 0h2.26m3.74 0h2.26m2.74 0h2.26m9.74 0h2.26m9.74 0h2.26m8.74 0h2.26m9.74 0h2.26m3.74 0h2.26m3.74 0h2.26m3.74 0h2.26m3.74 0h2.26m2.74 0h2.26m3.74 0h2.26m3.74 0h2.26m3.74 0h2.26m3.74 0h2.26m3.74 0h2.26m2.74 0h2.26m4.74 0h2.26m2.74 0h2.26m3.74 0h2.26m3.74 0h2.26m9.74 0h2.26m8.74 0h2.26m9.74 0h2.26m9.74 0h2.26m2.74 0h2.26m15.74 0h2.26m3.74 0h2.26m3.74 0h2.26m2.74 0h2.26m3.74 0h2.26m3.74 0h2.26m15.74 0h2.26m2.74 0h2.26M198.87 261h2.26m9.74 0h2.26m8.74 0h2.26m3.74 0h2.26m3.74 0h2.26m3.74 0h2.26m3.74 0h2.26m3.74 0h2.26m3.74 0h2.26m2.74 0h2.26m3.74 0h2.26m3.74 0h2.26m3.74 0h2.26m3.74 0h2.26m3.74 0h2.26m3.74 0h2.26m3.74 0h2.26m2.74 0h2.26m9.74 0h2.26m9.74 0h2.26m9.74 0h2.26m8.74 0h2.26m3.74 0h2.26m3.74 0h2.26m3.74 0h2.26m3.74 0h2.26m2.74 0h2.26m3.74 0h2.26m3.74 0h2.26m15.74 0h2.26m2.74 0h2.26m4.74 0h2.26m2.74 0h2.26m9.74 0h2.26m20.74 0h2.26M187.87 262h2.26m2.74 0h2.26m3.74 0h2.26m3.74 0h2.26m3.74 0h2.26m3.74 0h2.26m3.74 0h2.26m2.74 0h2.26m3.74 0h2.26m3.74 0h2.26m3.74 0h2.26m3.74 0h2.26m9.74 0h2.26m8.74 0h2.26m9.74 0h2.26m9.74 0h2.26m9.74 0h2.26m2.74 0h2.26m4.74 0h2.26m2.74 0h2.26m3.74 0h2.26m3.74 0h2.26m3.74 0h2.26m3.74 0h2.26m3.74 0h2.26m2.74 0h2.26m4.74 0h2.26m2.74 0h2.26m3.74 0h2.26m3.74 0h2.26m20.74 0h2.26m9.74 0h2.26m9.74 0h2.26m2.74 0h2.26m15.74 0h2.26m3.74 0h2.26m15.74 0h2.26M192.87 263h2.26m3.74 0h2.26m3.74 0h2.26m9.74 0h2.26m9.74 0h2.26m8.74 0h2.26m9.74 0h2.26m3.74 0h2.26m3.74 0h2.26m3.74 0h2.26m3.74 0h2.26m2.74 0h2.26m4.74 0h2.26m2.74 0h2.26m3.74 0h2.26m3.74 0h2.26m3.74 0h2.26m3.74 0h2.26m3.74 0h2.26m3.74 0h2.26m3.74 0h2.26m2.74 0h2.26m9.74 0h2.26m9.74 0h2.26m9.74 0h2.26m20.74 0h2.26m3.74 0h2.26m3.74 0h2.26m3.74 0h2.26m3.74 0h2.26m2.74 0h2.26m15.74 0h2.26m3.74 0h2.26m20.74 0h2.26M187.87 264h2.26m2.74 0h2.26m9.74 0h2.26m3.74 0h2.26m3.74 0h2.26m3.74 0h2.26m3.74 0h2.26m3.74 0h2.26m2.74 0h2.26m3.74 0h2.26m3.74 0h2.26m3.74 0h2.26m3.74 0h2.26m3.74 0h2.26m3.74 0h2.26m3.74 0h2.26m9.74 0h2.26m8.74 0h2.26m9.74 0h2.26m9.74 0h2.26m9.74 0h2.26m2.74 0h2.26m4.74 0h2.26m2.74 0h2.26m3.74 0h2.26m3.74 0h2.26m15.74 0h2.26m3.74 0h2.26m3.74 0h2.26m2.74 0h2.26m4.74 0h2.26m2.74 0h2.26m21.74 0h2.26m20.74 0h2.26m3.74 0h2.26m3.74 0h2.26m2.74 0h2.26M192.87 265h2.26m3.74 0h2.26m3.74 0h2.26m3.74 0h2.26m3.74 0h2.26m3.74 0h2.26m3.74 0h2.26m3.74 0h2.26m9.74 0h2.26m8.74 0h2.26m9.74 0h2.26m9.74 0h2.26m3.74 0h2.26m3.74 0h2.26m3.74 0h2.26m3.74 0h2.26m2.74 0h2.26m4.74 0h2.26m2.74 0h2.26m3.74 0h2.26m3.74 0h2.26m3.74 0h2.26m3.74 0h2.26m3.74 0h2.26m3.74 0h2.26m20.74 0h2.26m9.74 0h2.26m9.74 0h2.26m21.74 0h2.26m2.74 0h2.26m15.74 0h2.26m3.74 0h2.26m3.74 0h2.26m2.74 0h2.26m4.74 0h2.26m2.74 0h2.26M198.87 266h2.26m9.74 0h2.26m9.74 0h2.26m9.74 0h2.26m3.74 0h2.26m3.74 0h2.26m3.74 0h2.26m3.74 0h2.26m2.74 0h2.26m3.74 0h2.26m3.74 0h2.26m3.74 0h2.26m3.74 0h2.26m3.74 0h2.26m3.74 0h2.26m3.74 0h2.26m3.74 0h2.26m9.74 0h2.26m8.74 0h2.26m9.74 0h2.26m21.74 0h2.26m3.74 0h2.26m3.74 0h2.26m2.74 0h2.26m4.74 0h2.26m2.74 0h2.26m15.74 0h2.26m3.74 0h2.26m21.74 0h2.26m8.74 0h2.26m9.74 0h2.26M187.87 267h2.26m2.74 0h2.26m3.74 0h2.26m3.74 0h2.26m3.74 0h2.26m3.74 0h2.26m3.74 0h2.26m3.74 0h2.26m3.74 0h2.26m3.74 0h2.26m3.74 0h2.26m3.74 0h2.26m9.74 0h2.26m8.74 0h2.26m9.74 0h2.26m9.74 0h2.26m9.74 0h2.26m3.74 0h2.26m3.74 0h2.26m3.74 0h2.26m3.74 0h2.26m3.74 0h2.26m15.74 0h2.26m2.74 0h2.26m3.74 0h2.26m3.74 0h2.26m3.74 0h2.26m3.74 0h2.26m21.74 0h2.26m20.74 0h2.26m3.74 0h2.26m3.74 0h2.26m3.74 0h2.26m3.74 0h2.26m3.74 0h2.26m15.74 0h2.26M192.87 268h2.26m3.74 0h2.26m3.74 0h2.26m9.74 0h2.26m9.74 0h2.26m9.74 0h2.26m9.74 0h2.26m3.74 0h2.26m3.74 0h2.26m3.74 0h2.26m3.74 0h2.26m3.74 0h2.26m3.74 0h2.26m2.74 0h2.26m4.74 0h2.26m2.74 0h2.26m3.74 0h2.26m3.74 0h2.26m3.74 0h2.26m3.74 0h2.26m21.74 0h2.26m9.74 0h2.26m9.74 0h2.26m20.74 0h2.26m3.74 0h2.26m15.74 0h2.26m3.74 0h2.26m3.74 0h2.26m3.74 0h2.26m3.74 0h2.26m3.74 0h2.26m20.74 0h2.26M187.87 269h2.26m2.74 0h2.26m9.74 0h2.26m3.74 0h2.26m3.74 0h2.26m3.74 0h2.26m3.74 0h2.26m3.74 0h2.26m3.74 0h2.26m3.74 0h2.26m3.74 0h2.26m3.74 0h2.26m3.74 0h2.26m3.74 0h2.26m3.74 0h2.26m3.74 0h2.26m9.74 0h2.26m9.74 0h2.26m9.74 0h2.26m20.74 0h2.26m3.74 0h2.26m3.74 0h2.26m3.74 0h2.26m3.74 0h2.26m3.74 0h2.26m15.74 0h2.26m3.74 0h2.26m21.74 0h2.26m8.74 0h2.26m9.74 0h2.26m21.74 0h2.26m3.74 0h2.26M192.87 270h2.26m3.74 0h2.26m3.74 0h2.26m3.74 0h2.26m3.74 0h2.26m3.74 0h2.26m9.74 0h2.26m9.74 0h2.26m9.74 0h2.26m9.74 0h2.26m9.74 0h2.26m3.74 0h2.26m3.74 0h2.26m3.74 0h2.26m3.74 0h2.26m3.74 0h2.26m15.74 0h2.26m3.74 0h2.26m3.74 0h2.26m3.74 0h2.26m9.74 0h2.26m20.74 0h2.26m21.74 0h2.26m3.74 0h2.26m3.74 0h2.26m3.74 0h2.26m3.74 0h2.26m3.74 0h2.26m15.74 0h2.26m3.74 0h2.26m20.74 0h2.26M198.87 271h2.26m9.74 0h2.26m9.74 0h2.26m3.74 0h2.26m3.74 0h2.26m3.74 0h2.26m3.74 0h2.26m3.74 0h2.26m3.74 0h2.26m3.74 0h2.26m3.74 0h2.26m3.74 0h2.26m3.74 0h2.26m3.74 0h2.26m9.74 0h2.26m21.74 0h2.26m9.74 0h2.26m9.74 0h2.26m3.74 0h2.26m15.74 0h2.26m3.74 0h2.26m15.74 0h2.26m3.74 0h2.26m3.74 0h2.26m3.74 0h2.26m3.74 0h2.26m2.74 0h2.26m21.74 0h2.26m21.74 0h2.26m3.74 0h2.26m3.74 0h2.26M188.87 272h2.26m1.74 0h2.26m4.74 0h2.26m2.74 0h2.26m4.74 0h2.26m3.74 0h2.26m3.74 0h2.26m3.74 0h2.26m3.74 0h2.26m3.74 0h2.26m9.74 0h2.26m9.74 0h2.26m9.74 0h2.26m9.74 0h2.26m2.74 0h2.26m16.74 0h2.26m2.74 0h2.26m4.74 0h2.26m2.74 0h2.26m4.74 0h2.26m2.74 0h2.26m16.74 0h2.26m2.74 0h2.26m21.74 0h2.26m9.74 0h2.26m9.74 0h2.26m21.74 0h2.26m3.74 0h2.26m15.74 0h2.26m3.74 0h2.26m3.74 0h2.26m3.74 0h2.26M193.87 273h2.26m9.74 0h2.26m9.74 0h2.26m9.74 0h2.26m9.74 0h2.26m3.74 0h2.26m3.74 0h2.26m3.74 0h2.26m3.74 0h2.26m3.74 0h2.26m3.74 0h2.26m3.74 0h2.26m15.74 0h2.26m3.74 0h2.26m9.74 0h2.26m9.74 0h2.26m21.74 0h2.26m21.74 0h2.26m2.74 0h2.26m4.74 0h2.26m2.74 0h2.26m4.74 0h2.26m2.74 0h2.26m16.74 0h2.26m2.74 0h2.26m21.74 0h2.26m9.74 0h2.26M188.87 274h2.26m2.74 0h2.26m3.74 0h2.26m3.74 0h2.26m3.74 0h2.26m3.74 0h2.26m3.74 0h2.26m3.74 0h2.26m3.74 0h2.26m3.74 0h2.26m3.74 0h2.26m9.74 0h2.26m9.74 0h2.26m21.74 0h2.26m9.74 0h2.26m3.74 0h2.26m3.74 0h2.26m3.74 0h2.26m15.74 0h2.26m3.74 0h2.26m15.74 0h2.26m3.74 0h2.26m9.74 0h2.26m9.74 0h2.26m21.74 0h2.26m21.74 0h2.26m3.74 0h2.26m3.74 0h2.26m3.74 0h2.26M199.87 275h2.26m9.74 0h2.26m9.74 0h2.26m9.74 0h2.26m9.74 0h2.26m3.74 0h2.26m3.74 0h2.26m3.74 0h2.26m15.74 0h2.26m3.74 0h2.26m3.74 0h2.26m3.74 0h2.26m3.74 0h2.26m3.74 0h2.26m21.74 0h2.26m21.74 0h2.26m10.74 0h2.26m2.74 0h2.26m4.74 0h2.26m2.74 0h2.26m16.74 0h2.26m2.74 0h2.26m16.74 0h2.26m2.74 0h2.26m9.74 0h2.26M193.87 276h2.26m3.74 0h2.26m3.74 0h2.26m3.74 0h2.26m3.74 0h2.26m3.74 0h2.26m3.74 0h2.26m3.74 0h2.26m3.74 0h2.26m3.74 0h2.26m3.74 0h2.26m21.74 0h2.26m9.74 0h2.26m10.74 0h2.26m21.74 0h2.26m3.74 0h2.26m15.74 0h2.26m3.74 0h2.26m3.74 0h2.26m3.74 0h2.26m3.74 0h2.26m3.74 0h2.26m21.74 0h2.26m21.74 0h2.26m9.74 0h2.26m3.74 0h2.26M188.87 277h2.26m2.74 0h2.26m9.74 0h2.26m9.74 0h2.26m9.74 0h2.26m9.74 0h2.26m21.74 0h2.26m3.74 0h2.26m4.74 0h2.26m3.74 0h2.26m3.74 0h2.26m3.74 0h2.26m15.74 0h2.26m3.74 0h2.26m21.74 0h2.26m9.74 0h2.26m9.74 0h2.26m21.74 0h2.26m3.74 0h2.26m16.74 0h2.26m2.74 0h2.26m4.74 0h2.26m2.74 0h2.26M193.87 278h2.26m3.74 0h2.26m3.74 0h2.26m3.74 0h2.26m3.74 0h2.26m3.74 0h2.26m3.74 0h2.26m3.74 0h2.26m16.74 0h2.26m3.74 0h2.26m9.74 0h2.26m9.74 0h2.26m21.74 0h2.26m21.74 0h2.26m3.74 0h2.26m3.74 0h2.26m3.74 0h2.26m4.74 0h2.26m2.74 0h2.26m16.74 0h2.26m3.74 0h2.26m21.74 0h2.26m9.74 0h2.26M188.87 279h2.26m2.74 0h2.26m3.74 0h2.26m9.74 0h2.26m9.74 0h2.26m22.74 0h2.26m9.74 0h2.26m3.74 0h2.26m3.74 0h2.26m3.74 0h2.26m15.74 0h2.26m3.74 0h2.26m16.74 0h2.26m2.74 0h2.26m10.74 0h2.26m9.74 0h2.26m21.74 0h2.26m21.74 0h2.26m3.74 0h2.26m3.74 0h2.26m3.74 0h2.26M199.87 280h2.26m3.74 0h2.26m3.74 0h2.26m3.74 0h2.26m16.74 0h2.26m3.74 0h2.26m3.74 0h2.26m3.74 0h2.26m3.74 0h2.26m3.74 0h2.26m21.74 0h2.26m22.74 0h2.26m9.74 0h2.26m3.74 0h2.26m3.74 0h2.26m3.74 0h2.26m15.74 0h2.26m3.74 0h2.26m16.74 0h2.26m3.74 0h2.26m9.74 0h2.26M193.87 281h2.26m9.74 0h2.26m22.74 0h2.26m9.74 0h2.26m9.74 0h2.26m21.74 0h2.26m3.74 0h2.26m16.74 0h2.26m3.74 0h2.26m3.74 0h2.26m3.74 0h2.26m3.74 0h2.26m3.74 0h2.26m22.74 0h2.26m21.74 0h2.26m9.74 0h2.26m3.74 0h2.26M188.87 282h2.26m2.74 0h2.26m3.74 0h2.26m15.74 0h2.26m4.74 0h2.26m3.74 0h2.26m3.74 0h2.26m3.74 0h2.26m3.74 0h2.26m21.74 0h2.26m22.74 0h2.26m9.74 0h2.26m9.74 0h2.26m22.74 0h2.26m3.74 0h2.26m15.74 0h2.26m3.74 0h2.26m3.74 0h2.26m3.74 0h2.26M211.87 283h2.26m10.74 0h2.26m9.74 0h2.26m21.74 0h2.26m3.74 0h2.26m16.74 0h2.26m3.74 0h2.26m3.74 0h2.26m3.74 0h2.26m4.74 0h2.26m2.74 0h2.26m22.74 0h2.26m21.74 0h2.26m10.74 0h2.26M199.87 284h2.26m3.74 0h2.26m3.74 0h2.26m4.74 0h2.26m3.74 0h2.26m3.74 0h2.26m15.74 0h2.26m3.74 0h2.26m22.74 0h2.26m9.74 0h2.26m10.74 0h2.26m21.74 0h2.26m3.74 0h2.26m16.74 0h2.26m3.74 0h2.26m3.74 0h2.26m3.74 0h2.26M188.87 285h2.26m2.74 0h2.26m9.74 0h2.26m10.74 0h2.26m21.74 0h2.26m22.74 0h2.26m3.74 0h2.26m3.74 0h2.26m3.74 0h2.26m4.74 0h2.26m3.74 0h2.26m15.74 0h2.26m3.74 0h2.26m22.74 0h2.26m9.74 0h2.26M193.87 286h2.26m3.74 0h2.26m3.74 0h2.26m4.74 0h2.26m15.74 0h2.26m3.74 0h2.26m22.74 0h2.26m9.74 0h2.26m10.74 0h2.26m21.74 0h2.26m22.74 0h2.26m3.74 0h2.26m3.74 0h2.26m3.74 0h2.26M199.87 287h2.26m22.74 0h2.26m22.74 0h2.26m3.74 0h2.26m3.74 0h2.26m3.74 0h2.26m4.74 0h2.26m3.74 0h2.26m15.74 0h2.26m3.74 0h2.26m22.74 0h2.26m9.74 0h2.26M188.87 288h2.26m2.74 0h2.26m16.74 0h2.26m3.74 0h2.26m16.74 0h2.26m3.74 0h2.26m9.74 0h2.26m9.74 0h2.26m22.74 0h2.26m22.74 0h2.26m3.74 0h2.26m3.74 0h2.26m3.74 0h2.26M206.87 289h2.26m21.74 0h2.26m10.74 0h2.26m3.74 0h2.26m3.74 0h2.26m3.74 0h2.26m16.74 0h2.26m3.74 0h2.26m22.74 0h2.26m9.74 0h2.26M188.87 290h2.26m2.74 0h2.26m3.74 0h2.26m16.74 0h2.26m3.74 0h2.26m10.74 0h2.26m9.74 0h2.26m22.74 0h2.26m22.74 0h2.26m3.74 0h2.26m3.74 0h2.26m3.74 0h2.26M212.87 291h2.26m9.74 0h2.26m4.74 0h2.26m3.74 0h2.26m3.74 0h2.26m16.74 0h2.26m3.74 0h2.26m16.74 0h2.26m3.74 0h2.26m9.74 0h2.26M200.87 292h2.26m3.74 0h2.26m9.74 0h2.26m10.74 0h2.26m22.74 0h2.26m22.74 0h2.26m9.74 0h2.26m3.74 0h2.26M188.87 293h2.26m2.74 0h2.26m10.74 0h2.26m3.74 0h2.26m3.74 0h2.26m4.74 0h2.26m15.74 0h2.26m4.74 0h2.26m15.74 0h2.26m4.74 0h2.26m9.74 0h2.26M200.87 294h2.26m9.74 0h2.26m22.74 0h2.26m22.74 0h2.26m10.74 0h2.26m3.74 0h2.26M193.87 295h2.26m4.74 0h2.26m3.74 0h2.26m16.74 0h2.26m3.74 0h2.26m22.74 0h2.26m10.74 0h2.26M188.87 296h2.26m3.74 0h2.26m22.74 0h2.26m22.74 0h2.26m3.74 0h2.26m3.74 0h2.26m4.74 0h2.26M206.87 297h2.26m3.74 0h2.26m23.74 0h2.26m9.74 0h2.26M200.87 298h2.26m22.74 0h2.26m3.74 0h2.26m4.74 0h2.26m3.74 0h2.26M189.87 299h2.26m2.74 0h2.26m22.74 0h2.26m10.74 0h2.26M206.87 300h2.26m4.74 0h2.26m3.74 0h2.26m3.74 0h2.26M200.87 301h2.26m10.74 0h2.26M189.87 302h2.26m2.74 0h2.26m3.74 0h2.26m3.74 0h2.26M194.87 303h2.26" fill="none" stroke="#595959" stroke-width="2.15"/><path d="M486.9 272h2.2M480.9 273h2.2M469.9 274h2.2m3.8 0h2.2M463.9 275h2.2m21.8 0h2.2M452.9 276h2.2m3.8 0h2.2m15.8 0h2.2m3.8 0h2.2M441.9 277h2.2m2.8 0h2.2m22.8 0h2.2M435.9 278h2.2m21.8 0h2.2m3.8 0h2.2m15.8 0h2.2m3.8 0h2.2M424.9 279h2.2m2.8 0h2.2m16.8 0h2.2m3.8 0h2.2m21.8 0h2.2m9.8 0h2.2M418.9 280h2.2m21.8 0h2.2m21.8 0h2.2m3.8 0h2.2m4.8 0h2.2m2.8 0h2.2m4.8 0h2.2M406.9 281h2.2m3.8 0h2.2m16.8 0h2.2m2.8 0h2.2m16.8 0h2.2m3.8 0h2.2m9.8 0h2.2m9.8 0h2.2M395.9 282h2.2m3.8 0h2.2m21.8 0h2.2m21.8 0h2.2m9.8 0h2.2m3.8 0h2.2m4.8 0h2.2m2.8 0h2.2M389.9 283h2.2m21.8 0h2.2m3.8 0h2.2m16.8 0h2.2m3.8 0h2.2m3.8 0h2.2m3.8 0h2.2m9.8 0h2.2m21.8 0h2.2M377.9 284h2.2m3.8 0h2.2m22.8 0h2.2m21.8 0h2.2m9.8 0h2.2m9.8 0h2.2m3.8 0h2.2m16.8 0h2.2m3.8 0h2.2M371.9 285h2.2m22.8 0h2.2m3.8 0h2.2m15.8 0h2.2m3.8 0h2.2m4.8 0h2.2m2.8 0h2.2m4.8 0h2.2m3.8 0h2.2m21.8 0h2.2M360.9 286h2.2m2.8 0h2.2m16.8 0h2.2m3.8 0h2.2m22.8 0h2.2m9.8 0h2.2m9.8 0h2.2m22.8 0h2.2m3.8 0h2.2m15.8 0h2.2m3.8 0h2.2M354.9 287h2.2m21.8 0h2.2m22.8 0h2.2m3.8 0h2.2m3.8 0h2.2m3.8 0h2.2m4.8 0h2.2m2.8 0h2.2m22.8 0h2.2m22.8 0h2.2M342.9 288h2.2m3.8 0h2.2m15.8 0h2.2m3.8 0h2.2m22.8 0h2.2m9.8 0h2.2m10.8 0h2.2m21.8 0h2.2m3.8 0h2.2m16.8 0h2.2m3.8 0h2.2m16.8 0h2.2M336.9 289h2.2m21.8 0h2.2m22.8 0h2.2m3.8 0h2.2m4.8 0h2.2m3.8 0h2.2m3.8 0h2.2m3.8 0h2.2m22.8 0h2.2m21.8 0h2.2m22.8 0h2.2M324.9 290h2.2m3.8 0h2.2m16.8 0h2.2m3.8 0h2.2m21.8 0h2.2m10.8 0h2.2m9.8 0h2.2m22.8 0h2.2m3.8 0h2.2m16.8 0h2.2m2.8 0h2.2m16.8 0h2.2m3.8 0h2.2M318.9 291h2.2m22.8 0h2.2m21.8 0h2.2m3.8 0h2.2m4.8 0h2.2m3.8 0h2.2m3.8 0h2.2m3.8 0h2.2m16.8 0h2.2m3.8 0h2.2m22.8 0h2.2m22.8 0h2.2m21.8 0h2.2M306.9 292h2.2m3.8 0h2.2m16.8 0h2.2m3.8 0h2.2m21.8 0h2.2m10.8 0h2.2m9.8 0h2.2m22.8 0h2.2m22.8 0h2.2m3.8 0h2.2m16.8 0h2.2m3.8 0h2.2m22.8 0h2.2M300.9 293h2.2m22.8 0h2.2m22.8 0h2.2m3.8 0h2.2m3.8 0h2.2m3.8 0h2.2m3.8 0h2.2m3.8 0h2.2m16.8 0h2.2m3.8 0h2.2m22.8 0h2.2m22.8 0h2.2m22.8 0h2.2m3.8 0h2.2M287.9 294h2.2m3.8 0h2.2m16.8 0h2.2m3.8 0h2.2m22.8 0h2.2m10.8 0h2.2m9.8 0h2.2m22.8 0h2.2m22.8 0h2.2m3.8 0h2.2m16.8 0h2.2m3.8 0h2.2m22.8 0h2.2m22.8 0h2.2M281.9 295h2.2m22.8 0h2.2m22.8 0h2.2m3.8 0h2.2m4.8 0h2.2m3.8 0h2.2m3.8 0h2.2m3.8 0h2.2m17.8 0h2.2m3.8 0h2.2m22.8 0h2.2m22.8 0h2.2m22.8 0h2.2m2.8 0h2.2m17.8 0h2.2m2.8 0h2.2M269.9 296h2.2m3.8 0h2.2m16.8 0h2.2m3.8 0h2.2m22.8 0h2.2m10.8 0h2.2m9.8 0h2.2m23.8 0h2.2m22.8 0h2.2m3.8 0h2.2m16.8 0h2.2m3.8 0h2.2m22.8 0h2.2m22.8 0h2.2M263.9 297h2.2m22.8 0h2.2m22.8 0h2.2m3.8 0h2.2m4.8 0h2.2m3.8 0h2.2m3.8 0h2.2m3.8 0h2.2m23.8 0h2.2m22.8 0h2.2m22.8 0h2.2m22.8 0h2.2m3.8 0h2.2m16.8 0h2.2m3.8 0h2.2m22.8 0h2.2M250.9 298h2.2m4.8 0h2.2m16.8 0h2.2m3.8 0h2.2m22.8 0h2.2m10.8 0h2.2m9.8 0h2.2m22.8 0h2.2m4.8 0h2.2m16.8 0h2.2m3.8 0h2.2m16.8 0h2.2m3.8 0h2.2m22.8 0h2.2m22.8 0h2.2m22.8 0h2.2m3.8 0h2.2M244.9 299h2.2m23.8 0h2.2m22.8 0h2.2m3.8 0h2.2m3.8 0h2.2m4.8 0h2.2m3.8 0h2.2m3.8 0h2.2m22.8 0h2.2m23.8 0h2.2m22.8 0h2.2m22.8 0h2.2m3.8 0h2.2m16.8 0h2.2m3.8 0h2.2m22.8 0h2.2M232.9 300h2.2m3.8 0h2.2m22.8 0h2.2m23.8 0h2.2m9.8 0h2.2m10.8 0h2.2m22.8 0h2.2m3.8 0h2.2m17.8 0h2.2m3.8 0h2.2m22.8 0h2.2m22.8 0h2.2m22.8 0h2.2m23.8 0h2.2m2.8 0h2.2m17.8 0h2.2m3.8 0h2.2M225.9 301h2.2m23.8 0h2.2m3.8 0h2.2m16.8 0h2.2m3.8 0h2.2m4.8 0h2.2m3.8 0h2.2m4.8 0h2.2m3.8 0h2.2m22.8 0h2.2m22.8 0h2.2m23.8 0h2.2m3.8 0h2.2m16.8 0h2.2m3.8 0h2.2m16.8 0h2.2m3.8 0h2.2m23.8 0h2.2m22.8 0h2.2M213.9 302h2.2m3.8 0h2.2m23.8 0h2.2m22.8 0h2.2m10.8 0h2.2m9.8 0h2.2m23.8 0h2.2m3.8 0h2.2m16.8 0h2.2m3.8 0h2.2m23.8 0h2.2m22.8 0h2.2m22.8 0h2.2m23.8 0h2.2m3.8 0h2.2m16.8 0h2.2m3.8 0h2.2M207.9 303h2.2m22.8 0h2.2m3.8 0h2.2m17.8 0h2.2m3.8 0h2.2m3.8 0h2.2m4.8 0h2.2m9.8 0h2.2m23.8 0h2.2m22.8 0h2.2m23.8 0h2.2m3.8 0h2.2m16.8 0h2.2m3.8 0h2.2m22.8 0h2.2m23.8 0h2.2m22.8 0h2.2m23.8 0h2.2m2.8 0h2.2M200.9 304h2.2m23.8 0h2.2m22.8 0h2.2m10.8 0h2.2m10.8 0h2.2m3.8 0h2.2m16.8 0h2.2m4.8 0h2.2m22.8 0h2.2m22.8 0h2.2m23.8 0h2.2m22.8 0h2.2m3.8 0h2.2m17.8 0h2.2m3.8 0h2.2m22.8 0h2.2m23.8 0h2.2M189.9 305h2.2m2.8 0h2.2m16.8 0h2.2m3.8 0h2.2m23.8 0h2.2m10.8 0h2.2m10.8 0h2.2m22.8 0h2.2m23.8 0h2.2m3.8 0h2.2m16.8 0h2.2m3.8 0h2.2m23.8 0h2.2m22.8 0h2.2m23.8 0h2.2m22.8 0h2.2m3.8 0h2.2m17.8 0h2.2m3.8 0h2.2M207.9 306h2.2m22.8 0h2.2m4.8 0h2.2m3.8 0h2.2m4.8 0h2.2m3.8 0h2.2m3.8 0h2.2m17.8 0h2.2m3.8 0h2.2m22.8 0h2.2m23.8 0h2.2m23.8 0h2.2m3.8 0h2.2m16.8 0h2.2m3.8 0h2.2m23.8 0h2.2m22.8 0h2.2m23.8 0h2.2m22.8 0h2.2m3.8 0h2.2M200.9 307h2.2m23.8 0h2.2m10.8 0h2.2m10.8 0h2.2m22.8 0h2.2m23.8 0h2.2m3.8 0h2.2m17.8 0h2.2m3.8 0h2.2m22.8 0h2.2m23.8 0h2.2m23.8 0h2.2m3.8 0h2.2m16.8 0h2.2m3.8 0h2.2m17.8 0h2.2m3.8 0h2.2m22.8 0h2.2M189.9 308h2.2m2.8 0h2.2m16.8 0h2.2m4.8 0h2.2m3.8 0h2.2m4.8 0h2.2m3.8 0h2.2m3.8 0h2.2m23.8 0h2.2m23.8 0h2.2m22.8 0h2.2m23.8 0h2.2m3.8 0h2.2m17.8 0h2.2m3.8 0h2.2m23.8 0h2.2m22.8 0h2.2m23.8 0h2.2m22.8 0h2.2m3.8 0h2.2M207.9 309h2.2m10.8 0h2.2m10.8 0h2.2m23.8 0h2.2m3.8 0h2.2m16.8 0h2.2m4.8 0h2.2m22.8 0h2.2m23.8 0h2.2m23.8 0h2.2m22.8 0h2.2m3.8 0h2.2m17.8 0h2.2m3.8 0h2.2m23.8 0h2.2m22.8 0h2.2m23.8 0h2.2m3.8 0h2.2M189.9 310h2.2m2.8 0h2.2m4.8 0h2.2m9.8 0h2.2m10.8 0h2.2m23.8 0h2.2m23.8 0h2.2m23.8 0h2.2m3.8 0h2.2m17.8 0h2.2m3.8 0h2.2m23.8 0h2.2m22.8 0h2.2m23.8 0h2.2m23.8 0h2.2m3.8 0h2.2m16.8 0h2.2m3.8 0h2.2m23.8 0h2.2M201.9 311h2.2m3.8 0h2.2m4.8 0h2.2m3.8 0h2.2m16.8 0h2.2m4.8 0h2.2m23.8 0h2.2m23.8 0h2.2m22.8 0h2.2m23.8 0h2.2m3.8 0h2.2m17.8 0h2.2m3.8 0h2.2m23.8 0h2.2m23.8 0h2.2m22.8 0h2.2m23.8 0h2.2m3.8 0h2.2m17.8 0h2.2M194.9 312h2.2m10.8 0h2.2m23.8 0h2.2m23.8 0h2.2m3.8 0h2.2m17.8 0h2.2m3.8 0h2.2m23.8 0h2.2m23.8 0h2.2m23.8 0h2.2m23.8 0h2.2m3.8 0h2.2m16.8 0h2.2m4.8 0h2.2m22.8 0h2.2m23.8 0h2.2m23.8 0h2.2M189.9 313h2.2m2.8 0h2.2m4.8 0h2.2m23.8 0h2.2m23.8 0h2.2m23.8 0h2.2m23.8 0h2.2m3.8 0h2.2m16.8 0h2.2m4.8 0h2.2m23.8 0h2.2m22.8 0h2.2m23.8 0h2.2m23.8 0h2.2m3.8 0h2.2m17.8 0h2.2m3.8 0h2.2m23.8 0h2.2M214.9 314h2.2m3.8 0h2.2m17.8 0h2.2m3.8 0h2.2m23.8 0h2.2m23.8 0h2.2m23.8 0h2.2m23.8 0h2.2m3.8 0h2.2m17.8 0h2.2m3.8 0h2.2m23.8 0h2.2m23.8 0h2.2m23.8 0h2.2m23.8 0h2.2m3.8 0h2.2M207.9 315h2.2m23.8 0h2.2m23.8 0h2.2m4.8 0h2.2m23.8 0h2.2m23.8 0h2.2m23.8 0h2.2m23.8 0h2.2m23.8 0h2.2m3.8 0h2.2m23.8 0h2.2m23.8 0h2.2m23.8 0h2.2m23.8 0h2.2m3.8 0h2.2M201.9 316h2.2m23.8 0h2.2m23.8 0h2.2m23.8 0h2.2m4.8 0h2.2m16.8 0h2.2m4.8 0h2.2m23.8 0h2.2m23.8 0h2.2m23.8 0h2.2m23.8 0h2.2m3.8 0h2.2m17.8 0h2.2m3.8 0h2.2m23.8 0h2.2m23.8 0h2.2M189.9 317h2.2m2.8 0h2.2m17.8 0h2.2m4.8 0h2.2m23.8 0h2.2m23.8 0h2.2m23.8 0h2.2m23.8 0h2.2m3.8 0h2.2m17.8 0h2.2m3.8 0h2.2m23.8 0h2.2m23.8 0h2.2m24.8 0h2.2m23.8 0h2.2m3.8 0h2.2m17.8 0h2.2m3.8 0h2.2M208.9 318h2.2m23.8 0h2.2m3.8 0h2.2m17.8 0h2.2m3.8 0h2.2m24.8 0h2.2m23.8 0h2.2m23.8 0h2.2m23.8 0h2.2m3.8 0h2.2m17.8 0h2.2m3.8 0h2.2m23.8 0h2.2m23.8 0h2.2m24.8 0h2.2m23.8 0h2.2m3.8 0h2.2M201.9 319h2.2m23.8 0h2.2m24.8 0h2.2m23.8 0h2.2m3.8 0h2.2m17.8 0h2.2m3.8 0h2.2m24.8 0h2.2m23.8 0h2.2m23.8 0h2.2m23.8 0h2.2m3.8 0h2.2m17.8 0h2.2m3.8 0h2.2m23.8 0h2.2m24.8 0h2.2M189.9 320h2.2m3.8 0h2.2m23.8 0h2.2m23.8 0h2.2m23.8 0h2.2m24.8 0h2.2m23.8 0h2.2m3.8 0h2.2m17.8 0h2.2m3.8 0h2.2m24.8 0h2.2m23.8 0h2.2m23.8 0h2.2m23.8 0h2.2m3.8 0h2.2m23.8 0h2.2M208.9 321h2.2m3.8 0h2.2m17.8 0h2.2m4.8 0h2.2m23.8 0h2.2m23.8 0h2.2m24.8 0h2.2m23.8 0h2.2m23.8 0h2.2m3.8 0h2.2m24.8 0h2.2m23.8 0h2.2m23.8 0h2.2m23.8 0h2.2m3.8 0h2.2m17.8 0h2.2m4.8 0h2.2M201.9 322h2.2m24.8 0h2.2m23.8 0h2.2m3.8 0h2.2m17.8 0h2.2m4.8 0h2.2m23.8 0h2.2m23.8 0h2.2m24.8 0h2.2m23.8 0h2.2m3.8 0h2.2m17.8 0h2.2m4.8 0h2.2m23.8 0h2.2m23.8 0h2.2m23.8 0h2.2M189.9 323h2.2m3.8 0h2.2m23.8 0h2.2m24.8 0h2.2m23.8 0h2.2m23.8 0h2.2m4.8 0h2.2m17.8 0h2.2m3.8 0h2.2m23.8 0h2.2m24.8 0h2.2m23.8 0h2.2m23.8 0h2.2m4.8 0h2.2m17.8 0h2.2m3.8 0h2.2m23.8 0h2.2M208.9 324h2.2m4.8 0h2.2m23.8 0h2.2m23.8 0h2.2m24.8 0h2.2m23.8 0h2.2m24.8 0h2.2m3.8 0h2.2m23.8 0h2.2m24.8 0h2.2m23.8 0h2.2m24.8 0h2.2m23.8 0h2.2m3.8 0h2.2m23.8 0h2.2M201.9 325h2.2m24.8 0h2.2m3.8 0h2.2m17.8 0h2.2m4.8 0h2.2m23.8 0h2.2m24.8 0h2.2m23.8 0h2.2m24.8 0h2.2m3.8 0h2.2m17.8 0h2.2m4.8 0h2.2m23.8 0h2.2m23.8 0h2.2m24.8 0h2.2m23.8 0h2.2m3.8 0h2.2M189.9 326h2.2m3.8 0h2.2m23.8 0h2.2m24.8 0h2.2m24.8 0h2.2m3.8 0h2.2m17.8 0h2.2m3.8 0h2.2m24.8 0h2.2m24.8 0h2.2m23.8 0h2.2m23.8 0h2.2m4.8 0h2.2m17.8 0h2.2m3.8 0h2.2m24.8 0h2.2m23.8 0h2.2M215.9 327h2.2m23.8 0h2.2m24.8 0h2.2m24.8 0h2.2m23.8 0h2.2m4.8 0h2.2m23.8 0h2.2m24.8 0h2.2m23.8 0h2.2m24.8 0h2.2m23.8 0h2.2m3.8 0h2.2m24.8 0h2.2m23.8 0h2.2M202.9 328h2.2m3.8 0h2.2m17.8 0h2.2m4.8 0h2.2m23.8 0h2.2m24.8 0h2.2m24.8 0h2.2m23.8 0h2.2m4.8 0h2.2m17.8 0h2.2m3.8 0h2.2m24.8 0h2.2m23.8 0h2.2m24.8 0h2.2m24.8 0h2.2m3.8 0h2.2m17.8 0h2.2m3.8 0h2.2M190.9 329h2.2m2.8 0h2.2m24.8 0h2.2m23.8 0h2.2m4.8 0h2.2m24.8 0h2.2m23.8 0h2.2m24.8 0h2.2m24.8 0h2.2m23.8 0h2.2m4.8 0h2.2m23.8 0h2.2m24.8 0h2.2m23.8 0h2.2m24.8 0h2.2M215.9 330h2.2m24.8 0h2.2m24.8 0h2.2m3.8 0h2.2m17.8 0h2.2m4.8 0h2.2m23.8 0h2.2m24.8 0h2.2m24.8 0h2.2m24.8 0h2.2m3.8 0h2.2m17.8 0h2.2m3.8 0h2.2m24.8 0h2.2m24.8 0h2.2m23.8 0h2.2M208.9 331h2.2m24.8 0h2.2m24.8 0h2.2m24.8 0h2.2m24.8 0h2.2m3.8 0h2.2m24.8 0h2.2m23.8 0h2.2m24.8 0h2.2m24.8 0h2.2m24.8 0h2.2m3.8 0h2.2m24.8 0h2.2m23.8 0h2.2M190.9 332h2.2m2.8 0h2.2m4.8 0h2.2m17.8 0h2.2m4.8 0h2.2m23.8 0h2.2m24.8 0h2.2m24.8 0h2.2m24.8 0h2.2m3.8 0h2.2m18.8 0h2.2m3.8 0h2.2m24.8 0h2.2m24.8 0h2.2m23.8 0h2.2m24.8 0h2.2m3.8 0h2.2m18.8 0h2.2m3.8 0h2.2M215.9 333h2.2m24.8 0h2.2m4.8 0h2.2m24.8 0h2.2m24.8 0h2.2m23.8 0h2.2m24.8 0h2.2m24.8 0h2.2m3.8 0h2.2m24.8 0h2.2m24.8 0h2.2m24.8 0h2.2m24.8 0h2.2m23.8 0h2.2M209.9 334h2.2m24.8 0h2.2m24.8 0h2.2m3.8 0h2.2m17.8 0h2.2m4.8 0h2.2m24.8 0h2.2m24.8 0h2.2m24.8 0h2.2m24.8 0h2.2m3.8 0h2.2m17.8 0h2.2m4.8 0h2.2m24.8 0h2.2m23.8 0h2.2m24.8 0h2.2M202.9 335h2.2m24.8 0h2.2m24.8 0h2.2m24.8 0h2.2m24.8 0h2.2m3.8 0h2.2m24.8 0h2.2m24.8 0h2.2m24.8 0h2.2m24.8 0h2.2m24.8 0h2.2m3.8 0h2.2m24.8 0h2.2m24.8 0h2.2M190.9 336h2.2m2.8 0h2.2m24.8 0h2.2m24.8 0h2.2m24.8 0h2.2m24.8 0h2.2m24.8 0h2.2m4.8 0h2.2m24.8 0h2.2m24.8 0h2.2m24.8 0h2.2m24.8 0h2.2m24.8 0h2.2m3.8 0h2.2m24.8 0h2.2M209.9 337h2.2m4.8 0h2.2m17.8 0h2.2m4.8 0h2.2m24.8 0h2.2m24.8 0h2.2m24.8 0h2.2m24.8 0h2.2m3.8 0h2.2m18.8 0h2.2m3.8 0h2.2m24.8 0h2.2m24.8 0h2.2m24.8 0h2.2m24.8 0h2.2m3.8 0h2.2m24.8 0h2.2M202.9 338h2.2m24.8 0h2.2m24.8 0h2.2m4.8 0h2.2m24.8 0h2.2m24.8 0h2.2m24.8 0h2.2m24.8 0h2.2m24.8 0h2.2m4.8 0h2.2m24.8 0h2.2m24.8 0h2.2m24.8 0h2.2m24.8 0h2.2m3.8 0h2.2M190.9 339h2.2m2.8 0h2.2m25.8 0h2.2m24.8 0h2.2m24.8 0h2.2m4.8 0h2.2m24.8 0h2.2m24.8 0h2.2m24.8 0h2.2m24.8 0h2.2m24.8 0h2.2m3.8 0h2.2m25.8 0h2.2m24.8 0h2.2m24.8 0h2.2M216.9 340h2.2m24.8 0h2.2m24.8 0h2.2m24.8 0h2.2m4.8 0h2.2m18.8 0h2.2m3.8 0h2.2m24.8 0h2.2m25.8 0h2.2m24.8 0h2.2m24.8 0h2.2m3.8 0h2.2m18.8 0h2.2m3.8 0h2.2m24.8 0h2.2M202.9 341h2.2m4.8 0h2.2m24.8 0h2.2m25.8 0h2.2m24.8 0h2.2m24.8 0h2.2m24.8 0h2.2m4.8 0h2.2m24.8 0h2.2m24.8 0h2.2m24.8 0h2.2m25.8 0h2.2m24.8 0h2.2m3.8 0h2.2M190.9 342h2.2m3.8 0h2.2m24.8 0h2.2m4.8 0h2.2m24.8 0h2.2m24.8 0h2.2m24.8 0h2.2m25.8 0h2.2m24.8 0h2.2m4.8 0h2.2m24.8 0h2.2m24.8 0h2.2m24.8 0h2.2m24.8 0h2.2M216.9 343h2.2m24.8 0h2.2m4.8 0h2.2m25.8 0h2.2m24.8 0h2.2m24.8 0h2.2m24.8 0h2.2m25.8 0h2.2m3.8 0h2.2m25.8 0h2.2m24.8 0h2.2m24.8 0h2.2M209.9 344h2.2m25.8 0h2.2m24.8 0h2.2m4.8 0h2.2m18.8 0h2.2m3.8 0h2.2m25.8 0h2.2m24.8 0h2.2m24.8 0h2.2m25.8 0h2.2m3.8 0h2.2m18.8 0h2.2m3.8 0h2.2m25.8 0h2.2M202.9 345h2.2m25.8 0h2.2m24.8 0h2.2m25.8 0h2.2m24.8 0h2.2m4.8 0h2.2m24.8 0h2.2m25.8 0h2.2m24.8 0h2.2m24.8 0h2.2m25.8 0h2.2m3.8 0h2.2M190.9 346h2.2m3.8 0h2.2m24.8 0h2.2m25.8 0h2.2m24.8 0h2.2m25.8 0h2.2m24.8 0h2.2m4.8 0h2.2m24.8 0h2.2m25.8 0h2.2m24.8 0h2.2m24.8 0h2.2M210.9 347h2.2m3.8 0h2.2m25.8 0h2.2m24.8 0h2.2m25.8 0h2.2m24.8 0h2.2m25.8 0h2.2m4.8 0h2.2m24.8 0h2.2m24.8 0h2.2m25.8 0h2.2M203.9 348h2.2m24.8 0h2.2m4.8 0h2.2m25.8 0h2.2m24.8 0h2.2m25.8 0h2.2m24.8 0h2.2m25.8 0h2.2m3.8 0h2.2m25.8 0h2.2m24.8 0h2.2M190.9 349h2.2m3.8 0h2.2m24.8 0h2.2m25.8 0h2.2m4.8 0h2.2m24.8 0h2.2m25.8 0h2.2m25.8 0h2.2m24.8 0h2.2m25.8 0h2.2m3.8 0h2.2m25.8 0h2.2M217.9 350h2.2m24.8 0h2.2m25.8 0h2.2m4.8 0h2.2m24.8 0h2.2m25.8 0h2.2m25.8 0h2.2m24.8 0h2.2m25.8 0h2.2m3.8 0h2.2M210.9 351h2.2m24.8 0h2.2m25.8 0h2.2m25.8 0h2.2m4.8 0h2.2m24.8 0h2.2m25.8 0h2.2m25.8 0h2.2m24.8 0h2.2M203.9 352h2.2m25.8 0h2.2m24.8 0h2.2m25.8 0h2.2m25.8 0h2.2m4.8 0h2.2m24.8 0h2.2m25.8 0h2.2m25.8 0h2.2M190.9 353h2.2m3.8 0h2.2m25.8 0h2.2m25.8 0h2.2m24.8 0h2.2m25.8 0h2.2m25.8 0h2.2m4.8 0h2.2m24.8 0h2.2m25.8 0h2.2M210.9 354h2.2m4.8 0h2.2m25.8 0h2.2m25.8 0h2.2m24.8 0h2.2m25.8 0h2.2m25.8 0h2.2m4.8 0h2.2m25.8 0h2.2M203.9 355h2.2m25.8 0h2.2m4.8 0h2.2m25.8 0h2.2m25.8 0h2.2m25.8 0h2.2m24.8 0h2.2m25.8 0h2.2m4.8 0h2.2M191.9 356h2.2m2.8 0h2.2m25.8 0h2.2m25.8 0h2.2m4.8 0h2.2m25.8 0h2.2m25.8 0h2.2m25.8 0h2.2m25.8 0h2.2M217.9 357h2.2m25.8 0h2.2m25.8 0h2.2m4.8 0h2.2m25.8 0h2.2m25.8 0h2.2m25.8 0h2.2M210.9 358h2.2m25.8 0h2.2m25.8 0h2.2m25.8 0h2.2m4.8 0h2.2m25.8 0h2.2m25.8 0h2.2M203.9 359h2.2m25.8 0h2.2m25.8 0h2.2m26.8 0h2.2m25.8 0h2.2m3.8 0h2.2m25.8 0h2.2M191.9 360h2.2m2.8 0h2.2m25.8 0h2.2m26.8 0h2.2m25.8 0h2.2m25.8 0h2.2m25.8 0h2.2m4.8 0h2.2M210.9 361h2.2m4.8 0h2.2m26.8 0h2.2m25.8 0h2.2m25.8 0h2.2m25.8 0h2.2M203.9 362h2.2m26.8 0h2.2m4.8 0h2.2m25.8 0h2.2m25.8 0h2.2m25.8 0h2.2M191.9 363h2.2m2.8 0h2.2m26.8 0h2.2m32.8 0h2.2m25.8 0h2.2m26.8 0h2.2M218.9 364h2.2m25.8 0h2.2m4.8 0h2.2m25.8 0h2.2m26.8 0h2.2M211.9 365h2.2m25.8 0h2.2m25.8 0h2.2m4.8 0h2.2m26.8 0h2.2M204.9 366h2.2m25.8 0h2.2m26.8 0h2.2m25.8 0h2.2m4.8 0h2.2M191.9 367h2.2m3.8 0h2.2m25.8 0h2.2m26.8 0h2.2m25.8 0h2.2M218.9 368h2.2m26.8 0h2.2m25.8 0h2.2M211.9 369h2.2m26.8 0h2.2m25.8 0h2.2M204.9 370h2.2m25.8 0h2.2m26.8 0h2.2M191.9 371h2.2m3.8 0h2.2m25.8 0h2.2m26.8 0h2.2M211.9 372h2.2m4.8 0h2.2m26.8 0h2.2M204.9 373h2.2m33.8 0h2.2M191.9 374h2.2m3.8 0h2.2m26.8 0h2.2m4.8 0h2.2M219.9 375h2.2M211.9 376h2.2M204.9 377h2.2M191.9 378h2.2m3.8 0h2.2" fill="none" stroke="#4c4c4c" stroke-width="2.2"/><path d="M527.9 340h2.2M521.9 341h2.2M509.9 342h2.2m3.8 0h2.2M502.9 343h2.2m24.8 0h2.2M496.9 344h2.2m24.8 0h2.2M490.9 345h2.2m24.8 0h2.2M477.9 346h2.2m3.8 0h2.2m25.8 0h2.2M470.9 347h2.2m25.8 0h2.2m3.8 0h2.2m25.8 0h2.2M464.9 348h2.2m24.8 0h2.2m25.8 0h2.2m3.8 0h2.2M457.9 349h2.2m25.8 0h2.2m25.8 0h2.2M451.9 350h2.2m25.8 0h2.2m24.8 0h2.2m25.8 0h2.2M438.9 351h2.2m4.8 0h2.2m24.8 0h2.2m25.8 0h2.2m24.8 0h2.2M431.9 352h2.2m25.8 0h2.2m4.8 0h2.2m24.8 0h2.2m25.8 0h2.2M425.9 353h2.2m25.8 0h2.2m24.8 0h2.2m4.8 0h2.2m25.8 0h2.2M418.9 354h2.2m25.8 0h2.2m25.8 0h2.2m25.8 0h2.2m3.8 0h2.2m25.8 0h2.2M412.9 355h2.2m25.8 0h2.2m24.8 0h2.2m25.8 0h2.2m25.8 0h2.2m3.8 0h2.2M399.9 356h2.2m3.8 0h2.2m25.8 0h2.2m25.8 0h2.2m25.8 0h2.2m25.8 0h2.2M392.9 357h2.2m25.8 0h2.2m3.8 0h2.2m25.8 0h2.2m25.8 0h2.2m25.8 0h2.2m25.8 0h2.2M385.9 358h2.2m25.8 0h2.2m25.8 0h2.2m4.8 0h2.2m25.8 0h2.2m25.8 0h2.2m25.8 0h2.2M379.9 359h2.2m25.8 0h2.2m25.8 0h2.2m25.8 0h2.2m3.8 0h2.2m25.8 0h2.2m25.8 0h2.2M372.9 360h2.2m25.8 0h2.2m25.8 0h2.2m25.8 0h2.2m25.8 0h2.2m4.8 0h2.2m25.8 0h2.2M358.9 361h2.2m4.8 0h2.2m25.8 0h2.2m25.8 0h2.2m25.8 0h2.2m26.8 0h2.2m31.8 0h2.2m25.8 0h2.2M352.9 362h2.2m31.8 0h2.2m26.8 0h2.2m25.8 0h2.2m25.8 0h2.2m25.8 0h2.2m4.8 0h2.2m25.8 0h2.2M345.9 363h2.2m25.8 0h2.2m4.8 0h2.2m25.8 0h2.2m25.8 0h2.2m25.8 0h2.2m26.8 0h2.2m25.8 0h2.2m3.8 0h2.2M338.9 364h2.2m25.8 0h2.2m26.8 0h2.2m3.8 0h2.2m26.8 0h2.2m25.8 0h2.2m25.8 0h2.2m25.8 0h2.2m25.8 0h2.2M331.9 365h2.2m25.8 0h2.2m26.8 0h2.2m25.8 0h2.2m4.8 0h2.2m25.8 0h2.2m25.8 0h2.2m26.8 0h2.2m25.8 0h2.2M324.9 366h2.2m26.8 0h2.2m25.8 0h2.2m25.8 0h2.2m32.8 0h2.2m26.8 0h2.2m25.8 0h2.2m25.8 0h2.2M317.9 367h2.2m26.8 0h2.2m25.8 0h2.2m26.8 0h2.2m25.8 0h2.2m4.8 0h2.2m25.8 0h2.2m25.8 0h2.2m26.8 0h2.2M304.9 368h2.2m3.8 0h2.2m26.8 0h2.2m25.8 0h2.2m26.8 0h2.2m25.8 0h2.2m26.8 0h2.2m3.8 0h2.2m26.8 0h2.2m25.8 0h2.2m26.8 0h2.2M297.9 369h2.2m25.8 0h2.2m4.8 0h2.2m26.8 0h2.2m25.8 0h2.2m26.8 0h2.2m25.8 0h2.2m32.8 0h2.2m26.8 0h2.2m25.8 0h2.2M290.9 370h2.2m25.8 0h2.2m33.8 0h2.2m25.8 0h2.2m26.8 0h2.2m25.8 0h2.2m26.8 0h2.2m4.8 0h2.2m25.8 0h2.2m26.8 0h2.2M283.9 371h2.2m25.8 0h2.2m26.8 0h2.2m4.8 0h2.2m25.8 0h2.2m26.8 0h2.2m26.8 0h2.2m25.8 0h2.2m26.8 0h2.2m3.8 0h2.2m26.8 0h2.2M276.9 372h2.2m25.8 0h2.2m26.8 0h2.2m26.8 0h2.2m4.8 0h2.2m25.8 0h2.2m26.8 0h2.2m26.8 0h2.2m25.8 0h2.2m32.8 0h2.2m26.8 0h2.2M269.9 373h2.2m25.8 0h2.2m26.8 0h2.2m26.8 0h2.2m32.8 0h2.2m26.8 0h2.2m26.8 0h2.2m25.8 0h2.2m26.8 0h2.2m4.8 0h2.2m25.8 0h2.2M262.9 374h2.2m25.8 0h2.2m26.8 0h2.2m26.8 0h2.2m26.8 0h2.2m4.8 0h2.2m25.8 0h2.2m26.8 0h2.2m26.8 0h2.2m25.8 0h2.2m33.8 0h2.2M255.9 375h2.2m25.8 0h2.2m26.8 0h2.2m26.8 0h2.2m26.8 0h2.2m33.8 0h2.2m25.8 0h2.2m26.8 0h2.2m26.8 0h2.2m26.8 0h2.2m3.8 0h2.2M240.9 376h2.2m4.8 0h2.2m26.8 0h2.2m26.8 0h2.2m26.8 0h2.2m26.8 0h2.2m26.8 0h2.2m4.8 0h2.2m25.8 0h2.2m26.8 0h2.2m26.8 0h2.2m26.8 0h2.2m32.8 0h2.2M233.9 377h2.2m33.8 0h2.2m26.8 0h2.2m26.8 0h2.2m26.8 0h2.2m26.8 0h2.2m33.8 0h2.2m26.8 0h2.2m25.8 0h2.2m26.8 0h2.2m26.8 0h2.2m4.8 0h2.2M226.9 378h2.2m26.8 0h2.2m4.8 0h2.2m26.8 0h2.2m26.8 0h2.2m26.8 0h2.2m26.8 0h2.2m26.8 0h2.2m4.8 0h2.2m26.8 0h2.2m26.8 0h2.2m25.8 0h2.2m26.8 0h2.2M219.9 379h2.2m26.8 0h2.2m33.8 0h2.2m26.8 0h2.2m26.8 0h2.2m26.8 0h2.2m26.8 0h2.2m33.8 0h2.2m26.8 0h2.2m26.8 0h2.2m26.8 0h2.2m26.8 0h2.2M212.9 380h2.2m26.8 0h2.2m26.8 0h2.2m4.8 0h2.2m26.8 0h2.2m26.8 0h2.2m26.8 0h2.2m26.8 0h2.2m26.8 0h2.2m4.8 0h2.2m26.8 0h2.2m26.8 0h2.2m26.8 0h2.2m26.8 0h2.2M204.9 381h2.2m27.8 0h2.2m26.8 0h2.2m33.8 0h2.2m26.8 0h2.2m26.8 0h2.2m26.8 0h2.2m26.8 0h2.2m33.8 0h2.2m26.8 0h2.2m26.8 0h2.2m26.8 0h2.2M191.9 382h2.2m3.8 0h2.2m26.8 0h2.2m27.8 0h2.2m26.8 0h2.2m4.8 0h2.2m26.8 0h2.2m26.8 0h2.2m26.8 0h2.2m26.8 0h2.2m27.8 0h2.2m3.8 0h2.2m26.8 0h2.2m27.8 0h2.2m26.8 0h2.2M219.9 383h2.2m26.8 0h2.2m27.8 0h2.2m33.8 0h2.2m26.8 0h2.2m26.8 0h2.2m27.8 0h2.2m26.8 0h2.2m33.8 0h2.2m26.8 0h2.2m26.8 0h2.2m26.8 0h2.2M212.9 384h2.2m26.8 0h2.2m27.8 0h2.2m26.8 0h2.2m4.8 0h2.2m26.8 0h2.2m26.8 0h2.2m27.8 0h2.2m26.8 0h2.2m33.8 0h2.2m26.8 0h2.2m26.8 0h2.2m26.8 0h2.2M205.9 385h2.2m26.8 0h2.2m26.8 0h2.2m27.8 0h2.2m33.8 0h2.2m26.8 0h2.2m27.8 0h2.2m26.8 0h2.2m26.8 0h2.2m4.8 0h2.2m26.8 0h2.2m26.8 0h2.2m27.8 0h2.2M192.9 386h2.2m2.8 0h2.2m27.8 0h2.2m26.8 0h2.2m27.8 0h2.2m33.8 0h2.2m26.8 0h2.2m27.8 0h2.2m26.8 0h2.2m26.8 0h2.2m33.8 0h2.2m27.8 0h2.2m26.8 0h2.2M219.9 387h2.2m27.8 0h2.2m26.8 0h2.2m27.8 0h2.2m4.8 0h2.2m26.8 0h2.2m27.8 0h2.2m26.8 0h2.2m26.8 0h2.2m34.8 0h2.2m26.8 0h2.2m26.8 0h2.2m26.8 0h2.2M212.9 388h2.2m27.8 0h2.2m26.8 0h2.2m27.8 0h2.2m33.8 0h2.2m27.8 0h2.2m26.8 0h2.2m26.8 0h2.2m27.8 0h2.2m4.8 0h2.2m26.8 0h2.2m26.8 0h2.2m27.8 0h2.2M205.9 389h2.2m26.8 0h2.2m27.8 0h2.2m26.8 0h2.2m34.8 0h2.2m27.8 0h2.2m26.8 0h2.2m26.8 0h2.2m27.8 0h2.2m33.8 0h2.2m27.8 0h2.2m26.8 0h2.2M192.9 390h2.2m3.8 0h2.2m26.8 0h2.2m27.8 0h2.2m26.8 0h2.2m27.8 0h2.2m4.8 0h2.2m26.8 0h2.2m27.8 0h2.2m26.8 0h2.2m27.8 0h2.2m33.8 0h2.2m27.8 0h2.2m26.8 0h2.2M220.9 391h2.2m26.8 0h2.2m27.8 0h2.2m27.8 0h2.2m33.8 0h2.2m27.8 0h2.2m26.8 0h2.2m27.8 0h2.2m26.8 0h2.2m4.8 0h2.2m27.8 0h2.2m26.8 0h2.2m27.8 0h2.2M212.9 392h2.2m27.8 0h2.2m27.8 0h2.2m26.8 0h2.2m34.8 0h2.2m27.8 0h2.2m26.8 0h2.2m27.8 0h2.2m27.8 0h2.2m33.8 0h2.2m27.8 0h2.2m26.8 0h2.2M205.9 393h2.2m27.8 0h2.2m26.8 0h2.2m27.8 0h2.2m34.8 0h2.2m27.8 0h2.2m26.8 0h2.2m27.8 0h2.2m27.8 0h2.2m33.8 0h2.2m27.8 0h2.2m26.8 0h2.2M192.9 394h2.2m3.8 0h2.2m26.8 0h2.2m27.8 0h2.2m27.8 0h2.2m27.8 0h2.2m4.8 0h2.2m27.8 0h2.2m26.8 0h2.2m27.8 0h2.2m27.8 0h2.2m33.8 0h2.2m27.8 0h2.2m26.8 0h2.2M220.9 395h2.2m27.8 0h2.2m27.8 0h2.2m26.8 0h2.2m34.8 0h2.2m27.8 0h2.2m27.8 0h2.2m27.8 0h2.2m33.8 0h2.2m27.8 0h2.2m27.8 0h2.2m26.8 0h2.2M213.9 396h2.2m27.8 0h2.2m26.8 0h2.2m27.8 0h2.2m34.8 0h2.2m27.8 0h2.2m27.8 0h2.2m27.8 0h2.2m26.8 0h2.2m4.8 0h2.2m27.8 0h2.2m27.8 0h2.2m26.8 0h2.2M205.9 397h2.2m27.8 0h2.2m27.8 0h2.2m27.8 0h2.2m34.8 0h2.2m27.8 0h2.2m27.8 0h2.2m27.8 0h2.2m26.8 0h2.2m34.8 0h2.2m27.8 0h2.2m27.8 0h2.2M192.9 398h2.2m3.8 0h2.2m27.8 0h2.2m27.8 0h2.2m27.8 0h2.2m34.8 0h2.2m27.8 0h2.2m27.8 0h2.2m26.8 0h2.2m27.8 0h2.2m34.8 0h2.2m27.8 0h2.2m27.8 0h2.2M220.9 399h2.2m27.8 0h2.2m27.8 0h2.2m35.8 0h2.2m27.8 0h2.2m26.8 0h2.2m27.8 0h2.2m27.8 0h2.2m34.8 0h2.2m27.8 0h2.2m27.8 0h2.2m27.8 0h2.2M213.9 400h2.2m27.8 0h2.2m27.8 0h2.2m27.8 0h2.2m4.8 0h2.2m27.8 0h2.2m27.8 0h2.2m27.8 0h2.2m27.8 0h2.2m34.8 0h2.2m27.8 0h2.2m27.8 0h2.2m27.8 0h2.2M206.9 401h2.2m27.8 0h2.2m27.8 0h2.2m27.8 0h2.2m34.8 0h2.2m27.8 0h2.2m27.8 0h2.2m27.8 0h2.2m34.8 0h2.2m27.8 0h2.2m27.8 0h2.2m27.8 0h2.2M192.9 402h2.2m3.8 0h2.2m27.8 0h2.2m27.8 0h2.2m27.8 0h2.2m35.8 0h2.2m27.8 0h2.2m27.8 0h2.2m27.8 0h2.2m34.8 0h2.2m27.8 0h2.2m27.8 0h2.2m27.8 0h2.2M221.9 403h2.2m27.8 0h2.2m27.8 0h2.2m35.8 0h2.2m27.8 0h2.2m27.8 0h2.2m27.8 0h2.2m27.8 0h2.2m4.8 0h2.2m27.8 0h2.2m27.8 0h2.2m27.8 0h2.2m27.8 0h2.2M213.9 404h2.2m27.8 0h2.2m28.8 0h2.2m34.8 0h2.2m27.8 0h2.2m28.8 0h2.2m27.8 0h2.2m27.8 0h2.2m34.8 0h2.2m27.8 0h2.2m27.8 0h2.2m27.8 0h2.2M206.9 405h2.2m27.8 0h2.2m27.8 0h2.2m35.8 0h2.2m27.8 0h2.2m27.8 0h2.2m28.8 0h2.2m27.8 0h2.2m34.8 0h2.2m27.8 0h2.2m27.8 0h2.2m28.8 0h2.2M192.9 406h2.2m3.8 0h2.2m28.8 0h2.2m27.8 0h2.2m35.8 0h2.2m27.8 0h2.2m27.8 0h2.2m27.8 0h2.2m28.8 0h2.2m34.8 0h2.2m27.8 0h2.2m27.8 0h2.2m28.8 0h2.2M221.9 407h2.2m27.8 0h2.2m35.8 0h2.2m28.8 0h2.2m27.8 0h2.2m27.8 0h2.2m27.8 0h2.2m35.8 0h2.2m27.8 0h2.2m27.8 0h2.2m28.8 0h2.2M214.9 408h2.2m27.8 0h2.2m35.8 0h2.2m27.8 0h2.2m28.8 0h2.2m27.8 0h2.2m27.8 0h2.2m35.8 0h2.2m27.8 0h2.2m27.8 0h2.2m28.8 0h2.2M206.9 409h2.2m27.8 0h2.2m35.8 0h2.2m28.8 0h2.2m27.8 0h2.2m28.8 0h2.2m27.8 0h2.2m35.8 0h2.2m27.8 0h2.2m27.8 0h2.2m28.8 0h2.2M192.9 410h2.2m3.8 0h2.2m28.8 0h2.2m35.8 0h2.2m27.8 0h2.2m28.8 0h2.2m27.8 0h2.2m28.8 0h2.2m34.8 0h2.2m28.8 0h2.2m27.8 0h2.2m28.8 0h2.2M221.9 411h2.2m35.8 0h2.2m28.8 0h2.2m28.8 0h2.2m27.8 0h2.2m28.8 0h2.2m34.8 0h2.2m28.8 0h2.2m27.8 0h2.2m28.8 0h2.2M214.9 412h2.2m35.8 0h2.2m28.8 0h2.2m27.8 0h2.2m28.8 0h2.2m27.8 0h2.2m35.8 0h2.2m28.8 0h2.2m27.8 0h2.2m28.8 0h2.2M206.9 413h2.2m35.8 0h2.2m28.8 0h2.2m28.8 0h2.2m27.8 0h2.2m28.8 0h2.2m35.8 0h2.2m27.8 0h2.2m28.8 0h2.2m27.8 0h2.2M193.9 414h2.2m3.8 0h2.2m35.8 0h2.2m28.8 0h2.2m27.8 0h2.2m28.8 0h2.2m66.8 0h2.2m27.8 0h2.2m28.8 0h2.2m27.8 0h2.2M229.9 415h2.2m28.8 0h2.2m28.8 0h2.2m27.8 0h2.2m36.8 0h2.2m27.8 0h2.2m28.8 0h2.2m28.8 0h2.2m27.8 0h2.2M222.9 416h2.2m28.8 0h2.2m27.8 0h2.2m28.8 0h2.2m35.8 0h2.2m28.8 0h2.2m28.8 0h2.2m27.8 0h2.2m28.8 0h2.2M214.9 417h2.2m28.8 0h2.2m28.8 0h2.2m28.8 0h2.2m35.8 0h2.2m28.8 0h2.2m27.8 0h2.2m28.8 0h2.2m28.8 0h2.2M206.9 418h2.2m28.8 0h2.2m28.8 0h2.2m28.8 0h2.2m35.8 0h2.2m28.8 0h2.2m28.8 0h2.2m28.8 0h2.2m28.8 0h2.2M193.9 419h2.2m3.8 0h2.2m28.8 0h2.2m28.8 0h2.2m28.8 0h2.2m35.8 0h2.2m28.8 0h2.2m28.8 0h2.2m28.8 0h2.2M222.9 420h2.2m28.8 0h2.2m28.8 0h2.2m35.8 0h2.2m28.8 0h2.2m28.8 0h2.2m28.8 0h2.2m35.8 0h2.2M214.9 421h2.2m28.8 0h2.2m67.8 0h2.2m28.8 0h2.2m28.8 0h2.2m28.8 0h2.2m35.8 0h2.2M207.9 422h2.2m28.8 0h2.2m35.8 0h2.2m28.8 0h2.2m29.8 0h2.2m28.8 0h2.2m28.8 0h2.2m35.8 0h2.2M193.9 423h2.2m3.8 0h2.2m28.8 0h2.2m36.8 0h2.2m28.8 0h2.2m28.8 0h2.2m28.8 0h2.2m28.8 0h2.2m36.8 0h2.2M222.9 424h2.2m36.8 0h2.2m28.8 0h2.2m29.8 0h2.2m28.8 0h2.2m66.8 0h2.2M254.9 425h2.2m28.8 0h2.2m28.8 0h2.2m28.8 0h2.2m36.8 0h2.2m28.8 0h2.2M215.9 426h2.2m28.8 0h2.2m28.8 0h2.2m28.8 0h2.2m29.8 0h2.2m35.8 0h2.2m28.8 0h2.2M207.9 427h2.2m28.8 0h2.2m29.8 0h2.2m28.8 0h2.2m28.8 0h2.2m36.8 0h2.2m28.8 0h2.2M193.9 428h2.2m3.8 0h2.2m29.8 0h2.2m28.8 0h2.2m28.8 0h2.2m67.8 0h2.2m29.8 0h2.2M223.9 429h2.2m28.8 0h2.2m29.8 0h2.2m36.8 0h2.2m28.8 0h2.2m28.8 0h2.2M215.9 430h2.2m28.8 0h2.2m29.8 0h2.2m36.8 0h2.2m28.8 0h2.2m29.8 0h2.2M207.9 431h2.2m29.8 0h2.2m67.8 0h2.2m29.8 0h2.2m28.8 0h2.2M193.9 432h2.2m3.8 0h2.2m29.8 0h2.2m36.8 0h2.2m29.8 0h2.2m28.8 0h2.2m29.8 0h2.2M223.9 433h2.2m36.8 0h2.2m29.8 0h2.2m29.8 0h2.2m28.8 0h2.2M255.9 434h2.2m28.8 0h2.2m29.8 0h2.2m29.8 0h2.2M215.9 435h2.2m29.8 0h2.2m29.8 0h2.2m28.8 0h2.2m29.8 0h2.2M207.9 436h2.2m29.8 0h2.2m29.8 0h2.2m29.8 0h2.2M193.9 437h2.2m4.8 0h2.2m28.8 0h2.2m29.8 0h2.2m29.8 0h2.2m36.8 0h2.2M223.9 438h2.2m29.8 0h2.2m29.8 0h2.2m37.8 0h2.2M216.9 439h2.2m28.8 0h2.2m69.8 0h2.2M208.9 440h2.2m29.8 0h2.2m36.8 0h2.2m29.8 0h2.2M194.9 441h2.2m3.8 0h2.2m69.8 0h2.2m28.8 0h2.2M232.9 442h2.2m29.8 0h2.2m29.8 0h2.2M224.9 443h2.2m29.8 0h2.2m29.8 0h2.2M216.9 444h2.2m29.8 0h2.2m29.8 0h2.2M208.9 445h2.2m29.8 0h2.2m29.8 0h2.2M194.9 446h2.2m3.8 0h2.2m29.8 0h2.2M224.9 447h2.2m37.8 0h2.2M256.9 448h2.2M216.9 449h2.2m30.8 0h2.2M208.9 450h2.2m30.8 0h2.2M194.9 451h2.2m3.8 0h2.2m30.8 0h2.2M225.9 452h2.2M217.9 453h2.2M208.9 455h2.2M194.9 456h2.2m3.8 0h2.2" fill="none" stroke="#424242" stroke-width="2.2"/><path d="M569.9 408h2.2M562.9 409h2.2M555.9 410h2.2M548.9 411h2.2M541.9 412h2.2m27.8 0h2.2M534.9 413h2.2m28.8 0h2.2M527.9 414h2.2m28.8 0h2.2M520.9 415h2.2m28.8 0h2.2M513.9 416h2.2m27.8 0h2.2m28.8 0h2.2M506.9 417h2.2m27.8 0h2.2m28.8 0h2.2M499.9 418h2.2m27.8 0h2.2m28.8 0h2.2M491.9 419h2.2m28.8 0h2.2m28.8 0h2.2M484.9 420h2.2m28.8 0h2.2m28.8 0h2.2m28.8 0h2.2M477.9 421h2.2m28.8 0h2.2m28.8 0h2.2m28.8 0h2.2M470.9 422h2.2m28.8 0h2.2m28.8 0h2.2M463.9 423h2.2m28.8 0h2.2m28.8 0h2.2m35.8 0h2.2M455.9 424h2.2m28.8 0h2.2m28.8 0h2.2m36.8 0h2.2M448.9 425h2.2m28.8 0h2.2m28.8 0h2.2m35.8 0h2.2m29.8 0h2.2M441.9 426h2.2m28.8 0h2.2m28.8 0h2.2m35.8 0h2.2m28.8 0h2.2M433.9 427h2.2m29.8 0h2.2m66.8 0h2.2m28.8 0h2.2M426.9 428h2.2m28.8 0h2.2m36.8 0h2.2m28.8 0h2.2m28.8 0h2.2M419.9 429h2.2m28.8 0h2.2m35.8 0h2.2m29.8 0h2.2m28.8 0h2.2m28.8 0h2.2M411.9 430h2.2m67.8 0h2.2m28.8 0h2.2m29.8 0h2.2m28.8 0h2.2M404.9 431h2.2m35.8 0h2.2m29.8 0h2.2m28.8 0h2.2m29.8 0h2.2m28.8 0h2.2M396.9 432h2.2m36.8 0h2.2m29.8 0h2.2m28.8 0h2.2m28.8 0h2.2M428.9 433h2.2m28.8 0h2.2m29.8 0h2.2m28.8 0h2.2m36.8 0h2.2M389.9 434h2.2m28.8 0h2.2m29.8 0h2.2m28.8 0h2.2m29.8 0h2.2m36.8 0h2.2m28.8 0h2.2M381.9 435h2.2m29.8 0h2.2m28.8 0h2.2m29.8 0h2.2m67.8 0h2.2m29.8 0h2.2M374.9 436h2.2m28.8 0h2.2m29.8 0h2.2m29.8 0h2.2m35.8 0h2.2m29.8 0h2.2m29.8 0h2.2M366.9 437h2.2m29.8 0h2.2m28.8 0h2.2m29.8 0h2.2m36.8 0h2.2m29.8 0h2.2m28.8 0h2.2M358.9 438h2.2m29.8 0h2.2m29.8 0h2.2m68.8 0h2.2m28.8 0h2.2m29.8 0h2.2m29.8 0h2.2M351.9 439h2.2m29.8 0h2.2m28.8 0h2.2m37.8 0h2.2m28.8 0h2.2m29.8 0h2.2m29.8 0h2.2M343.9 440h2.2m29.8 0h2.2m68.8 0h2.2m29.8 0h2.2m29.8 0h2.2m29.8 0h2.2m36.8 0h2.2M335.9 441h2.2m29.8 0h2.2m37.8 0h2.2m29.8 0h2.2m29.8 0h2.2m28.8 0h2.2m68.8 0h2.2M328.9 442h2.2m68.8 0h2.2m29.8 0h2.2m29.8 0h2.2m29.8 0h2.2m36.8 0h2.2m29.8 0h2.2M320.9 443h2.2m37.8 0h2.2m29.8 0h2.2m29.8 0h2.2m29.8 0h2.2m29.8 0h2.2m36.8 0h2.2m29.8 0h2.2m29.8 0h2.2M352.9 444h2.2m29.8 0h2.2m29.8 0h2.2m29.8 0h2.2m69.8 0h2.2m29.8 0h2.2m28.8 0h2.2M312.9 445h2.2m29.8 0h2.2m29.8 0h2.2m29.8 0h2.2m30.8 0h2.2m36.8 0h2.2m29.8 0h2.2m29.8 0h2.2m29.8 0h2.2M304.9 446h2.2m30.8 0h2.2m29.8 0h2.2m29.8 0h2.2m69.8 0h2.2m29.8 0h2.2m29.8 0h2.2m29.8 0h2.2M297.9 447h2.2m29.8 0h2.2m29.8 0h2.2m29.8 0h2.2m37.8 0h2.2m29.8 0h2.2m29.8 0h2.2m29.8 0h2.2M289.9 448h2.2m29.8 0h2.2m29.8 0h2.2m69.8 0h2.2m30.8 0h2.2m29.8 0h2.2m29.8 0h2.2m37.8 0h2.2m29.8 0h2.2M281.9 449h2.2m29.8 0h2.2m69.8 0h2.2m30.8 0h2.2m29.8 0h2.2m29.8 0h2.2m69.8 0h2.2m29.8 0h2.2M273.9 450h2.2m29.8 0h2.2m37.8 0h2.2m30.8 0h2.2m29.8 0h2.2m29.8 0h2.2m30.8 0h2.2m37.8 0h2.2m29.8 0h2.2m29.8 0h2.2M265.9 451h2.2m70.8 0h2.2m29.8 0h2.2m29.8 0h2.2m30.8 0h2.2m69.8 0h2.2m29.8 0h2.2m30.8 0h2.2M257.9 452h2.2m37.8 0h2.2m30.8 0h2.2m29.8 0h2.2m30.8 0h2.2m69.8 0h2.2m30.8 0h2.2m29.8 0h2.2m29.8 0h2.2M290.9 453h2.2m29.8 0h2.2m30.8 0h2.2m29.8 0h2.2m37.8 0h2.2m30.8 0h2.2m29.8 0h2.2m29.8 0h2.2m70.8 0h2.2M249.9 454h2.2m30.8 0h2.2m29.8 0h2.2m30.8 0h2.2m69.8 0h2.2m30.8 0h2.2m29.8 0h2.2m30.8 0h2.2m37.8 0h2.2m29.8 0h2.2M241.9 455h2.2m30.8 0h2.2m29.8 0h2.2m30.8 0h2.2m37.8 0h2.2m30.8 0h2.2m29.8 0h2.2m30.8 0h2.2m69.8 0h2.2m30.8 0h2.2M233.9 456h2.2m30.8 0h2.2m29.8 0h2.2m70.8 0h2.2m30.8 0h2.2m30.8 0h2.2m29.8 0h2.2m37.8 0h2.2m30.8 0h2.2m29.8 0h2.2M225.9 457h2.2m30.8 0h2.2m70.8 0h2.2m30.8 0h2.2m29.8 0h2.2m30.8 0h2.2m70.8 0h2.2m29.8 0h2.2m30.8 0h2.2M217.9 458h2.2m30.8 0h2.2m37.8 0h2.2m30.8 0h2.2m30.8 0h2.2m30.8 0h2.2m70.8 0h2.2m29.8 0h2.2m30.8 0h2.2m30.8 0h2.2m37.8 0h2.2M209.9 459h2.2m70.8 0h2.2m30.8 0h2.2m30.8 0h2.2m30.8 0h2.2m37.8 0h2.2m30.8 0h2.2m30.8 0h2.2m29.8 0h2.2m70.8 0h2.2M242.9 460h2.2m29.8 0h2.2m30.8 0h2.2m30.8 0h2.2m70.8 0h2.2m30.8 0h2.2m30.8 0h2.2m70.8 0h2.2m30.8 0h2.2M194.9 461h2.2m4.8 0h2.2m29.8 0h2.2m30.8 0h2.2m30.8 0h2.2m71.8 0h2.2m30.8 0h2.2m30.8 0h2.2m29.8 0h2.2m38.8 0h2.2m30.8 0h2.2m29.8 0h2.2M225.9 462h2.2m30.8 0h2.2m30.8 0h2.2m38.8 0h2.2m30.8 0h2.2m30.8 0h2.2m30.8 0h2.2m70.8 0h2.2m30.8 0h2.2m30.8 0h2.2m30.8 0h2.2M217.9 463h2.2m30.8 0h2.2m71.8 0h2.2m30.8 0h2.2m30.8 0h2.2m71.8 0h2.2m30.8 0h2.2m29.8 0h2.2m30.8 0h2.2M209.9 464h2.2m71.8 0h2.2m30.8 0h2.2m30.8 0h2.2m30.8 0h2.2m38.8 0h2.2m30.8 0h2.2m30.8 0h2.2m30.8 0h2.2m70.8 0h2.2M242.9 465h2.2m30.8 0h2.2m30.8 0h2.2m30.8 0h2.2m71.8 0h2.2m30.8 0h2.2m30.8 0h2.2m30.8 0h2.2m38.8 0h2.2m30.8 0h2.2M194.9 466h2.2m4.8 0h2.2m30.8 0h2.2m30.8 0h2.2m30.8 0h2.2m71.8 0h2.2m30.8 0h2.2m30.8 0h2.2m30.8 0h2.2m71.8 0h2.2m30.8 0h2.2M226.9 467h2.2m30.8 0h2.2m71.8 0h2.2m30.8 0h2.2m31.8 0h2.2m30.8 0h2.2m71.8 0h2.2m30.8 0h2.2m30.8 0h2.2M218.9 468h2.2m30.8 0h2.2m38.8 0h2.2m30.8 0h2.2m30.8 0h2.2m31.8 0h2.2m71.8 0h2.2m30.8 0h2.2m30.8 0h2.2m30.8 0h2.2m38.8 0h2.2M209.9 469h2.2m72.8 0h2.2m30.8 0h2.2m30.8 0h2.2m31.8 0h2.2m38.8 0h2.2m30.8 0h2.2m30.8 0h2.2m30.8 0h2.2m71.8 0h2.2M243.9 470h2.2m30.8 0h2.2m30.8 0h2.2m30.8 0h2.2m72.8 0h2.2m30.8 0h2.2m30.8 0h2.2m72.8 0h2.2m30.8 0h2.2M195.9 471h2.2m3.8 0h2.2m30.8 0h2.2m31.8 0h2.2m30.8 0h2.2m72.8 0h2.2m30.8 0h2.2m30.8 0h2.2m31.8 0h2.2m38.8 0h2.2m30.8 0h2.2m30.8 0h2.2M226.9 472h2.2m31.8 0h2.2m71.8 0h2.2m31.8 0h2.2m30.8 0h2.2m31.8 0h2.2m71.8 0h2.2m30.8 0h2.2m31.8 0h2.2M218.9 473h2.2m72.8 0h2.2m30.8 0h2.2m31.8 0h2.2m30.8 0h2.2m72.8 0h2.2m30.8 0h2.2m31.8 0h2.2m71.8 0h2.2M251.9 474h2.2m31.8 0h2.2m30.8 0h2.2m31.8 0h2.2m72.8 0h2.2m30.8 0h2.2m30.8 0h2.2m31.8 0h2.2m38.8 0h2.2m30.8 0h2.2M210.9 475h2.2m30.8 0h2.2m31.8 0h2.2m30.8 0h2.2m72.8 0h2.2m31.8 0h2.2m30.8 0h2.2m31.8 0h2.2m71.8 0h2.2m31.8 0h2.2M195.9 476h2.2m3.8 0h2.2m31.8 0h2.2m30.8 0h2.2m73.8 0h2.2m30.8 0h2.2m31.8 0h2.2m30.8 0h2.2m72.8 0h2.2m31.8 0h2.2m30.8 0h2.2M227.9 477h2.2m30.8 0h2.2m39.8 0h2.2m31.8 0h2.2m30.8 0h2.2m31.8 0h2.2m72.8 0h2.2m30.8 0h2.2m31.8 0h2.2m30.8 0h2.2M218.9 478h2.2m73.8 0h2.2m31.8 0h2.2m30.8 0h2.2m72.8 0h2.2m31.8 0h2.2m31.8 0h2.2m30.8 0h2.2M252.9 479h2.2m31.8 0h2.2m30.8 0h2.2m73.8 0h2.2m30.8 0h2.2m31.8 0h2.2m31.8 0h2.2m72.8 0h2.2M210.9 480h2.2m31.8 0h2.2m30.8 0h2.2m73.8 0h2.2m31.8 0h2.2m31.8 0h2.2m30.8 0h2.2m72.8 0h2.2m31.8 0h2.2M195.9 481h2.2m3.8 0h2.2m31.8 0h2.2m31.8 0h2.2m39.8 0h2.2m31.8 0h2.2m31.8 0h2.2m31.8 0h2.2m72.8 0h2.2m31.8 0h2.2m30.8 0h2.2M227.9 482h2.2m73.8 0h2.2m31.8 0h2.2m31.8 0h2.2m72.8 0h2.2m31.8 0h2.2m31.8 0h2.2m31.8 0h2.2M261.9 483h2.2m31.8 0h2.2m31.8 0h2.2m73.8 0h2.2m30.8 0h2.2m31.8 0h2.2m31.8 0h2.2M219.9 484h2.2m31.8 0h2.2m30.8 0h2.2m74.8 0h2.2m30.8 0h2.2m31.8 0h2.2m31.8 0h2.2m73.8 0h2.2M210.9 485h2.2m31.8 0h2.2m73.8 0h2.2m31.8 0h2.2m31.8 0h2.2m31.8 0h2.2m73.8 0h2.2m31.8 0h2.2M195.9 486h2.2m4.8 0h2.2m73.8 0h2.2m31.8 0h2.2m31.8 0h2.2m31.8 0h2.2m73.8 0h2.2m31.8 0h2.2m31.8 0h2.2M236.9 487h2.2m31.8 0h2.2m31.8 0h2.2m31.8 0h2.2m73.8 0h2.2m31.8 0h2.2m31.8 0h2.2m31.8 0h2.2M227.9 488h2.2m32.8 0h2.2m31.8 0h2.2m73.8 0h2.2m31.8 0h2.2m31.8 0h2.2m31.8 0h2.2M219.9 489h2.2m31.8 0h2.2m74.8 0h2.2m31.8 0h2.2m31.8 0h2.2m31.8 0h2.2m74.8 0h2.2M210.9 490h2.2m74.8 0h2.2m32.8 0h2.2m31.8 0h2.2m31.8 0h2.2m73.8 0h2.2m32.8 0h2.2M245.9 491h2.2m31.8 0h2.2m31.8 0h2.2m32.8 0h2.2m73.8 0h2.2m31.8 0h2.2m32.8 0h2.2M195.9 492h2.2m4.8 0h2.2m31.8 0h2.2m32.8 0h2.2m31.8 0h2.2m74.8 0h2.2m31.8 0h2.2m31.8 0h2.2M228.9 493h2.2m31.8 0h2.2m74.8 0h2.2m32.8 0h2.2m31.8 0h2.2m74.8 0h2.2M219.9 494h2.2m75.8 0h2.2m31.8 0h2.2m31.8 0h2.2m74.8 0h2.2m32.8 0h2.2M254.9 495h2.2m31.8 0h2.2m32.8 0h2.2m74.8 0h2.2m31.8 0h2.2m32.8 0h2.2M211.9 496h2.2m31.8 0h2.2m32.8 0h2.2m74.8 0h2.2m32.8 0h2.2m31.8 0h2.2m32.8 0h2.2M196.9 497h2.2m3.8 0h2.2m32.8 0h2.2m74.8 0h2.2m32.8 0h2.2m31.8 0h2.2m32.8 0h2.2M271.9 498h2.2m32.8 0h2.2m32.8 0h2.2m31.8 0h2.2m74.8 0h2.2M228.9 499h2.2m32.8 0h2.2m32.8 0h2.2m31.8 0h2.2m75.8 0h2.2m31.8 0h2.2M220.9 500h2.2m31.8 0h2.2m110.8 0h2.2m32.8 0h2.2m31.8 0h2.2M211.9 501h2.2m75.8 0h2.2m32.8 0h2.2m32.8 0h2.2m31.8 0h2.2M246.9 502h2.2m32.8 0h2.2m31.8 0h2.2m32.8 0h2.2m75.8 0h2.2M196.9 503h2.2m3.8 0h2.2m32.8 0h2.2m32.8 0h2.2m32.8 0h2.2m75.8 0h2.2m32.8 0h2.2M229.9 504h2.2m110.8 0h2.2m32.8 0h2.2m32.8 0h2.2M264.9 505h2.2m31.8 0h2.2m32.8 0h2.2m32.8 0h2.2M220.9 506h2.2m32.8 0h2.2m32.8 0h2.2m32.8 0h2.2m75.8 0h2.2M211.9 507h2.2m32.8 0h2.2m32.8 0h2.2m76.8 0h2.2m32.8 0h2.2M196.9 508h2.2m4.8 0h2.2m111.8 0h2.2m32.8 0h2.2m32.8 0h2.2M238.9 509h2.2m32.8 0h2.2m32.8 0h2.2m32.8 0h2.2M229.9 510h2.2m32.8 0h2.2m32.8 0h2.2m76.8 0h2.2M220.9 511h2.2m112.8 0h2.2m32.8 0h2.2M256.9 512h2.2m32.8 0h2.2m32.8 0h2.2m32.8 0h2.2M212.9 513h2.2m32.8 0h2.2m32.8 0h2.2m33.8 0h2.2M196.9 514h2.2m4.8 0h2.2m32.8 0h2.2m112.8 0h2.2M274.9 515h2.2m32.8 0h2.2m32.8 0h2.2M230.9 516h2.2m32.8 0h2.2m32.8 0h2.2m33.8 0h2.2M221.9 517h2.2m32.8 0h2.2M212.9 518h2.2m77.8 0h2.2m32.8 0h2.2M248.9 519h2.2m32.8 0h2.2m33.8 0h2.2M196.9 520h2.2m4.8 0h2.2m33.8 0h2.2m32.8 0h2.2M230.9 521h2.2m77.8 0h2.2M266.9 522h2.2m32.8 0h2.2M221.9 523h2.2m33.8 0h2.2m33.8 0h2.2M212.9 524h2.2M248.9 525h2.2m33.8 0h2.2M197.9 526h2.2m3.8 0h2.2m33.8 0h2.2m33.8 0h2.2M230.9 527h2.2M266.9 528h2.2M222.9 529h2.2m33.8 0h2.2M213.9 530h2.2M249.9 531h2.2M197.9 532h2.2m4.8 0h2.2m33.8 0h2.2M231.9 533h2.2M222.9 535h2.2M213.9 536h2.2M197.9 538h2.2m4.8 0h2.2" fill="none" stroke="#3c3c3c" stroke-width="2.2"/><path d="M612.9 478h2.2M604.9 479h2.2M597.9 480h2.2M589.9 481h2.2M581.9 483h2.2m31.8 0h2.2M574.9 484h2.2m31.8 0h2.2M566.9 485h2.2M558.9 486h2.2m39.8 0h2.2M592.9 487h2.2M550.9 488h2.2m31.8 0h2.2m32.8 0h2.2M543.9 489h2.2m31.8 0h2.2M535.9 490h2.2m73.8 0h2.2M569.9 491h2.2m31.8 0h2.2M527.9 492h2.2m31.8 0h2.2m31.8 0h2.2M519.9 493h2.2m31.8 0h2.2m32.8 0h2.2M511.9 494h2.2m31.8 0h2.2m74.8 0h2.2M503.9 495h2.2m74.8 0h2.2m31.8 0h2.2M537.9 496h2.2m32.8 0h2.2m31.8 0h2.2M495.9 497h2.2m32.8 0h2.2m31.8 0h2.2M487.9 498h2.2m32.8 0h2.2m74.8 0h2.2M479.9 499h2.2m74.8 0h2.2m32.8 0h2.2m31.8 0h2.2M514.9 500h2.2m31.8 0h2.2m32.8 0h2.2M471.9 501h2.2m32.8 0h2.2m31.8 0h2.2m74.8 0h2.2M463.9 502h2.2m32.8 0h2.2m74.8 0h2.2m32.8 0h2.2M455.9 503h2.2m74.8 0h2.2m32.8 0h2.2m32.8 0h2.2M489.9 504h2.2m32.8 0h2.2m32.8 0h2.2M446.9 505h2.2m32.8 0h2.2m32.8 0h2.2m75.8 0h2.2m32.8 0h2.2M438.9 506h2.2m32.8 0h2.2m75.8 0h2.2m32.8 0h2.2m32.8 0h2.2M430.9 507h2.2m75.8 0h2.2m32.8 0h2.2m32.8 0h2.2m32.8 0h2.2M465.9 508h2.2m32.8 0h2.2m32.8 0h2.2M422.9 509h2.2m32.8 0h2.2m32.8 0h2.2m75.8 0h2.2m32.8 0h2.2M413.9 510h2.2m33.8 0h2.2m75.8 0h2.2m32.8 0h2.2m32.8 0h2.2m32.8 0h2.2M405.9 511h2.2m76.8 0h2.2m32.8 0h2.2m32.8 0h2.2M440.9 512h2.2m32.8 0h2.2m33.8 0h2.2m75.8 0h2.2m32.8 0h2.2M397.9 513h2.2m32.8 0h2.2m32.8 0h2.2m76.8 0h2.2m32.8 0h2.2m32.8 0h2.2M388.9 514h2.2m33.8 0h2.2m75.8 0h2.2m33.8 0h2.2m32.8 0h2.2M380.9 515h2.2m76.8 0h2.2m32.8 0h2.2m33.8 0h2.2m75.8 0h2.2M415.9 516h2.2m33.8 0h2.2m32.8 0h2.2m76.8 0h2.2m32.8 0h2.2m33.8 0h2.2M371.9 517h2.2m33.8 0h2.2m32.8 0h2.2m76.8 0h2.2m33.8 0h2.2m32.8 0h2.2M363.9 518h2.2m32.8 0h2.2m77.8 0h2.2m32.8 0h2.2m33.8 0h2.2m76.8 0h2.2M434.9 519h2.2m33.8 0h2.2m32.8 0h2.2m76.8 0h2.2m33.8 0h2.2M354.9 520h2.2m33.8 0h2.2m33.8 0h2.2m32.8 0h2.2m77.8 0h2.2m32.8 0h2.2m33.8 0h2.2M346.9 521h2.2m32.8 0h2.2m113.8 0h2.2m32.8 0h2.2m33.8 0h2.2M337.9 522h2.2m77.8 0h2.2m33.8 0h2.2m32.8 0h2.2m113.8 0h2.2m32.8 0h2.2M373.9 523h2.2m33.8 0h2.2m32.8 0h2.2m77.8 0h2.2m33.8 0h2.2m33.8 0h2.2m32.8 0h2.2M329.9 524h2.2m32.8 0h2.2m33.8 0h2.2m77.8 0h2.2m33.8 0h2.2m33.8 0h2.2M320.9 525h2.2m33.8 0h2.2m77.8 0h2.2m33.8 0h2.2m33.8 0h2.2m76.8 0h2.2m33.8 0h2.2M392.9 526h2.2m33.8 0h2.2m32.8 0h2.2m77.8 0h2.2m33.8 0h2.2m33.8 0h2.2M311.9 527h2.2m33.8 0h2.2m33.8 0h2.2m33.8 0h2.2m77.8 0h2.2m33.8 0h2.2m33.8 0h2.2M302.9 528h2.2m33.8 0h2.2m114.8 0h2.2m33.8 0h2.2m33.8 0h2.2m77.8 0h2.2m33.8 0h2.2M294.9 529h2.2m78.8 0h2.2m33.8 0h2.2m33.8 0h2.2m113.8 0h2.2m33.8 0h2.2m33.8 0h2.2M330.9 530h2.2m33.8 0h2.2m33.8 0h2.2m78.8 0h2.2m33.8 0h2.2m33.8 0h2.2M285.9 531h2.2m33.8 0h2.2m33.8 0h2.2m78.8 0h2.2m33.8 0h2.2m33.8 0h2.2m78.8 0h2.2m33.8 0h2.2M276.9 532h2.2m114.8 0h2.2m34.8 0h2.2m33.8 0h2.2m77.8 0h2.2m33.8 0h2.2m34.8 0h2.2M312.9 533h2.2m34.8 0h2.2m33.8 0h2.2m114.8 0h2.2m33.8 0h2.2m33.8 0h2.2M267.9 534h2.2m34.8 0h2.2m33.8 0h2.2m78.8 0h2.2m33.8 0h2.2m33.8 0h2.2m114.8 0h2.2m34.8 0h2.2M258.9 535h2.2m34.8 0h2.2m78.8 0h2.2m33.8 0h2.2m34.8 0h2.2m78.8 0h2.2m33.8 0h2.2m33.8 0h2.2M331.9 536h2.2m33.8 0h2.2m34.8 0h2.2m78.8 0h2.2m33.8 0h2.2m34.8 0h2.2m77.8 0h2.2M249.9 537h2.2m34.8 0h2.2m33.8 0h2.2m115.8 0h2.2m34.8 0h2.2m33.8 0h2.2m78.8 0h2.2m33.8 0h2.2M240.9 538h2.2m34.8 0h2.2m79.8 0h2.2m33.8 0h2.2m34.8 0h2.2m114.8 0h2.2m34.8 0h2.2m33.8 0h2.2M313.9 539h2.2m34.8 0h2.2m33.8 0h2.2m79.8 0h2.2m34.8 0h2.2m33.8 0h2.2M231.9 540h2.2m34.8 0h2.2m34.8 0h2.2m33.8 0h2.2m79.8 0h2.2m34.8 0h2.2m33.8 0h2.2m78.8 0h2.2m34.8 0h2.2m33.8 0h2.2M222.9 541h2.2m34.8 0h2.2m116.8 0h2.2m33.8 0h2.2m34.8 0h2.2m79.8 0h2.2m33.8 0h2.2m34.8 0h2.2M213.9 542h2.2m80.8 0h2.2m33.8 0h2.2m34.8 0h2.2m116.8 0h2.2m33.8 0h2.2m34.8 0h2.2m78.8 0h2.2M250.9 543h2.2m34.8 0h2.2m33.8 0h2.2m80.8 0h2.2m33.8 0h2.2m34.8 0h2.2m115.8 0h2.2m34.8 0h2.2M197.9 544h2.2m4.8 0h2.2m34.8 0h2.2m116.8 0h2.2m34.8 0h2.2m34.8 0h2.2m79.8 0h2.2m33.8 0h2.2m34.8 0h2.2M278.9 545h2.2m34.8 0h2.2m33.8 0h2.2m116.8 0h2.2m34.8 0h2.2m34.8 0h2.2m79.8 0h2.2M232.9 546h2.2m34.8 0h2.2m34.8 0h2.2m79.8 0h2.2m34.8 0h2.2m34.8 0h2.2m116.8 0h2.2m33.8 0h2.2m34.8 0h2.2M223.9 547h2.2m117.8 0h2.2m33.8 0h2.2m34.8 0h2.2m80.8 0h2.2m33.8 0h2.2m34.8 0h2.2M260.9 548h2.2m34.8 0h2.2m34.8 0h2.2m116.8 0h2.2m34.8 0h2.2m34.8 0h2.2m79.8 0h2.2m34.8 0h2.2M214.9 549h2.2m34.8 0h2.2m34.8 0h2.2m80.8 0h2.2m34.8 0h2.2m34.8 0h2.2m116.8 0h2.2m34.8 0h2.2m34.8 0h2.2M197.9 550h2.2m4.8 0h2.2m118.8 0h2.2m34.8 0h2.2m34.8 0h2.2m79.8 0h2.2m34.8 0h2.2m34.8 0h2.2M241.9 551h2.2m35.8 0h2.2m34.8 0h2.2m117.8 0h2.2m34.8 0h2.2m34.8 0h2.2m79.8 0h2.2m34.8 0h2.2M232.9 552h2.2m35.8 0h2.2m80.8 0h2.2m34.8 0h2.2m34.8 0h2.2m117.8 0h2.2m34.8 0h2.2m34.8 0h2.2M307.9 553h2.2m34.8 0h2.2m34.8 0h2.2m80.8 0h2.2m34.8 0h2.2m34.8 0h2.2m117.8 0h2.2M223.9 554h2.2m34.8 0h2.2m35.8 0h2.2m117.8 0h2.2m34.8 0h2.2m35.8 0h2.2m80.8 0h2.2m34.8 0h2.2m34.8 0h2.2M214.9 555h2.2m34.8 0h2.2m81.8 0h2.2m34.8 0h2.2m34.8 0h2.2m118.8 0h2.2m34.8 0h2.2m34.8 0h2.2M289.9 556h2.2m34.8 0h2.2m34.8 0h2.2m81.8 0h2.2m34.8 0h2.2m34.8 0h2.2m117.8 0h2.2M198.9 557h2.2m4.8 0h2.2m34.8 0h2.2m34.8 0h2.2m119.8 0h2.2m34.8 0h2.2m34.8 0h2.2m81.8 0h2.2m34.8 0h2.2m34.8 0h2.2M233.9 558h2.2m81.8 0h2.2m34.8 0h2.2m35.8 0h2.2m118.8 0h2.2m34.8 0h2.2M270.9 559h2.2m35.8 0h2.2m34.8 0h2.2m81.8 0h2.2m35.8 0h2.2m34.8 0h2.2m80.8 0h2.2m35.8 0h2.2m34.8 0h2.2M224.9 560h2.2m34.8 0h2.2m119.8 0h2.2m34.8 0h2.2m118.8 0h2.2m35.8 0h2.2m34.8 0h2.2M299.9 561h2.2m34.8 0h2.2m35.8 0h2.2m81.8 0h2.2m34.8 0h2.2m35.8 0h2.2m118.8 0h2.2M214.9 562h2.2m35.8 0h2.2m35.8 0h2.2m118.8 0h2.2m35.8 0h2.2m35.8 0h2.2m80.8 0h2.2m35.8 0h2.2m34.8 0h2.2M198.9 563h2.2m4.8 0h2.2m35.8 0h2.2m81.8 0h2.2m35.8 0h2.2m34.8 0h2.2m119.8 0h2.2m35.8 0h2.2M280.9 564h2.2m35.8 0h2.2m35.8 0h2.2m81.8 0h2.2m35.8 0h2.2m34.8 0h2.2m81.8 0h2.2m35.8 0h2.2M233.9 565h2.2m35.8 0h2.2m120.8 0h2.2m34.8 0h2.2m119.8 0h2.2m35.8 0h2.2m34.8 0h2.2M309.9 566h2.2m35.8 0h2.2m35.8 0h2.2m81.8 0h2.2m35.8 0h2.2m34.8 0h2.2m119.8 0h2.2M224.9 567h2.2m35.8 0h2.2m35.8 0h2.2m119.8 0h2.2m35.8 0h2.2m35.8 0h2.2m81.8 0h2.2m35.8 0h2.2m35.8 0h2.2M215.9 568h2.2m120.8 0h2.2m35.8 0h2.2m34.8 0h2.2m120.8 0h2.2m35.8 0h2.2M253.9 569h2.2m35.8 0h2.2m34.8 0h2.2m120.8 0h2.2m35.8 0h2.2m35.8 0h2.2m81.8 0h2.2m35.8 0h2.2M198.9 570h2.2m4.8 0h2.2m35.8 0h2.2m35.8 0h2.2m82.8 0h2.2m35.8 0h2.2m35.8 0h2.2m120.8 0h2.2m35.8 0h2.2M319.9 571h2.2m35.8 0h2.2m35.8 0h2.2m82.8 0h2.2m35.8 0h2.2m35.8 0h2.2m82.8 0h2.2M234.9 572h2.2m35.8 0h2.2m35.8 0h2.2m120.8 0h2.2m35.8 0h2.2m120.8 0h2.2m35.8 0h2.2m35.8 0h2.2M224.9 573h2.2m121.8 0h2.2m35.8 0h2.2m35.8 0h2.2m82.8 0h2.2m36.8 0h2.2m35.8 0h2.2M263.9 574h2.2m35.8 0h2.2m35.8 0h2.2m121.8 0h2.2m35.8 0h2.2m120.8 0h2.2m35.8 0h2.2M215.9 575h2.2m35.8 0h2.2m121.8 0h2.2m35.8 0h2.2m36.8 0h2.2m82.8 0h2.2m35.8 0h2.2m35.8 0h2.2M198.9 576h2.2m5.8 0h2.2m83.8 0h2.2m35.8 0h2.2m35.8 0h2.2m121.8 0h2.2m35.8 0h2.2m120.8 0h2.2M244.9 577h2.2m35.8 0h2.2m121.8 0h2.2m36.8 0h2.2m35.8 0h2.2m82.8 0h2.2m35.8 0h2.2m36.8 0h2.2M234.9 578h2.2m84.8 0h2.2m35.8 0h2.2m35.8 0h2.2m121.8 0h2.2m35.8 0h2.2m36.8 0h2.2M273.9 579h2.2m35.8 0h2.2m122.8 0h2.2m35.8 0h2.2m35.8 0h2.2m121.8 0h2.2m35.8 0h2.2M225.9 580h2.2m35.8 0h2.2m84.8 0h2.2m35.8 0h2.2m36.8 0h2.2m121.8 0h2.2m35.8 0h2.2m35.8 0h2.2M302.9 581h2.2m35.8 0h2.2m36.8 0h2.2m83.8 0h2.2m35.8 0h2.2m36.8 0h2.2m121.8 0h2.2M215.9 582h2.2m36.8 0h2.2m36.8 0h2.2m121.8 0h2.2m36.8 0h2.2m121.8 0h2.2m36.8 0h2.2M199.9 583h2.2m4.8 0h2.2m122.8 0h2.2m36.8 0h2.2m35.8 0h2.2m83.8 0h2.2m36.8 0h2.2m36.8 0h2.2m82.8 0h2.2M244.9 584h2.2m36.8 0h2.2m36.8 0h2.2m122.8 0h2.2m36.8 0h2.2m121.8 0h2.2m36.8 0h2.2M235.9 585h2.2m122.8 0h2.2m36.8 0h2.2m122.8 0h2.2m36.8 0h2.2m35.8 0h2.2M274.9 586h2.2m35.8 0h2.2m36.8 0h2.2m84.8 0h2.2m36.8 0h2.2m35.8 0h2.2m122.8 0h2.2m36.8 0h2.2M225.9 587h2.2m36.8 0h2.2m123.8 0h2.2m36.8 0h2.2m122.8 0h2.2m36.8 0h2.2m35.8 0h2.2M303.9 588h2.2m36.8 0h2.2m36.8 0h2.2m83.8 0h2.2m36.8 0h2.2m36.8 0h2.2m122.8 0h2.2M216.9 589h2.2m36.8 0h2.2m36.8 0h2.2m123.8 0h2.2m35.8 0h2.2m123.8 0h2.2m36.8 0h2.2m35.8 0h2.2M199.9 590h2.2m4.8 0h2.2m123.8 0h2.2m36.8 0h2.2m36.8 0h2.2m84.8 0h2.2m36.8 0h2.2m36.8 0h2.2M245.9 591h2.2m36.8 0h2.2m36.8 0h2.2m123.8 0h2.2m36.8 0h2.2m123.8 0h2.2m36.8 0h2.2M235.9 592h2.2m124.8 0h2.2m36.8 0h2.2m123.8 0h2.2m36.8 0h2.2m36.8 0h2.2M275.9 593h2.2m36.8 0h2.2m36.8 0h2.2m84.8 0h2.2m36.8 0h2.2m36.8 0h2.2m123.8 0h2.2m36.8 0h2.2M226.9 594h2.2m36.8 0h2.2m124.8 0h2.2m36.8 0h2.2m123.8 0h2.2m36.8 0h2.2m36.8 0h2.2M304.9 595h2.2m36.8 0h2.2m36.8 0h2.2m85.8 0h2.2m36.8 0h2.2m36.8 0h2.2m123.8 0h2.2M216.9 596h2.2m36.8 0h2.2m37.8 0h2.2m124.8 0h2.2m36.8 0h2.2m123.8 0h2.2m36.8 0h2.2M199.9 597h2.2m4.8 0h2.2m125.8 0h2.2m36.8 0h2.2m124.8 0h2.2m36.8 0h2.2m36.8 0h2.2m85.8 0h2.2M246.9 598h2.2m36.8 0h2.2m36.8 0h2.2m85.8 0h2.2m37.8 0h2.2m36.8 0h2.2m124.8 0h2.2m36.8 0h2.2M236.9 599h2.2m125.8 0h2.2m36.8 0h2.2m124.8 0h2.2m36.8 0h2.2M275.9 600h2.2m37.8 0h2.2m124.8 0h2.2m37.8 0h2.2m36.8 0h2.2m85.8 0h2.2m36.8 0h2.2m36.8 0h2.2M226.9 601h2.2m125.8 0h2.2m37.8 0h2.2m36.8 0h2.2m124.8 0h2.2m37.8 0h2.2M266.9 602h2.2m36.8 0h2.2m37.8 0h2.2m125.8 0h2.2m36.8 0h2.2m124.8 0h2.2m37.8 0h2.2M217.9 603h2.2m36.8 0h2.2m125.8 0h2.2m37.8 0h2.2m36.8 0h2.2m85.8 0h2.2m37.8 0h2.2m36.8 0h2.2M296.9 604h2.2m36.8 0h2.2m37.8 0h2.2m125.8 0h2.2m36.8 0h2.2m125.8 0h2.2M199.9 605h2.2m5.8 0h2.2m36.8 0h2.2m37.8 0h2.2m125.8 0h2.2m37.8 0h2.2m125.8 0h2.2m36.8 0h2.2m37.8 0h2.2M326.9 606h2.2m36.8 0h2.2m126.8 0h2.2m36.8 0h2.2m37.8 0h2.2M237.9 607h2.2m36.8 0h2.2m37.8 0h2.2m86.8 0h2.2m37.8 0h2.2m36.8 0h2.2m126.8 0h2.2m36.8 0h2.2M227.9 608h2.2m126.8 0h2.2m37.8 0h2.2m125.8 0h2.2m37.8 0h2.2m125.8 0h2.2M267.9 609h2.2m36.8 0h2.2m126.8 0h2.2m37.8 0h2.2m37.8 0h2.2m86.8 0h2.2m36.8 0h2.2m37.8 0h2.2M217.9 610h2.2m126.8 0h2.2m37.8 0h2.2m37.8 0h2.2m126.8 0h2.2m37.8 0h2.2M257.9 611h2.2m37.8 0h2.2m37.8 0h2.2m126.8 0h2.2m37.8 0h2.2m125.8 0h2.2m37.8 0h2.2M200.9 612h2.2m4.8 0h2.2m37.8 0h2.2m127.8 0h2.2m37.8 0h2.2m126.8 0h2.2m36.8 0h2.2m37.8 0h2.2M287.9 613h2.2m37.8 0h2.2m37.8 0h2.2m87.8 0h2.2m36.8 0h2.2m37.8 0h2.2m126.8 0h2.2M237.9 614h2.2m37.8 0h2.2m127.8 0h2.2m37.8 0h2.2m126.8 0h2.2m37.8 0h2.2M317.9 615h2.2m37.8 0h2.2m127.8 0h2.2m37.8 0h2.2m126.8 0h2.2m37.8 0h2.2M227.9 616h2.2m37.8 0h2.2m128.8 0h2.2m37.8 0h2.2m37.8 0h2.2m86.8 0h2.2m37.8 0h2.2m37.8 0h2.2M308.9 617h2.2m37.8 0h2.2m37.8 0h2.2m127.8 0h2.2m37.8 0h2.2m126.8 0h2.2M217.9 618h2.2m38.8 0h2.2m37.8 0h2.2m127.8 0h2.2m37.8 0h2.2m127.8 0h2.2m37.8 0h2.2M200.9 619h2.2m4.8 0h2.2m128.8 0h2.2m37.8 0h2.2m128.8 0h2.2m37.8 0h2.2m37.8 0h2.2m87.8 0h2.2M248.9 620h2.2m37.8 0h2.2m128.8 0h2.2m37.8 0h2.2m37.8 0h2.2m127.8 0h2.2m38.8 0h2.2M328.9 621h2.2m38.8 0h2.2m37.8 0h2.2m128.8 0h2.2m37.8 0h2.2M238.9 622h2.2m37.8 0h2.2m38.8 0h2.2m128.8 0h2.2m37.8 0h2.2m127.8 0h2.2m38.8 0h2.2M228.9 623h2.2m128.8 0h2.2m38.8 0h2.2m127.8 0h2.2m38.8 0h2.2m37.8 0h2.2m87.8 0h2.2M268.9 624h2.2m38.8 0h2.2m128.8 0h2.2m38.8 0h2.2m37.8 0h2.2m128.8 0h2.2m37.8 0h2.2M218.9 625h2.2m128.8 0h2.2m38.8 0h2.2m38.8 0h2.2m128.8 0h2.2m37.8 0h2.2M258.9 626h2.2m38.8 0h2.2m38.8 0h2.2m128.8 0h2.2m38.8 0h2.2m128.8 0h2.2m37.8 0h2.2M200.9 627h2.2m5.8 0h2.2m37.8 0h2.2m129.8 0h2.2m38.8 0h2.2m128.8 0h2.2m38.8 0h2.2M289.9 628h2.2m38.8 0h2.2m129.8 0h2.2m37.8 0h2.2m128.8 0h2.2m38.8 0h2.2M238.9 629h2.2m130.8 0h2.2m37.8 0h2.2m38.8 0h2.2m88.8 0h2.2m38.8 0h2.2m37.8 0h2.2M279.9 630h2.2m38.8 0h2.2m38.8 0h2.2m129.8 0h2.2m38.8 0h2.2m128.8 0h2.2m38.8 0h2.2M228.9 631h2.2m38.8 0h2.2m130.8 0h2.2m37.8 0h2.2m129.8 0h2.2m38.8 0h2.2M310.9 632h2.2m38.8 0h2.2m129.8 0h2.2m38.8 0h2.2m129.8 0h2.2m38.8 0h2.2M218.9 633h2.2m38.8 0h2.2m130.8 0h2.2m38.8 0h2.2m129.8 0h2.2m38.8 0h2.2m38.8 0h2.2M300.9 634h2.2m38.8 0h2.2m130.8 0h2.2m38.8 0h2.2m38.8 0h2.2m129.8 0h2.2M200.9 635h2.2m5.8 0h2.2m38.8 0h2.2m130.8 0h2.2m38.8 0h2.2m38.8 0h2.2m130.8 0h2.2m38.8 0h2.2M290.9 636h2.2m38.8 0h2.2m38.8 0h2.2m130.8 0h2.2m38.8 0h2.2m130.8 0h2.2M239.9 637h2.2m38.8 0h2.2m130.8 0h2.2m39.8 0h2.2m129.8 0h2.2m38.8 0h2.2M321.9 638h2.2m39.8 0h2.2m130.8 0h2.2m38.8 0h2.2m129.8 0h2.2m39.8 0h2.2M229.9 639h2.2m38.8 0h2.2m131.8 0h2.2m38.8 0h2.2m130.8 0h2.2m38.8 0h2.2m38.8 0h2.2M311.9 640h2.2m39.8 0h2.2m130.8 0h2.2m38.8 0h2.2m39.8 0h2.2m129.8 0h2.2M219.9 641h2.2m38.8 0h2.2m131.8 0h2.2m38.8 0h2.2m38.8 0h2.2m131.8 0h2.2m38.8 0h2.2M301.9 642h2.2m39.8 0h2.2m38.8 0h2.2m131.8 0h2.2m38.8 0h2.2m130.8 0h2.2M201.9 643h2.2m4.8 0h2.2m39.8 0h2.2m172.8 0h2.2m39.8 0h2.2m130.8 0h2.2m39.8 0h2.2M291.9 644h2.2m39.8 0h2.2m38.8 0h2.2m131.8 0h2.2m39.8 0h2.2m130.8 0h2.2M240.9 645h2.2m38.8 0h2.2m132.8 0h2.2m38.8 0h2.2m131.8 0h2.2m39.8 0h2.2M323.9 646h2.2m38.8 0h2.2m132.8 0h2.2m38.8 0h2.2m131.8 0h2.2m38.8 0h2.2M229.9 647h2.2m39.8 0h2.2m132.8 0h2.2m38.8 0h2.2m132.8 0h2.2m38.8 0h2.2m39.8 0h2.2M313.9 648h2.2m38.8 0h2.2m132.8 0h2.2m39.8 0h2.2m38.8 0h2.2m131.8 0h2.2M219.9 649h2.2m39.8 0h2.2m132.8 0h2.2m39.8 0h2.2m38.8 0h2.2m132.8 0h2.2m38.8 0h2.2M303.9 650h2.2m38.8 0h2.2m174.8 0h2.2m39.8 0h2.2m131.8 0h2.2M201.9 651h2.2m5.8 0h2.2m39.8 0h2.2m132.8 0h2.2m39.8 0h2.2m39.8 0h2.2m131.8 0h2.2m39.8 0h2.2M292.9 652h2.2m39.8 0h2.2m39.8 0h2.2m132.8 0h2.2m39.8 0h2.2m132.8 0h2.2M240.9 653h2.2m175.8 0h2.2m39.8 0h2.2m132.8 0h2.2m39.8 0h2.2M282.9 654h2.2m39.8 0h2.2m39.8 0h2.2m133.8 0h2.2m39.8 0h2.2m132.8 0h2.2m38.8 0h2.2M230.9 655h2.2m39.8 0h2.2m133.8 0h2.2m39.8 0h2.2m132.8 0h2.2m39.8 0h2.2M314.9 656h2.2m39.8 0h2.2m133.8 0h2.2m39.8 0h2.2m132.8 0h2.2m39.8 0h2.2M219.9 657h2.2m40.8 0h2.2m133.8 0h2.2m39.8 0h2.2m133.8 0h2.2m39.8 0h2.2M304.9 658h2.2m39.8 0h2.2m133.8 0h2.2m39.8 0h2.2m133.8 0h2.2m39.8 0h2.2M201.9 659h2.2m5.8 0h2.2m39.8 0h2.2m134.8 0h2.2m39.8 0h2.2m133.8 0h2.2m39.8 0h2.2M293.9 660h2.2m40.8 0h2.2m133.8 0h2.2m39.8 0h2.2m133.8 0h2.2m40.8 0h2.2M241.9 661h2.2m134.8 0h2.2m39.8 0h2.2m134.8 0h2.2m39.8 0h2.2m39.8 0h2.2M283.9 662h2.2m39.8 0h2.2m134.8 0h2.2m40.8 0h2.2m175.8 0h2.2m39.8 0h2.2M230.9 663h2.2m135.8 0h2.2m39.8 0h2.2m134.8 0h2.2m39.8 0h2.2m40.8 0h2.2M273.9 664h2.2m39.8 0h2.2m135.8 0h2.2m39.8 0h2.2m39.8 0h2.2m134.8 0h2.2m39.8 0h2.2M220.9 665h2.2m135.8 0h2.2m39.8 0h2.2m177.8 0h2.2m39.8 0h2.2M262.9 666h2.2m40.8 0h2.2m135.8 0h2.2m39.8 0h2.2m39.8 0h2.2m134.8 0h2.2m40.8 0h2.2M202.9 667h2.2m4.8 0h2.2m135.8 0h2.2m40.8 0h2.2m177.8 0h2.2m39.8 0h2.2M252.9 668h2.2m40.8 0h2.2m135.8 0h2.2m39.8 0h2.2m40.8 0h2.2m134.8 0h2.2m39.8 0h2.2M337.9 669h2.2m40.8 0h2.2m177.8 0h2.2m40.8 0h2.2M242.9 670h2.2m39.8 0h2.2m135.8 0h2.2m40.8 0h2.2m40.8 0h2.2m134.8 0h2.2m40.8 0h2.2M327.9 671h2.2m40.8 0h2.2m177.8 0h2.2m40.8 0h2.2m135.8 0h2.2M231.9 672h2.2m40.8 0h2.2m135.8 0h2.2m40.8 0h2.2m40.8 0h2.2m135.8 0h2.2m40.8 0h2.2M317.9 673h2.2m39.8 0h2.2m179.8 0h2.2m39.8 0h2.2m135.8 0h2.2M220.9 674h2.2m40.8 0h2.2m136.8 0h2.2m40.8 0h2.2m40.8 0h2.2m135.8 0h2.2m40.8 0h2.2M306.9 675h2.2m40.8 0h2.2m179.8 0h2.2m40.8 0h2.2m135.8 0h2.2M202.9 676h2.2m5.8 0h2.2m40.8 0h2.2m136.8 0h2.2m40.8 0h2.2m179.8 0h2.2m39.8 0h2.2M296.9 677h2.2m40.8 0h2.2m136.8 0h2.2m40.8 0h2.2m40.8 0h2.2m135.8 0h2.2M242.9 678h2.2m137.8 0h2.2m40.8 0h2.2m179.8 0h2.2m40.8 0h2.2M285.9 679h2.2m40.8 0h2.2m137.8 0h2.2m40.8 0h2.2m179.8 0h2.2m40.8 0h2.2M232.9 680h2.2m137.8 0h2.2m40.8 0h2.2m136.8 0h2.2m40.8 0h2.2M275.9 681h2.2m40.8 0h2.2m137.8 0h2.2m40.8 0h2.2m136.8 0h2.2m40.8 0h2.2M221.9 682h2.2m137.8 0h2.2m40.8 0h2.2m137.8 0h2.2m40.8 0h2.2m136.8 0h2.2M264.9 683h2.2m40.8 0h2.2m138.8 0h2.2m40.8 0h2.2m137.8 0h2.2m40.8 0h2.2M202.9 684h2.2m5.8 0h2.2m138.8 0h2.2m40.8 0h2.2m137.8 0h2.2m41.8 0h2.2m136.8 0h2.2M254.9 685h2.2m40.8 0h2.2m138.8 0h2.2m40.8 0h2.2m137.8 0h2.2m40.8 0h2.2M340.9 686h2.2m41.8 0h2.2m137.8 0h2.2m41.8 0h2.2m136.8 0h2.2M243.9 687h2.2m40.8 0h2.2m138.8 0h2.2m41.8 0h2.2m137.8 0h2.2m40.8 0h2.2M330.9 688h2.2m40.8 0h2.2m138.8 0h2.2m41.8 0h2.2m137.8 0h2.2m40.8 0h2.2M232.9 689h2.2m182.8 0h2.2m41.8 0h2.2m137.8 0h2.2m41.8 0h2.2M276.9 690h2.2m40.8 0h2.2m182.8 0h2.2m41.8 0h2.2m137.8 0h2.2m41.8 0h2.2M221.9 691h2.2m139.8 0h2.2m41.8 0h2.2m40.8 0h2.2m138.8 0h2.2m41.8 0h2.2M265.9 692h2.2m41.8 0h2.2m182.8 0h2.2m41.8 0h2.2m138.8 0h2.2m40.8 0h2.2M202.9 693h2.2m6.8 0h2.2m139.8 0h2.2m40.8 0h2.2m182.8 0h2.2m41.8 0h2.2M254.9 694h2.2m41.8 0h2.2m139.8 0h2.2m41.8 0h2.2m182.8 0h2.2M342.9 695h2.2m41.8 0h2.2m139.8 0h2.2m40.8 0h2.2m139.8 0h2.2M244.9 696h2.2m40.8 0h2.2m140.8 0h2.2m41.8 0h2.2m138.8 0h2.2m41.8 0h2.2M331.9 697h2.2m41.8 0h2.2m140.8 0h2.2m40.8 0h2.2m139.8 0h2.2m41.8 0h2.2M233.9 698h2.2m183.8 0h2.2m41.8 0h2.2m139.8 0h2.2m41.8 0h2.2M277.9 699h2.2m41.8 0h2.2m41.8 0h2.2m139.8 0h2.2m41.8 0h2.2m139.8 0h2.2m41.8 0h2.2M222.9 700h2.2m184.8 0h2.2m41.8 0h2.2m139.8 0h2.2m41.8 0h2.2M266.9 701h2.2m41.8 0h2.2m184.8 0h2.2m41.8 0h2.2m139.8 0h2.2m42.8 0h2.2M203.9 702h2.2m5.8 0h2.2m140.8 0h2.2m41.8 0h2.2m184.8 0h2.2M255.9 703h2.2m41.8 0h2.2m141.8 0h2.2m41.8 0h2.2m140.8 0h2.2m41.8 0h2.2M344.9 704h2.2m41.8 0h2.2m140.8 0h2.2m41.8 0h2.2m140.8 0h2.2M244.9 705h2.2m42.8 0h2.2m140.8 0h2.2m42.8 0h2.2m140.8 0h2.2m41.8 0h2.2M333.9 706h2.2m41.8 0h2.2m141.8 0h2.2m41.8 0h2.2m140.8 0h2.2m41.8 0h2.2M233.9 707h2.2m186.8 0h2.2m41.8 0h2.2m141.8 0h2.2m41.8 0h2.2M278.9 708h2.2m41.8 0h2.2m186.8 0h2.2m184.8 0h2.2m42.8 0h2.2M222.9 709h2.2m142.8 0h2.2m41.8 0h2.2m141.8 0h2.2m42.8 0h2.2M267.9 710h2.2m41.8 0h2.2m142.8 0h2.2m41.8 0h2.2m141.8 0h2.2m41.8 0h2.2M356.9 711h2.2m42.8 0h2.2m141.8 0h2.2m41.8 0h2.2m141.8 0h2.2M203.9 712h2.2m5.8 0h2.2m42.8 0h2.2m186.8 0h2.2m42.8 0h2.2m141.8 0h2.2m42.8 0h2.2M301.9 713h2.2m41.8 0h2.2m187.8 0h2.2m41.8 0h2.2m141.8 0h2.2M245.9 714h2.2m142.8 0h2.2m42.8 0h2.2m186.8 0h2.2m42.8 0h2.2M290.9 715h2.2m42.8 0h2.2m142.8 0h2.2m41.8 0h2.2m186.8 0h2.2M234.9 716h2.2m142.8 0h2.2m42.8 0h2.2m142.8 0h2.2m42.8 0h2.2m141.8 0h2.2M279.9 717h2.2m42.8 0h2.2m142.8 0h2.2m42.8 0h2.2m142.8 0h2.2m42.8 0h2.2M369.9 718h2.2m187.8 0h2.2m42.8 0h2.2m141.8 0h2.2M223.9 719h2.2m42.8 0h2.2m143.8 0h2.2m42.8 0h2.2m187.8 0h2.2m42.8 0h2.2M313.9 720h2.2m42.8 0h2.2m143.8 0h2.2m42.8 0h2.2m187.8 0h2.2M203.9 721h2.2m6.8 0h2.2m42.8 0h2.2m143.8 0h2.2m42.8 0h2.2m143.8 0h2.2m42.8 0h2.2M302.9 722h2.2m42.8 0h2.2m143.8 0h2.2m42.8 0h2.2m143.8 0h2.2m42.8 0h2.2M392.9 723h2.2m188.8 0h2.2m42.8 0h2.2M246.9 724h2.2m42.8 0h2.2m143.8 0h2.2m43.8 0h2.2m188.8 0h2.2M336.9 725h2.2m42.8 0h2.2m144.8 0h2.2m42.8 0h2.2m143.8 0h2.2m42.8 0h2.2M235.9 726h2.2m42.8 0h2.2m144.8 0h2.2m42.8 0h2.2m143.8 0h2.2m43.8 0h2.2M325.9 727h2.2m189.8 0h2.2m43.8 0h2.2m143.8 0h2.2m42.8 0h2.2M223.9 728h2.2m145.8 0h2.2m42.8 0h2.2m189.8 0h2.2m42.8 0h2.2M269.9 729h2.2m42.8 0h2.2m144.8 0h2.2m43.8 0h2.2m189.8 0h2.2M360.9 730h2.2m42.8 0h2.2m144.8 0h2.2m43.8 0h2.2m143.8 0h2.2M204.9 731h2.2m5.8 0h2.2m43.8 0h2.2m190.8 0h2.2m42.8 0h2.2m144.8 0h2.2m43.8 0h2.2M303.9 732h2.2m43.8 0h2.2m190.8 0h2.2m42.8 0h2.2m144.8 0h2.2M246.9 733h2.2m145.8 0h2.2m43.8 0h2.2m190.8 0h2.2M292.9 734h2.2m43.8 0h2.2m145.8 0h2.2m42.8 0h2.2m145.8 0h2.2m42.8 0h2.2M384.9 735h2.2m42.8 0h2.2m145.8 0h2.2m43.8 0h2.2m144.8 0h2.2M235.9 736h2.2m43.8 0h2.2m191.8 0h2.2m190.8 0h2.2m43.8 0h2.2M327.9 737h2.2m43.8 0h2.2m145.8 0h2.2m43.8 0h2.2m190.8 0h2.2M224.9 738h2.2m192.8 0h2.2m42.8 0h2.2m145.8 0h2.2m43.8 0h2.2M270.9 739h2.2m43.8 0h2.2m191.8 0h2.2m43.8 0h2.2m145.8 0h2.2m43.8 0h2.2M204.9 740h2.2m6.8 0h2.2m146.8 0h2.2m43.8 0h2.2m191.8 0h2.2M259.9 741h2.2m43.8 0h2.2m146.8 0h2.2m43.8 0h2.2m145.8 0h2.2m43.8 0h2.2M351.9 742h2.2m43.8 0h2.2m146.8 0h2.2m43.8 0h2.2m145.8 0h2.2M247.9 743h2.2m193.8 0h2.2m192.8 0h2.2m43.8 0h2.2M293.9 744h2.2m44.8 0h2.2m146.8 0h2.2m43.8 0h2.2m192.8 0h2.2M386.9 745h2.2m43.8 0h2.2m146.8 0h2.2m43.8 0h2.2m146.8 0h2.2M236.9 746h2.2m43.8 0h2.2m193.8 0h2.2m43.8 0h2.2m147.8 0h2.2m43.8 0h2.2M328.9 747h2.2m44.8 0h2.2m193.8 0h2.2m192.8 0h2.2M224.9 748h2.2m44.8 0h2.2m147.8 0h2.2m43.8 0h2.2m147.8 0h2.2m43.8 0h2.2M317.9 749h2.2m194.8 0h2.2m43.8 0h2.2m147.8 0h2.2m43.8 0h2.2M204.9 750h2.2m6.8 0h2.2m148.8 0h2.2m43.8 0h2.2m193.8 0h2.2M259.9 751h2.2m44.8 0h2.2m148.8 0h2.2m43.8 0h2.2m147.8 0h2.2m43.8 0h2.2M353.9 752h2.2m193.8 0h2.2m44.8 0h2.2m147.8 0h2.2M248.9 753h2.2m148.8 0h2.2m44.8 0h2.2m194.8 0h2.2M295.9 754h2.2m43.8 0h2.2m148.8 0h2.2m44.8 0h2.2m147.8 0h2.2m44.8 0h2.2M388.9 755h2.2m44.8 0h2.2m147.8 0h2.2m44.8 0h2.2m147.8 0h2.2M237.9 756h2.2m43.8 0h2.2m195.8 0h2.2m195.8 0h2.2M330.9 757h2.2m44.8 0h2.2m148.8 0h2.2m44.8 0h2.2m147.8 0h2.2m44.8 0h2.2M225.9 758h2.2m196.8 0h2.2m43.8 0h2.2m149.8 0h2.2m43.8 0h2.2M272.9 759h2.2m44.8 0h2.2m195.8 0h2.2m195.8 0h2.2M366.9 760h2.2m44.8 0h2.2m148.8 0h2.2m44.8 0h2.2m148.8 0h2.2M205.9 761h2.2m5.8 0h2.2m44.8 0h2.2m196.8 0h2.2m44.8 0h2.2m149.8 0h2.2m44.8 0h2.2M307.9 762h2.2m44.8 0h2.2m196.8 0h2.2m196.8 0h2.2M401.9 763h2.2m44.8 0h2.2m149.8 0h2.2m44.8 0h2.2M249.9 764h2.2m44.8 0h2.2m197.8 0h2.2m44.8 0h2.2m148.8 0h2.2m44.8 0h2.2M343.9 765h2.2m44.8 0h2.2m197.8 0h2.2m196.8 0h2.2M237.9 766h2.2m197.8 0h2.2m45.8 0h2.2m149.8 0h2.2m44.8 0h2.2M284.9 767h2.2m45.8 0h2.2m197.8 0h2.2m196.8 0h2.2m44.8 0h2.2M226.9 768h2.2m150.8 0h2.2m44.8 0h2.2m150.8 0h2.2m44.8 0h2.2M273.9 769h2.2m198.8 0h2.2m44.8 0h2.2m149.8 0h2.2m45.8 0h2.2M320.9 770h2.2m45.8 0h2.2m197.8 0h2.2m197.8 0h2.2M205.9 771h2.2m6.8 0h2.2m198.8 0h2.2m44.8 0h2.2m151.8 0h2.2m44.8 0h2.2M261.9 772h2.2m45.8 0h2.2m198.8 0h2.2m197.8 0h2.2m45.8 0h2.2M356.9 773h2.2m45.8 0h2.2m150.8 0h2.2m45.8 0h2.2M250.9 774h2.2m198.8 0h2.2m45.8 0h2.2m150.8 0h2.2m45.8 0h2.2M297.9 775h2.2m45.8 0h2.2m198.8 0h2.2m198.8 0h2.2M393.9 776h2.2m44.8 0h2.2m151.8 0h2.2m45.8 0h2.2m150.8 0h2.2M238.9 777h2.2m45.8 0h2.2m199.8 0h2.2m198.8 0h2.2m45.8 0h2.2M333.9 778h2.2m45.8 0h2.2m152.8 0h2.2m44.8 0h2.2m199.8 0h2.2M226.9 779h2.2m200.8 0h2.2m45.8 0h2.2m151.8 0h2.2m45.8 0h2.2M274.9 780h2.2m45.8 0h2.2m200.8 0h2.2m199.8 0h2.2M370.9 781h2.2m45.8 0h2.2m151.8 0h2.2m45.8 0h2.2m151.8 0h2.2M206.9 782h2.2m5.8 0h2.2m45.8 0h2.2m201.8 0h2.2m199.8 0h2.2M310.9 783h2.2m45.8 0h2.2m152.8 0h2.2m45.8 0h2.2m152.8 0h2.2m45.8 0h2.2M406.9 784h2.2m200.8 0h2.2m45.8 0h2.2M250.9 785h2.2m46.8 0h2.2m152.8 0h2.2m45.8 0h2.2m200.8 0h2.2M347.9 786h2.2m45.8 0h2.2m152.8 0h2.2m46.8 0h2.2m152.8 0h2.2m45.8 0h2.2M239.9 787h2.2m201.8 0h2.2m201.8 0h2.2M287.9 788h2.2m45.8 0h2.2m153.8 0h2.2m45.8 0h2.2m153.8 0h2.2m45.8 0h2.2M383.9 789h2.2m202.8 0h2.2m200.8 0h2.2M227.9 790h2.2m45.8 0h2.2m154.8 0h2.2m45.8 0h2.2m153.8 0h2.2m45.8 0h2.2M323.9 791h2.2m202.8 0h2.2m201.8 0h2.2m46.8 0h2.2M206.9 792h2.2m6.8 0h2.2m154.8 0h2.2m45.8 0h2.2m154.8 0h2.2m45.8 0h2.2M263.9 793h2.2m203.8 0h2.2m45.8 0h2.2m153.8 0h2.2m46.8 0h2.2M312.9 794h2.2m45.8 0h2.2m203.8 0h2.2m201.8 0h2.2M409.9 795h2.2m45.8 0h2.2m154.8 0h2.2m46.8 0h2.2M251.9 796h2.2m46.8 0h2.2m203.8 0h2.2m202.8 0h2.2M349.9 797h2.2m45.8 0h2.2m155.8 0h2.2m45.8 0h2.2m154.8 0h2.2m45.8 0h2.2M239.9 798h2.2m204.8 0h2.2m203.8 0h2.2M288.9 799h2.2m46.8 0h2.2m155.8 0h2.2m45.8 0h2.2m154.8 0h2.2m46.8 0h2.2M386.9 800h2.2m203.8 0h2.2m203.8 0h2.2M227.9 801h2.2m204.8 0h2.2m46.8 0h2.2m155.8 0h2.2m46.8 0h2.2M276.9 802h2.2m46.8 0h2.2m204.8 0h2.2m204.8 0h2.2M374.9 803h2.2m46.8 0h2.2m155.8 0h2.2m46.8 0h2.2m154.8 0h2.2M206.9 804h2.2m6.8 0h2.2m46.8 0h2.2m205.8 0h2.2m204.8 0h2.2M313.9 805h2.2m46.8 0h2.2m156.8 0h2.2m46.8 0h2.2m155.8 0h2.2m46.8 0h2.2M411.9 806h2.2m205.8 0h2.2M252.9 807h2.2m46.8 0h2.2m156.8 0h2.2m47.8 0h2.2m155.8 0h2.2m46.8 0h2.2M351.9 808h2.2m205.8 0h2.2m204.8 0h2.2M400.9 809h2.2m46.8 0h2.2m156.8 0h2.2m46.8 0h2.2m155.8 0h2.2M240.9 810h2.2m46.8 0h2.2m206.8 0h2.2m205.8 0h2.2M339.9 811h2.2m46.8 0h2.2m156.8 0h2.2m47.8 0h2.2m155.8 0h2.2m47.8 0h2.2M228.9 812h2.2m206.8 0h2.2m206.8 0h2.2M277.9 813h2.2m47.8 0h2.2m157.8 0h2.2m46.8 0h2.2m156.8 0h2.2m47.8 0h2.2M376.9 814h2.2m207.8 0h2.2m205.8 0h2.2M207.9 815h2.2m6.8 0h2.2m207.8 0h2.2m46.8 0h2.2m157.8 0h2.2m46.8 0h2.2M265.9 816h2.2m47.8 0h2.2m207.8 0h2.2m206.8 0h2.2M364.9 817h2.2m47.8 0h2.2m157.8 0h2.2m47.8 0h2.2m156.8 0h2.2M253.9 818h2.2m208.8 0h2.2m206.8 0h2.2M303.9 819h2.2m207.8 0h2.2m47.8 0h2.2m157.8 0h2.2m47.8 0h2.2M352.9 820h2.2m47.8 0h2.2m208.8 0h2.2m206.8 0h2.2M662.9 821h2.2" fill="none" stroke="#363636" stroke-width="2.2"/></g><g><path d="M583.3 216.3L814.0 201.0 M583.3 216.3L586.5 238.5 M814.0 201.0L817.5 223.0 M583.3 216.3L618.0 1275.0 M586.5 238.5L629.0 1275.0 M814.0 201.0L1482.1 1275.0 M817.5 223.0L1437.1 1275.0" fill="none" stroke="#50d8ae" stroke-width="1.3"/></g><g><path d="M326 659.5 L790 487.5" stroke="#14143c" stroke-width="1.35"/></g><ellipse cx="1416" cy="282" rx="46" ry="10" fill="#9a9aa0" opacity=".55" filter="url(#shadow)"/><path d="M1368 236 L1368 286 L1380 292 L1378 240Z" fill="#a8a8ae" opacity=".5" filter="url(#shadow)"/><path d="M1359.9 172.7 L1437.2 165 L1460.8 208.2 L1371.7 219.3Z" fill="#e9ecf3"/><path d="M1371.7 219.3 L1460.8 208.2 L1455.9 268 L1376.6 284Z" fill="url(#cubeF)"/><path d="M1359.9 172.7 L1371.7 219.3 L1376.6 284 L1364.5 226Z" fill="#d0d3da"/><path d="M1359.9 172.7 L1437.2 165 L1460.8 208.2 L1455.9 268 L1376.6 284 L1364.5 226Z M1371.7 219.3 L1460.8 208.2 M1371.7 219.3 L1376.6 284 M1359.9 172.7 L1371.7 219.3" fill="none" stroke="#9a9ca2" stroke-width="1.1" stroke-dasharray="9 5"/><text transform="matrix(1,-0.105,0.35,.62,1388,198)" font-size="17" font-weight="bold" fill="#9ca2ac" textLength="36" lengthAdjust="spacingAndGlyphs">TOP</text><text transform="matrix(1,-0.155,-0.03,1,1388.5,258)" font-size="19.5" font-weight="bold" fill="#9298a4" textLength="58" lengthAdjust="spacingAndGlyphs">FRONT</text><g><path d="M374.2 1205.5 V1222.5" stroke="#4cd838" stroke-width="1.25"/><path d="M383.5 1222.4 L397 1219.2" stroke="#d02a2a" stroke-width="1.3" stroke-dasharray="5 1.6"/><text x="366" y="1198.6" font-size="23" font-weight="bold" fill="#3fd42a" textLength="14.5" lengthAdjust="spacingAndGlyphs">y</text><text x="395.6" y="1217.8" font-size="22" font-weight="bold" fill="#d62828" textLength="12.8" lengthAdjust="spacingAndGlyphs">x</text><text x="372.8" y="1236.6" font-size="22" font-weight="bold" fill="#2424c8" textLength="12.6" lengthAdjust="spacingAndGlyphs">z</text><text x="875.5" y="1256" font-size="17.5" font-weight="bold" fill="#1c3a24" textLength="55" lengthAdjust="spacingAndGlyphs">persp</text></g><path d="M1052.8 562.8 L1052.8 589 L1058 585 L1067.6 599.6 L1070.6 596.6 L1064.6 583 L1071.4 581Z" fill="#fbfbfb" stroke="#141414" stroke-width="1.7" stroke-linejoin="round"/></svg></div>
</div></div></body></html>
